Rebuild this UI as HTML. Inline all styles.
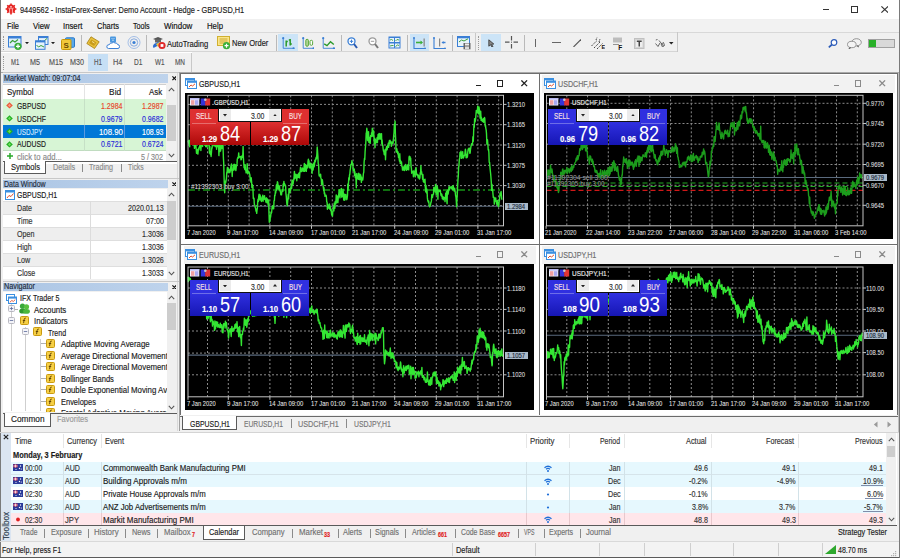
<!DOCTYPE html><html><head><meta charset="utf-8"><style>
html,body{margin:0;padding:0;}
body{width:900px;height:558px;position:relative;overflow:hidden;background:#f0f0f0;font-family:"Liberation Sans",sans-serif;}
div{position:absolute;box-sizing:border-box;}
.t{white-space:nowrap;line-height:1;transform-origin:0 0;-webkit-text-stroke:0.15px currentColor;}
svg{position:absolute;}
</style></head><body>
<div style="left:0px;top:0px;width:900px;height:19px;background:#ffffff;"></div>
<svg style="left:5px;top:3px" width="12" height="12" viewBox="0 0 12 12"><g fill="#e52421"><circle cx="6" cy="6" r="4.4"/><g stroke="#e52421" stroke-width="1.5"><line x1="6" y1="0.6" x2="6" y2="11.4"/><line x1="0.6" y1="6" x2="11.4" y2="6"/><line x1="2.2" y1="2.2" x2="9.8" y2="9.8"/><line x1="9.8" y1="2.2" x2="2.2" y2="9.8"/></g></g><circle cx="6" cy="3.8" r="0.9" fill="#ffd8d8"/><path d="M4.6 5.6V10M7.4 5.6V10" stroke="#ffb0b0" stroke-width="1"/><path d="M3.2 5Q6 6.5 8.8 5" stroke="#ffc0c0" stroke-width="0.7" fill="none"/></svg>
<div class="t" style="left:19.70px;top:5.51px;font-size:9.2px;color:#1a1a1a;font-weight:normal;transform:scaleX(0.8042);">9449562 - InstaForex-Server: Demo Account - Hedge - GBPUSD,H1</div>
<div style="left:822.5px;top:9px;width:6.5px;height:1.1px;background:#333;"></div>
<div style="left:851px;top:6px;width:7px;height:7px;border:1.2px solid #333"></div>
<svg style="left:880.5px;top:6px" width="7.5" height="7" viewBox="0 0 7.5 7"><path d="M0.4 0.4L7.1 6.6M7.1 0.4L0.4 6.6" stroke="#333" stroke-width="1.15"/></svg>
<div style="left:0px;top:19.5px;width:900px;height:12.5px;background:#f2f2f2;"></div>
<div class="t" style="left:7.30px;top:22.66px;font-size:8.2px;color:#111;font-weight:normal;transform:scaleX(0.9082);">File</div>
<div class="t" style="left:33.30px;top:22.66px;font-size:8.2px;color:#111;font-weight:normal;transform:scaleX(0.9475);">View</div>
<div class="t" style="left:63.30px;top:22.66px;font-size:8.2px;color:#111;font-weight:normal;transform:scaleX(0.9460);">Insert</div>
<div class="t" style="left:96.70px;top:22.66px;font-size:8.2px;color:#111;font-weight:normal;transform:scaleX(0.9110);">Charts</div>
<div class="t" style="left:133.30px;top:22.66px;font-size:8.2px;color:#111;font-weight:normal;transform:scaleX(0.8724);">Tools</div>
<div class="t" style="left:164.30px;top:22.66px;font-size:8.2px;color:#111;font-weight:normal;transform:scaleX(0.9738);">Window</div>
<div class="t" style="left:207.30px;top:22.66px;font-size:8.2px;color:#111;font-weight:normal;transform:scaleX(0.9488);">Help</div>
<div style="left:0px;top:32px;width:900px;height:1px;background:#d8d8d8;"></div>
<div style="left:0px;top:33px;width:900px;height:19px;background:#f0f0f0;"></div>
<div style="left:0px;top:32px;width:677px;height:1px;background:#dadada;"></div>
<div style="left:0px;top:51px;width:677px;height:1px;background:#d5d5d5;"></div>
<div style="left:677px;top:32px;width:1px;height:20px;background:#c8c8c8;"></div>
<div style="left:3px;top:36px;width:1px;height:14px;border-left:1px dotted #999"></div>
<div style="left:0px;top:53px;width:900px;height:19px;background:#f0f0f0;"></div>
<div style="left:0px;top:52px;width:192px;height:1px;background:#ffffff;"></div>
<div style="left:191px;top:53px;width:1px;height:19px;background:#c8c8c8;"></div>
<div style="left:3px;top:56px;width:1px;height:14px;border-left:1px dotted #999"></div>
<div style="left:88px;top:54px;width:20px;height:17px;background:#c6dff5;"></div>
<div class="t" style="left:11.00px;top:59.26px;font-size:8.2px;color:#555;font-weight:normal;transform:scaleX(0.7287);">M1</div>
<div class="t" style="left:30.00px;top:59.26px;font-size:8.2px;color:#555;font-weight:normal;transform:scaleX(0.8779);">M5</div>
<div class="t" style="left:49.30px;top:59.26px;font-size:8.2px;color:#555;font-weight:normal;transform:scaleX(0.8777);">M15</div>
<div class="t" style="left:70.00px;top:59.26px;font-size:8.2px;color:#555;font-weight:normal;transform:scaleX(0.8777);">M30</div>
<div class="t" style="left:94.30px;top:59.26px;font-size:8.2px;color:#555;font-weight:normal;transform:scaleX(0.7632);">H1</div>
<div class="t" style="left:113.30px;top:59.26px;font-size:8.2px;color:#555;font-weight:normal;transform:scaleX(0.8968);">H4</div>
<div class="t" style="left:134.30px;top:59.26px;font-size:8.2px;color:#555;font-weight:normal;transform:scaleX(0.8014);">D1</div>
<div class="t" style="left:154.50px;top:59.26px;font-size:8.2px;color:#555;font-weight:normal;transform:scaleX(0.7724);">W1</div>
<div class="t" style="left:175.00px;top:59.26px;font-size:8.2px;color:#555;font-weight:normal;transform:scaleX(0.7842);">MN</div>
<svg style="left:8px;top:35.5px" width="15" height="14" viewBox="0 0 15 14"><rect x="0.5" y="0.5" width="12.5" height="10.5" fill="#dfeefc" stroke="#3a7fd5"/><rect x="0.5" y="0.5" width="12.5" height="2" fill="#3a7fd5"/><path d="M2 7L4.5 4.5L7 6L10 3.5" stroke="#3aa03a" stroke-width="1.1" fill="none"/><circle cx="10" cy="10.3" r="3.6" fill="#3aae3a"/><path d="M8 10.3H12M10 8.3V12.3" stroke="#fff" stroke-width="1.2"/></svg>
<svg style="left:24.9px;top:42.2px" width="4" height="2.2" viewBox="0 0 4 2.2"><path d="M0 0H4L2 2.2Z" fill="#222"/></svg>
<svg style="left:34.5px;top:35.5px" width="14" height="14" viewBox="0 0 14 14"><rect x="3.5" y="0.5" width="9.5" height="8" fill="#e6f2fc" stroke="#3a7fd5"/><rect x="3.5" y="0.5" width="9.5" height="1.6" fill="#3a7fd5"/><path d="M5 4L7 6.5L9 5L12 2.5" stroke="#3aa03a" stroke-width="1" fill="none"/><rect x="0.5" y="4.8" width="9.5" height="8.5" fill="#e6f2fc" stroke="#3a7fd5"/><rect x="0.5" y="4.8" width="9.5" height="1.6" fill="#3a7fd5"/><path d="M1.5 9L3.5 11L6 9.5L9 11" stroke="#3aa03a" stroke-width="1" fill="none"/></svg>
<svg style="left:51.1px;top:42.2px" width="4" height="2.2" viewBox="0 0 4 2.2"><path d="M0 0H4L2 2.2Z" fill="#222"/></svg>
<svg style="left:61px;top:36.5px" width="14" height="13" viewBox="0 0 14 13"><rect x="4.5" y="0.8" width="9" height="9.5" rx="1" fill="#5aa8e8" stroke="#2a78c8"/><rect x="0.5" y="2.5" width="9.5" height="10" rx="1" fill="#f2c83a" stroke="#c8980a"/><text x="5.2" y="11" font-size="8" font-weight="bold" text-anchor="middle" fill="#6a4a00" font-family="Liberation Sans">S</text></svg>
<div style="left:80.5px;top:35px;width:1px;height:16px;background:#b9b9b9;"></div>
<svg style="left:85.5px;top:36px" width="14" height="13" viewBox="0 0 14 13"><path d="M5 0.8L13.2 5.8L8.5 12.5L0.8 7.5Z" fill="#e9c23c" stroke="#a47d10" stroke-width="0.8"/><path d="M5.5 3.5L10.5 6.5L8 10L3 7Z" fill="#c99c1c"/><path d="M6 5.5L8.5 7" stroke="#fff3b0" stroke-width="0.8"/></svg>
<svg style="left:106px;top:36px" width="14" height="13" viewBox="0 0 14 13"><rect x="4" y="0.5" width="6" height="6" rx="1" fill="#4a98e0"/><path d="M5.5 2.5H6.5M7.5 2.5H8.5M6 4.2H8" stroke="#fff" stroke-width="0.6"/><path d="M2.5 12.5H12Q13.5 12.5 13.5 10.5Q13.5 8.5 11.5 8.5Q11 6.5 9 7Q7.5 5.5 6 7Q4 6.5 3.5 8.5Q0.5 8.8 0.8 10.8Q1 12.5 2.5 12.5Z" fill="#fff" stroke="#3a7fd5" stroke-width="1"/></svg>
<svg style="left:127px;top:36.2px" width="14" height="13" viewBox="0 0 14 13"><circle cx="7" cy="6.5" r="1.6" fill="#3a7fd5"/><circle cx="7" cy="6.5" r="3.7" fill="none" stroke="#7aa2dc" stroke-width="0.9"/><circle cx="7" cy="6.5" r="6" fill="none" stroke="#9ab8e4" stroke-width="0.9"/></svg>
<div style="left:146.4px;top:35px;width:1px;height:16px;background:#b9b9b9;"></div>
<svg style="left:151.5px;top:36px" width="14" height="13.5" viewBox="0 0 14 13.5"><path d="M1 3L6 1L11 3L6 5Z" fill="#555"/><rect x="3" y="3.5" width="6" height="3" fill="#666"/><path d="M1.5 12Q0 10 2 8L6 6L9 8Z" fill="#2a6ad0"/><path d="M4 8L8 6L10 9L6 11Z" fill="#e8c040"/><circle cx="10" cy="9.5" r="3.6" fill="#e02828"/><rect x="8.6" y="8.1" width="2.8" height="2.8" fill="#fff"/></svg>
<div class="t" style="left:166.70px;top:39.62px;font-size:8.6px;color:#1a1a1a;font-weight:normal;transform:scaleX(0.8876);">AutoTrading</div>
<svg style="left:216.9px;top:36px" width="14" height="13.5" viewBox="0 0 14 13.5"><rect x="0.5" y="0.5" width="12" height="9" fill="#fbe68a" stroke="#d0b030"/><path d="M2.5 3H10.5M2.5 5H10.5M2.5 7H8" stroke="#c09a20" stroke-width="0.8"/><circle cx="9.5" cy="9.7" r="3.6" fill="#3aae3a"/><path d="M7.5 9.7H11.5M9.5 7.7V11.7" stroke="#fff" stroke-width="1.2"/></svg>
<div class="t" style="left:232.00px;top:39.42px;font-size:8.6px;color:#1a1a1a;font-weight:normal;transform:scaleX(0.8755);">New Order</div>
<div style="left:275.6px;top:35px;width:1px;height:16px;background:#b9b9b9;"></div>
<div style="left:278.1px;top:33.9px;width:19.8px;height:16.8px;background:#cce4f7;"></div>
<svg style="left:282px;top:36.5px" width="12.5" height="12.5" viewBox="0 0 12.5 12.5"><path d="M1.2 1V11.3H11.8" stroke="#3a7fd5" stroke-width="0.9" fill="none"/><circle cx="1.2" cy="1.2" r="1.1" fill="#3a7fd5"/><circle cx="11.6" cy="11.3" r="1.1" fill="#3a7fd5"/><path d="M4.2 9.5V3.5M4.2 4.5H5.8M8.2 8.5V2M8.2 3H6.8M8.2 7H9.8" stroke="#2a9a2a" stroke-width="1.5" fill="none"/></svg>
<svg style="left:301.8px;top:36.5px" width="12.5" height="12.5" viewBox="0 0 12.5 12.5"><path d="M1.2 1V11.3H11.8" stroke="#3a7fd5" stroke-width="0.9" fill="none"/><circle cx="1.2" cy="1.2" r="1.1" fill="#3a7fd5"/><circle cx="11.6" cy="11.3" r="1.1" fill="#3a7fd5"/><rect x="3.8" y="2.3" width="2.6" height="7" rx="1.2" fill="#b8d8a0" stroke="#4aa02a" stroke-width="0.9"/><rect x="8" y="3.3" width="2.6" height="5" rx="1.2" fill="#fff" stroke="#4aa02a" stroke-width="0.9"/></svg>
<svg style="left:322px;top:36.5px" width="13" height="12.5" viewBox="0 0 13 12.5"><path d="M1.2 1V11.3H12.3" stroke="#3a7fd5" stroke-width="0.9" fill="none"/><circle cx="1.2" cy="1.2" r="1.1" fill="#3a7fd5"/><circle cx="12" cy="11.3" r="1.1" fill="#3a7fd5"/><path d="M2.2 6.8L5 8.6L8.5 4.8L11.8 7.5" stroke="#2a9a2a" stroke-width="1.4" fill="none"/></svg>
<div style="left:341px;top:35px;width:1px;height:16px;background:#b9b9b9;"></div>
<svg style="left:347.3px;top:36.5px" width="11" height="12.5" viewBox="0 0 11 12.5"><circle cx="4.5" cy="4.3" r="3.5" fill="#fff" stroke="#3a7fd5" stroke-width="1.3"/><path d="M2.8 4.3H6.2M4.5 2.6V6" stroke="#3a7fd5" stroke-width="1"/><path d="M7 7L10 11" stroke="#2a5ab0" stroke-width="2"/></svg>
<svg style="left:368px;top:36.5px" width="11" height="12.5" viewBox="0 0 11 12.5"><circle cx="4.5" cy="4.3" r="3.5" fill="#fff" stroke="#9a9a9a" stroke-width="1.3"/><path d="M2.8 4.3H6.2" stroke="#9a9a9a" stroke-width="1"/><path d="M7 7L10 11" stroke="#777" stroke-width="2"/></svg>
<svg style="left:387.8px;top:36.2px" width="13" height="13" viewBox="0 0 13 13"><rect x="0.5" y="0.5" width="12" height="12" fill="#3a7fd5"/><rect x="1.5" y="2" width="4.5" height="4" fill="#e8f4fc"/><rect x="7" y="2" width="4.5" height="4" fill="#e8f4fc"/><rect x="1.5" y="7.5" width="4.5" height="4" fill="#e8f4fc"/><rect x="7" y="7.5" width="4.5" height="4" fill="#e8f4fc"/><path d="M2 4L3.5 3.5L5 4.5M7.5 5L9 3.5L11 4M2 10L4 9.5L5.5 9.5M7.5 10.5L9.5 9L11 9.5" stroke="#3a9a3a" stroke-width="0.9" fill="none"/></svg>
<div style="left:406.6px;top:35px;width:1px;height:16px;background:#b9b9b9;"></div>
<div style="left:410px;top:33.9px;width:18.7px;height:16.8px;background:#cce4f7;"></div>
<svg style="left:413px;top:36.5px" width="13.5" height="12.5" viewBox="0 0 13.5 12.5"><path d="M1 0.5V11.5H12.5" stroke="#3a7fd5" stroke-width="1.1" fill="none"/><circle cx="1" cy="1" r="0.9" fill="#3a7fd5"/><circle cx="12" cy="11.5" r="0.9" fill="#3a7fd5"/><rect x="10.5" y="1.5" width="1.3" height="8" fill="#888"/><path d="M3 5.5H9" stroke="#3ab03a" stroke-width="1.6"/><path d="M7.5 3.5L10 5.5L7.5 7.5Z" fill="#3ab03a"/></svg>
<svg style="left:433px;top:36.5px" width="13.5" height="12.5" viewBox="0 0 13.5 12.5"><path d="M1 0.5V11.5H12.5" stroke="#3a7fd5" stroke-width="1.1" fill="none"/><circle cx="1" cy="1" r="0.9" fill="#3a7fd5"/><circle cx="12" cy="11.5" r="0.9" fill="#3a7fd5"/><rect x="6" y="1.5" width="1.2" height="8" fill="#888"/><path d="M8.5 5.5L10.5 4V7Z" fill="#3a7fd5"/><rect x="10" y="4.8" width="2.5" height="1.4" fill="#3a7fd5"/></svg>
<div style="left:451.7px;top:35px;width:1px;height:16px;background:#b9b9b9;"></div>
<svg style="left:457px;top:36px" width="14" height="13.5" viewBox="0 0 14 13.5"><rect x="0.5" y="0.5" width="12" height="10" fill="#e8f4fc" stroke="#3a7fd5"/><rect x="0.5" y="0.5" width="12" height="1.8" fill="#3a7fd5"/><path d="M2 6L4.5 4L7 5L11 2.8" stroke="#3aa03a" stroke-width="1" fill="none"/><rect x="6.5" y="7" width="7" height="6.3" fill="#666"/><rect x="8" y="7.5" width="4" height="2" fill="#eee"/><rect x="8" y="10.5" width="4" height="2.5" fill="#ddd"/></svg>
<div style="left:474.7px;top:33px;width:1px;height:19px;background:#c8c8c8;"></div>
<div style="left:477.5px;top:36px;width:1px;height:14px;border-left:1px dotted #999"></div>
<div style="left:480.9px;top:33.9px;width:19.8px;height:16.8px;background:#cce4f7;"></div>
<svg style="left:487.5px;top:38.5px" width="6.5" height="8.5" viewBox="0 0 6.5 8.5"><path d="M0.8 0.8L5.8 5L3.6 5.3L5 7.8L4 8.2L2.6 5.8L0.8 7.2Z" fill="#888" stroke="#333" stroke-width="0.8"/></svg>
<svg style="left:504.5px;top:36.3px" width="13" height="12.5" viewBox="0 0 13 12.5"><path d="M6.5 0V4.5M6.5 8V12.5M0 6.2H4.5M8.5 6.2H13" stroke="#555" stroke-width="1.2"/><rect x="6" y="5.7" width="1" height="1" fill="#555"/></svg>
<div style="left:523.7px;top:35px;width:1px;height:16px;background:#b9b9b9;"></div>
<div style="left:535px;top:38.6px;width:1px;height:8.399999999999999px;background:#666;"></div>
<div style="left:551.7px;top:42.4px;width:8.899999999999977px;height:1px;background:#666;"></div>
<svg style="left:572.5px;top:38.5px" width="8.5" height="8.5" viewBox="0 0 8.5 8.5"><path d="M0.5 8L8 0.5" stroke="#555" stroke-width="1.1"/></svg>
<svg style="left:591px;top:36.5px" width="13.5" height="12.5" viewBox="0 0 13.5 12.5"><path d="M0.5 9L6 3.5M3 11L9.5 4.5M6 12L11.5 6.5M5 3L6 0.5M8 5L9 2" stroke="#444" stroke-width="1" fill="none" stroke-dasharray="1.5 0.8"/><text x="10.5" y="12.3" font-size="5.5" font-weight="bold" fill="#111" font-family="Liberation Sans">E</text></svg>
<svg style="left:613px;top:36.5px" width="11" height="13" viewBox="0 0 11 13"><rect x="0" y="0.5" width="9" height="5" fill="#bdbdbd"/><path d="M0 7.5H6" stroke="#888" stroke-width="0.9"/><text x="5.3" y="12.8" font-size="6.5" font-weight="bold" fill="#111" font-family="Liberation Sans">F</text></svg>
<svg style="left:634px;top:37.5px" width="10.5" height="11" viewBox="0 0 10.5 11"><rect x="0.5" y="0.5" width="9.5" height="10" fill="#d4d4d4" stroke="#c0c0c0"/><rect x="2" y="2" width="6.5" height="7" fill="#eee"/><path d="M2.8 3.3H7.7M5.25 3.3V8.5" stroke="#444" stroke-width="1.5"/></svg>
<svg style="left:654.5px;top:38.5px" width="10" height="8.5" viewBox="0 0 10 8.5"><path d="M0.8 1L2.5 0.5M0.5 4.5L3 7.5L5 4M4 1.5L8.5 7M6.2 5.2L8.5 3.5L9.5 6.5L7.5 8Z" stroke="#555" stroke-width="0.9" fill="none"/></svg>
<svg style="left:669px;top:42px" width="4.5" height="2.5" viewBox="0 0 4.5 2.5"><path d="M0 0H4.5L2.25 2.5Z" fill="#222"/></svg>
<svg style="left:828px;top:38.5px" width="10" height="9" viewBox="0 0 10 9"><circle cx="6" cy="3.5" r="2.8" fill="#fff" stroke="#2a5ab8" stroke-width="1.2"/><path d="M4 5.5L0.8 8.3" stroke="#2a5ab8" stroke-width="1.7"/></svg>
<svg style="left:847px;top:38px" width="15" height="11" viewBox="0 0 15 11"><ellipse cx="9.5" cy="4.3" rx="4.8" ry="3.6" fill="#f2f2f2" stroke="#8a8a8a" stroke-width="0.9"/><ellipse cx="4.8" cy="6.5" rx="4.3" ry="3.2" fill="#f4f4f4" stroke="#8a8a8a" stroke-width="0.9"/><path d="M2.5 9.5L2 10.8L4 9.6M11 7.6L11.5 9L10 7.8" stroke="#555" stroke-width="0.8" fill="none"/></svg>
<div style="left:868px;top:39.1px;width:27.1px;height:9.3px;background:#d9d9d9;border:1px solid #a0a0a0"></div>
<div style="left:869px;top:40.1px;width:6.6px;height:7.3px;background:#28b028;"></div>
<div style="left:0px;top:72px;width:900px;height:1px;background:#a9a9a9;"></div>
<div style="left:0px;top:0px;width:1px;height:558px;background:#7a7a7a;"></div>
<div style="left:1px;top:73px;width:179px;height:358px;background:#f0f0f0;"></div>
<div style="left:177px;top:73px;width:1px;height:358px;background:#d9d9d9;"></div>
<div style="left:179px;top:73px;width:1px;height:358px;background:#a0a0a0;"></div>
<div style="left:3px;top:74.4px;width:165px;height:8.199999999999989px;background:linear-gradient(to right,#abc5e4,#bed3ec)"></div>
<div class="t" style="left:4.10px;top:74.07px;font-size:8.3px;color:#1e2a3a;font-weight:normal;transform:scaleX(0.8713);">Market Watch: 09:07:04</div>
<svg style="left:171.5px;top:76.2px" width="4.6" height="4.6" viewBox="0 0 4.6 4.6"><path d="M0.4 0.4L4.2 4.2M4.2 0.4L0.4 4.2" stroke="#111" stroke-width="1.2"/></svg>
<div style="left:3px;top:72.4px;width:176px;height:1px;background:#c8c8c8;"></div>
<div style="left:3px;top:83.5px;width:174px;height:80px;background:#ffffff;"></div>
<div style="left:3px;top:83.5px;width:174px;height:0.8px;background:#cfcfcf;"></div>
<div class="t" style="left:7.00px;top:87.57px;font-size:8.3px;color:#222;font-weight:normal;transform:scaleX(0.9575);">Symbol</div>
<div class="t" style="left:109.10px;top:87.57px;font-size:8.3px;color:#222;font-weight:normal;">Bid</div>
<div class="t" style="left:149.00px;top:87.57px;font-size:8.3px;color:#222;font-weight:normal;transform:scaleX(0.9540);">Ask</div>
<div style="left:3px;top:99.4px;width:162.6px;height:12.8px;background:#d7f5d5;"></div>
<div style="left:3px;top:111.7px;width:162.6px;height:0.6px;background:#c0dcc0;"></div>
<div style="left:84.4px;top:99.4px;width:1px;height:12.799999999999997px;background:#c6e0c6;"></div>
<div style="left:124.4px;top:99.4px;width:1px;height:12.799999999999997px;background:#c6e0c6;"></div>
<svg style="left:6.3px;top:102.2px" width="7" height="7" viewBox="0 0 7 7"><path d="M3.5 0.2L6.8 3.4L3.5 6.6L0.2 3.4Z" fill="#ea5a3a"/><path d="M3.5 1.8L5 3.4L3.5 5L2 3.4Z" fill="#ff9a80"/></svg>
<div class="t" style="left:17.20px;top:102.02px;font-size:8.6px;color:#1a1a1a;font-weight:normal;transform:scaleX(0.7957);">GBPUSD</div>
<div class="t" style="left:101.30px;top:102.02px;font-size:8.6px;color:#e8452c;font-weight:normal;transform:scaleX(0.8175);">1.2984</div>
<div class="t" style="left:141.60px;top:102.02px;font-size:8.6px;color:#e8452c;font-weight:normal;transform:scaleX(0.8175);">1.2987</div>
<div style="left:3px;top:112.2px;width:162.6px;height:12.8px;background:#d7f5d5;"></div>
<div style="left:3px;top:124.5px;width:162.6px;height:0.6px;background:#c0dcc0;"></div>
<div style="left:84.4px;top:112.2px;width:1px;height:12.799999999999997px;background:#c6e0c6;"></div>
<div style="left:124.4px;top:112.2px;width:1px;height:12.799999999999997px;background:#c6e0c6;"></div>
<svg style="left:6.3px;top:115.0px" width="7" height="7" viewBox="0 0 7 7"><path d="M3.5 0.2L6.8 3.4L3.5 6.6L0.2 3.4Z" fill="#22b022"/><path d="M3.5 1.8L5 3.4L3.5 5L2 3.4Z" fill="#70e060"/></svg>
<div class="t" style="left:17.20px;top:114.82px;font-size:8.6px;color:#1a1a1a;font-weight:normal;transform:scaleX(0.8065);">USDCHF</div>
<div class="t" style="left:101.30px;top:114.82px;font-size:8.6px;color:#2c2cd8;font-weight:normal;transform:scaleX(0.8175);">0.9679</div>
<div class="t" style="left:141.60px;top:114.82px;font-size:8.6px;color:#2c2cd8;font-weight:normal;transform:scaleX(0.8175);">0.9682</div>
<div style="left:3px;top:125.0px;width:162.6px;height:12.8px;background:#0078d7;"></div>
<div style="left:3px;top:137.3px;width:162.6px;height:0.6px;background:#0078d7;"></div>
<div style="left:84.4px;top:125.0px;width:1px;height:12.800000000000011px;background:#5a9ae0;"></div>
<div style="left:124.4px;top:125.0px;width:1px;height:12.800000000000011px;background:#5a9ae0;"></div>
<svg style="left:6.3px;top:127.8px" width="7" height="7" viewBox="0 0 7 7"><path d="M3.5 0.2L6.8 3.4L3.5 6.6L0.2 3.4Z" fill="#22b022"/><path d="M3.5 1.8L5 3.4L3.5 5L2 3.4Z" fill="#70e060"/></svg>
<div class="t" style="left:17.20px;top:127.62px;font-size:8.6px;color:#cfe6ff;font-weight:normal;transform:scaleX(0.7545);">USDJPY</div>
<div class="t" style="left:98.80px;top:127.62px;font-size:8.6px;color:#ffffff;font-weight:normal;transform:scaleX(0.9125);">108.90</div>
<div class="t" style="left:141.60px;top:127.62px;font-size:8.6px;color:#ffffff;font-weight:normal;transform:scaleX(0.8175);">108.93</div>
<div style="left:3px;top:137.8px;width:162.6px;height:12.8px;background:#d7f5d5;"></div>
<div style="left:3px;top:150.10000000000002px;width:162.6px;height:0.6px;background:#c0dcc0;"></div>
<div style="left:84.4px;top:137.8px;width:1px;height:12.800000000000011px;background:#c6e0c6;"></div>
<div style="left:124.4px;top:137.8px;width:1px;height:12.800000000000011px;background:#c6e0c6;"></div>
<svg style="left:6.3px;top:140.60000000000002px" width="7" height="7" viewBox="0 0 7 7"><path d="M3.5 0.2L6.8 3.4L3.5 6.6L0.2 3.4Z" fill="#22b022"/><path d="M3.5 1.8L5 3.4L3.5 5L2 3.4Z" fill="#70e060"/></svg>
<div class="t" style="left:17.20px;top:140.42px;font-size:8.6px;color:#1a1a1a;font-weight:normal;transform:scaleX(0.7958);">AUDUSD</div>
<div class="t" style="left:101.30px;top:140.42px;font-size:8.6px;color:#2c2cd8;font-weight:normal;transform:scaleX(0.8175);">0.6721</div>
<div class="t" style="left:141.60px;top:140.42px;font-size:8.6px;color:#2c2cd8;font-weight:normal;transform:scaleX(0.8175);">0.6724</div>
<div style="left:84.4px;top:84px;width:1px;height:15.400000000000006px;background:#e4e4e4;"></div>
<div style="left:124.4px;top:84px;width:1px;height:15.400000000000006px;background:#e4e4e4;"></div>
<svg style="left:7px;top:153px" width="6" height="6" viewBox="0 0 6 6"><path d="M3 0V6M0 3H6" stroke="#2aa82a" stroke-width="1.5"/></svg>
<div class="t" style="left:17.20px;top:152.82px;font-size:8.6px;color:#8a8a8a;font-weight:normal;transform:scaleX(0.8967);">click to add...</div>
<div class="t" style="left:141.00px;top:152.82px;font-size:8.6px;color:#8a8a8a;font-weight:normal;transform:scaleX(0.8366);">5 / 302</div>
<div style="left:165.6px;top:83.5px;width:11.400000000000006px;height:77.5px;background:#f0f0f0;"></div>
<div style="left:167.2px;top:105px;width:8.8px;height:35.5px;background:#cdcdcd;"></div>
<svg style="left:168px;top:86.5px" width="7" height="5" viewBox="0 0 7 5"><path d="M0.8 4.2L3.5 1.2L6.2 4.2" stroke="#555" stroke-width="1.1" fill="none"/></svg>
<svg style="left:168px;top:153px" width="7" height="5" viewBox="0 0 7 5"><path d="M0.8 0.8L3.5 3.8L6.2 0.8" stroke="#555" stroke-width="1.1" fill="none"/></svg>
<div style="left:3px;top:161px;width:174px;height:1px;background:#5a5a5a;"></div>
<div style="left:4.4px;top:161px;width:41.7px;height:13.4px;background:#ffffff;border:1px solid #5a5a5a;border-top:none;border-bottom-width:1.5px"></div>
<div class="t" style="left:11.10px;top:163.42px;font-size:8.6px;color:#222;font-weight:normal;transform:scaleX(0.8794);">Symbols</div>
<div class="t" style="left:53.30px;top:163.42px;font-size:8.6px;color:#8a8a8a;font-weight:normal;transform:scaleX(0.8445);">Details</div>
<div style="left:82.3px;top:164px;width:1px;height:8px;background:#8a8a8a;"></div>
<div class="t" style="left:89.00px;top:163.42px;font-size:8.6px;color:#8a8a8a;font-weight:normal;transform:scaleX(0.8322);">Trading</div>
<div style="left:121px;top:164px;width:1px;height:8px;background:#8a8a8a;"></div>
<div class="t" style="left:128.00px;top:163.42px;font-size:8.6px;color:#8a8a8a;font-weight:normal;transform:scaleX(0.7901);">Ticks</div>
<div style="left:3px;top:179.5px;width:165px;height:8.699999999999989px;background:linear-gradient(to right,#abc5e4,#bed3ec)"></div>
<div class="t" style="left:4.10px;top:179.67px;font-size:8.3px;color:#1e2a3a;font-weight:normal;transform:scaleX(0.8449);">Data Window</div>
<svg style="left:171.5px;top:181.54999999999998px" width="4.6" height="4.6" viewBox="0 0 4.6 4.6"><path d="M0.4 0.4L4.2 4.2M4.2 0.4L0.4 4.2" stroke="#111" stroke-width="1.2"/></svg>
<div style="left:3px;top:177.5px;width:176px;height:1px;background:#c8c8c8;"></div>
<div style="left:3px;top:188.8px;width:174px;height:90.5px;background:#ffffff;"></div>
<svg style="left:5px;top:190px" width="10" height="10" viewBox="0 0 10 10"><rect x="0.5" y="0.5" width="9" height="9" fill="#fff" stroke="#3b8fe0"/><rect x="0.5" y="0.5" width="9" height="2" fill="#3b8fe0"/><path d="M2 8L4 5.5L6 6.5L8.5 3.5" stroke="#e05030" stroke-width="1" fill="none"/></svg>
<div class="t" style="left:16.50px;top:191.12px;font-size:8.6px;color:#1a1a1a;font-weight:normal;transform:scaleX(0.8088);">GBPUSD,H1</div>
<div style="left:3px;top:201.4px;width:164px;height:12.95px;background:#eeeeee;"></div>
<div style="left:3px;top:201.4px;width:164px;height:0.6px;background:#dedede;"></div>
<div style="left:90.1px;top:201.4px;width:1px;height:12.949999999999989px;background:#dcdcdc;"></div>
<div class="t" style="left:16.90px;top:204.22px;font-size:8.6px;color:#333;font-weight:normal;transform:scaleX(0.8300);">Date</div>
<div class="t" style="left:128.18px;top:204.22px;font-size:8.6px;color:#333;font-weight:normal;transform:scaleX(0.8300);">2020.01.13</div>
<div style="left:3px;top:214.35px;width:164px;height:12.95px;background:#ffffff;"></div>
<div style="left:3px;top:214.35px;width:164px;height:0.6px;background:#dedede;"></div>
<div style="left:90.1px;top:214.35px;width:1px;height:12.949999999999989px;background:#dcdcdc;"></div>
<div class="t" style="left:16.90px;top:217.17px;font-size:8.6px;color:#333;font-weight:normal;transform:scaleX(0.8300);">Time</div>
<div class="t" style="left:146.04px;top:217.17px;font-size:8.6px;color:#333;font-weight:normal;transform:scaleX(0.8300);">07:00</div>
<div style="left:3px;top:227.29999999999998px;width:164px;height:12.95px;background:#eeeeee;"></div>
<div style="left:3px;top:227.29999999999998px;width:164px;height:0.6px;background:#dedede;"></div>
<div style="left:90.1px;top:227.29999999999998px;width:1px;height:12.949999999999989px;background:#dcdcdc;"></div>
<div class="t" style="left:16.90px;top:230.12px;font-size:8.6px;color:#333;font-weight:normal;transform:scaleX(0.8300);">Open</div>
<div class="t" style="left:142.07px;top:230.12px;font-size:8.6px;color:#333;font-weight:normal;transform:scaleX(0.8300);">1.3036</div>
<div style="left:3px;top:240.24999999999997px;width:164px;height:12.95px;background:#ffffff;"></div>
<div style="left:3px;top:240.24999999999997px;width:164px;height:0.6px;background:#dedede;"></div>
<div style="left:90.1px;top:240.24999999999997px;width:1px;height:12.949999999999989px;background:#dcdcdc;"></div>
<div class="t" style="left:16.90px;top:243.07px;font-size:8.6px;color:#333;font-weight:normal;transform:scaleX(0.8300);">High</div>
<div class="t" style="left:142.07px;top:243.07px;font-size:8.6px;color:#333;font-weight:normal;transform:scaleX(0.8300);">1.3036</div>
<div style="left:3px;top:253.19999999999996px;width:164px;height:12.95px;background:#eeeeee;"></div>
<div style="left:3px;top:253.19999999999996px;width:164px;height:0.6px;background:#dedede;"></div>
<div style="left:90.1px;top:253.19999999999996px;width:1px;height:12.950000000000017px;background:#dcdcdc;"></div>
<div class="t" style="left:16.90px;top:256.02px;font-size:8.6px;color:#333;font-weight:normal;transform:scaleX(0.8300);">Low</div>
<div class="t" style="left:142.07px;top:256.02px;font-size:8.6px;color:#333;font-weight:normal;transform:scaleX(0.8300);">1.3026</div>
<div style="left:3px;top:266.15px;width:164px;height:12.95px;background:#ffffff;"></div>
<div style="left:3px;top:266.15px;width:164px;height:0.6px;background:#dedede;"></div>
<div style="left:90.1px;top:266.15px;width:1px;height:12.949999999999989px;background:#dcdcdc;"></div>
<div class="t" style="left:16.90px;top:268.97px;font-size:8.6px;color:#333;font-weight:normal;transform:scaleX(0.8300);">Close</div>
<div class="t" style="left:142.07px;top:268.97px;font-size:8.6px;color:#333;font-weight:normal;transform:scaleX(0.8300);">1.3033</div>
<div style="left:167px;top:188.8px;width:10px;height:90.5px;background:#f0f0f0;"></div>
<div style="left:167.2px;top:200.8px;width:8.8px;height:39.19999999999999px;background:#cdcdcd;"></div>
<svg style="left:168px;top:191.8px" width="7" height="5" viewBox="0 0 7 5"><path d="M0.8 4.2L3.5 1.2L6.2 4.2" stroke="#555" stroke-width="1.1" fill="none"/></svg>
<svg style="left:168px;top:271.3px" width="7" height="5" viewBox="0 0 7 5"><path d="M0.8 0.8L3.5 3.8L6.2 0.8" stroke="#555" stroke-width="1.1" fill="none"/></svg>
<div style="left:3px;top:283.2px;width:165px;height:7.800000000000011px;background:linear-gradient(to right,#abc5e4,#bed3ec)"></div>
<div class="t" style="left:4.10px;top:282.47px;font-size:8.3px;color:#1e2a3a;font-weight:normal;transform:scaleX(0.8727);">Navigator</div>
<svg style="left:171.5px;top:284.8px" width="4.6" height="4.6" viewBox="0 0 4.6 4.6"><path d="M0.4 0.4L4.2 4.2M4.2 0.4L0.4 4.2" stroke="#111" stroke-width="1.2"/></svg>
<div style="left:3px;top:281.2px;width:176px;height:1px;background:#c8c8c8;"></div>
<div style="left:3px;top:291.6px;width:174px;height:120px;background:#ffffff;"></div>
<div style="left:10.5px;top:303px;width:1px;height:108px;border-left:1px solid #cfcfcf"></div>
<div style="left:25px;top:327px;width:1px;height:84px;border-left:1px solid #cfcfcf"></div>
<div style="left:40px;top:339px;width:1px;height:72px;border-left:1px solid #cfcfcf"></div>
<svg style="left:5.5px;top:293.5px" width="11" height="10" viewBox="0 0 11 10"><rect x="0.5" y="0.5" width="8" height="6" fill="#fff" stroke="#3b8fe0"/><rect x="2.5" y="3" width="8" height="6.5" fill="#fff" stroke="#3b8fe0"/><rect x="2.5" y="3" width="8" height="1.6" fill="#3b8fe0"/><path d="M3.8 8.3L5.8 6.5L7.3 7.4L9.3 5.6" stroke="#e05030" stroke-width="0.9" fill="none"/></svg>
<div style="left:0;top:0;width:166.7px;height:411.7px;overflow:hidden">
<div class="t" style="left:20.20px;top:294.42px;font-size:8.6px;color:#1a1a1a;font-weight:normal;transform:scaleX(0.8265);">IFX Trader 5</div>
<div style="left:12px;top:308.5px;width:6px;height:1px;background:#b0b0b0;"></div>
<svg style="left:8px;top:305px" width="7" height="7" viewBox="0 0 7 7"><rect x="0.5" y="0.5" width="6" height="6" rx="1" fill="#f4f4f8" stroke="#b8b8c0"/><path d="M1.8 3.5H5.2M3.5 1.8V5.2" stroke="#5a6a9a" stroke-width="0.8"/></svg>
<svg style="left:18.5px;top:303px" width="11" height="11" viewBox="0 0 11 11"><circle cx="3.5" cy="3.2" r="2.6" fill="#3aa83a"/><circle cx="7.5" cy="3.8" r="2.6" fill="#59c13f"/><ellipse cx="3.6" cy="8" rx="3.4" ry="2.6" fill="#2f9a2f"/><ellipse cx="7.5" cy="8.4" rx="3.4" ry="2.4" fill="#4bb83b"/></svg>
<div class="t" style="left:33.60px;top:305.72px;font-size:8.6px;color:#1a1a1a;font-weight:normal;transform:scaleX(0.9131);">Accounts</div>
<svg style="left:8px;top:316.5px" width="7" height="7" viewBox="0 0 7 7"><rect x="0.5" y="0.5" width="6" height="6" rx="1" fill="#f4f4f8" stroke="#b8b8c0"/><path d="M1.8 3.5H5.2" stroke="#5a6a9a" stroke-width="0.8"/></svg>
<svg style="left:19.5px;top:315.5px" width="9" height="9" viewBox="0 0 9 9"><rect x="0.5" y="0.5" width="8" height="8" rx="1" fill="#f6cf45" stroke="#c99a10"/><path d="M5.8 2.2C4.6 1.8 4.2 2.6 4 4.2L3.6 7.2M2.8 4.5H5.2" stroke="#5a3c00" stroke-width="0.9" fill="none"/></svg>
<div class="t" style="left:33.60px;top:316.92px;font-size:8.6px;color:#1a1a1a;font-weight:normal;transform:scaleX(0.9012);">Indicators</div>
<svg style="left:22px;top:328px" width="7" height="7" viewBox="0 0 7 7"><rect x="0.5" y="0.5" width="6" height="6" rx="1" fill="#f4f4f8" stroke="#b8b8c0"/><path d="M1.8 3.5H5.2" stroke="#5a6a9a" stroke-width="0.8"/></svg>
<svg style="left:33px;top:327px" width="9" height="9" viewBox="0 0 9 9"><rect x="0.5" y="0.5" width="8" height="8" rx="1" fill="#f6cf45" stroke="#c99a10"/><path d="M5.8 2.2C4.6 1.8 4.2 2.6 4 4.2L3.6 7.2M2.8 4.5H5.2" stroke="#5a3c00" stroke-width="0.9" fill="none"/></svg>
<div class="t" style="left:47.80px;top:328.52px;font-size:8.6px;color:#1a1a1a;font-weight:normal;transform:scaleX(0.8173);">Trend</div>
<div style="left:41px;top:343.2px;width:5px;height:1px;background:#b0b0b0;"></div>
<svg style="left:46px;top:339.0px" width="9" height="9" viewBox="0 0 9 9"><rect x="0.5" y="0.5" width="8" height="8" rx="1" fill="#f6cf45" stroke="#c99a10"/><path d="M5.8 2.2C4.6 1.8 4.2 2.6 4 4.2L3.6 7.2M2.8 4.5H5.2" stroke="#5a3c00" stroke-width="0.9" fill="none"/></svg>
<div class="t" style="left:60.50px;top:340.12px;font-size:8.6px;color:#1a1a1a;font-weight:normal;transform:scaleX(0.9110);">Adaptive Moving Average</div>
<div style="left:41px;top:354.75px;width:5px;height:1px;background:#b0b0b0;"></div>
<svg style="left:46px;top:350.55px" width="9" height="9" viewBox="0 0 9 9"><rect x="0.5" y="0.5" width="8" height="8" rx="1" fill="#f6cf45" stroke="#c99a10"/><path d="M5.8 2.2C4.6 1.8 4.2 2.6 4 4.2L3.6 7.2M2.8 4.5H5.2" stroke="#5a3c00" stroke-width="0.9" fill="none"/></svg>
<div class="t" style="left:60.50px;top:351.67px;font-size:8.6px;color:#1a1a1a;font-weight:normal;transform:scaleX(0.9110);">Average Directional Movement Index</div>
<div style="left:41px;top:366.3px;width:5px;height:1px;background:#b0b0b0;"></div>
<svg style="left:46px;top:362.1px" width="9" height="9" viewBox="0 0 9 9"><rect x="0.5" y="0.5" width="8" height="8" rx="1" fill="#f6cf45" stroke="#c99a10"/><path d="M5.8 2.2C4.6 1.8 4.2 2.6 4 4.2L3.6 7.2M2.8 4.5H5.2" stroke="#5a3c00" stroke-width="0.9" fill="none"/></svg>
<div class="t" style="left:60.50px;top:363.22px;font-size:8.6px;color:#1a1a1a;font-weight:normal;transform:scaleX(0.9110);">Average Directional Movement Index Wilder</div>
<div style="left:41px;top:377.85px;width:5px;height:1px;background:#b0b0b0;"></div>
<svg style="left:46px;top:373.65000000000003px" width="9" height="9" viewBox="0 0 9 9"><rect x="0.5" y="0.5" width="8" height="8" rx="1" fill="#f6cf45" stroke="#c99a10"/><path d="M5.8 2.2C4.6 1.8 4.2 2.6 4 4.2L3.6 7.2M2.8 4.5H5.2" stroke="#5a3c00" stroke-width="0.9" fill="none"/></svg>
<div class="t" style="left:60.50px;top:374.77px;font-size:8.6px;color:#1a1a1a;font-weight:normal;transform:scaleX(0.8782);">Bollinger Bands</div>
<div style="left:41px;top:389.40000000000003px;width:5px;height:1px;background:#b0b0b0;"></div>
<svg style="left:46px;top:385.20000000000005px" width="9" height="9" viewBox="0 0 9 9"><rect x="0.5" y="0.5" width="8" height="8" rx="1" fill="#f6cf45" stroke="#c99a10"/><path d="M5.8 2.2C4.6 1.8 4.2 2.6 4 4.2L3.6 7.2M2.8 4.5H5.2" stroke="#5a3c00" stroke-width="0.9" fill="none"/></svg>
<div class="t" style="left:60.50px;top:386.32px;font-size:8.6px;color:#1a1a1a;font-weight:normal;transform:scaleX(0.9110);">Double Exponential Moving Average</div>
<div style="left:41px;top:400.95000000000005px;width:5px;height:1px;background:#b0b0b0;"></div>
<svg style="left:46px;top:396.75000000000006px" width="9" height="9" viewBox="0 0 9 9"><rect x="0.5" y="0.5" width="8" height="8" rx="1" fill="#f6cf45" stroke="#c99a10"/><path d="M5.8 2.2C4.6 1.8 4.2 2.6 4 4.2L3.6 7.2M2.8 4.5H5.2" stroke="#5a3c00" stroke-width="0.9" fill="none"/></svg>
<div class="t" style="left:60.50px;top:397.87px;font-size:8.6px;color:#1a1a1a;font-weight:normal;transform:scaleX(0.8690);">Envelopes</div>
<div style="left:41px;top:412.50000000000006px;width:5px;height:1px;background:#b0b0b0;"></div>
<svg style="left:46px;top:408.30000000000007px" width="9" height="9" viewBox="0 0 9 9"><rect x="0.5" y="0.5" width="8" height="8" rx="1" fill="#f6cf45" stroke="#c99a10"/><path d="M5.8 2.2C4.6 1.8 4.2 2.6 4 4.2L3.6 7.2M2.8 4.5H5.2" stroke="#5a3c00" stroke-width="0.9" fill="none"/></svg>
<div class="t" style="left:60.50px;top:409.42px;font-size:8.6px;color:#1a1a1a;font-weight:normal;transform:scaleX(0.9110);">Fractal Adaptive Moving Average</div>
</div>
<div style="left:166.7px;top:291.6px;width:10.300000000000011px;height:121.39999999999998px;background:#f0f0f0;"></div>
<div style="left:167.2px;top:302.8px;width:8.8px;height:26.899999999999977px;background:#cdcdcd;"></div>
<svg style="left:168px;top:294.6px" width="7" height="5" viewBox="0 0 7 5"><path d="M0.8 4.2L3.5 1.2L6.2 4.2" stroke="#555" stroke-width="1.1" fill="none"/></svg>
<svg style="left:168px;top:405px" width="7" height="5" viewBox="0 0 7 5"><path d="M0.8 0.8L3.5 3.8L6.2 0.8" stroke="#555" stroke-width="1.1" fill="none"/></svg>
<div style="left:3px;top:411.7px;width:174px;height:18px;background:#f0f0f0;"></div>
<div style="left:3px;top:412.8px;width:174px;height:1px;background:#5a5a5a;"></div>
<div style="left:4.4px;top:412.5px;width:46.2px;height:14px;background:#ffffff;border:1px solid #5a5a5a;border-top:none;border-bottom-width:1.5px"></div>
<div class="t" style="left:10.75px;top:415.42px;font-size:8.6px;color:#222;font-weight:normal;transform:scaleX(0.9632);">Common</div>
<div class="t" style="left:56.50px;top:415.42px;font-size:8.6px;color:#9a9a9a;font-weight:normal;transform:scaleX(0.8766);">Favorites</div>
<div style="left:180px;top:73px;width:360px;height:172px;background:#ffffff;border:1.2px solid #6e6e6e"></div>
<svg style="left:184.5px;top:78px" width="12" height="11" viewBox="0 0 12 11"><rect x="0.5" y="0.5" width="9" height="7" fill="#fff" stroke="#3b8fe0"/><rect x="0.5" y="0.5" width="9" height="1.8" fill="#3b8fe0"/><rect x="2.5" y="3" width="9" height="7.5" fill="#fff" stroke="#3b8fe0"/><rect x="2.5" y="3" width="9" height="1.8" fill="#3b8fe0"/><path d="M4 9L6 7L7.6 8L10 5.8" stroke="#e05030" stroke-width="1" fill="none"/></svg>
<div class="t" style="left:198.50px;top:79.92px;font-size:8.6px;color:#222;font-weight:normal;transform:scaleX(0.8300);">GBPUSD,H1</div>
<div style="left:475.5px;top:85.3px;width:5.0px;height:1.2px;background:#222;"></div>
<div style="left:496.7px;top:80.3px;width:6.6px;height:6.6px;border:1.1px solid #222"></div>
<svg style="left:521px;top:80.2px" width="6.5" height="6.5" viewBox="0 0 6.5 6.5"><path d="M0.4 0.4L6.1 6.1M6.1 0.4L0.4 6.1" stroke="#222" stroke-width="1.3"/></svg>
<div style="left:185px;top:93px;width:349px;height:146px;background:#000000;"></div>
<svg style="left:185px;top:93px" width="349" height="146" viewBox="185 93 349 146"><line x1="188" y1="104.4" x2="503.5" y2="104.4" stroke="#8a8a8a" stroke-width="1" stroke-dasharray="2 2"/><line x1="188" y1="124.7" x2="503.5" y2="124.7" stroke="#8a8a8a" stroke-width="1" stroke-dasharray="2 2"/><line x1="188" y1="145" x2="503.5" y2="145" stroke="#8a8a8a" stroke-width="1" stroke-dasharray="2 2"/><line x1="188" y1="165.3" x2="503.5" y2="165.3" stroke="#8a8a8a" stroke-width="1" stroke-dasharray="2 2"/><line x1="188" y1="185.6" x2="503.5" y2="185.6" stroke="#8a8a8a" stroke-width="1" stroke-dasharray="2 2"/><line x1="188" y1="205.6" x2="503.5" y2="205.6" stroke="#8a8a8a" stroke-width="1" stroke-dasharray="2 2"/><line x1="207.5" y1="95.3" x2="207.5" y2="225.8" stroke="#8a8a8a" stroke-width="1" stroke-dasharray="2 2"/><line x1="228.3" y1="95.3" x2="228.3" y2="225.8" stroke="#8a8a8a" stroke-width="1" stroke-dasharray="2 2"/><line x1="249.1" y1="95.3" x2="249.1" y2="225.8" stroke="#8a8a8a" stroke-width="1" stroke-dasharray="2 2"/><line x1="269.9" y1="95.3" x2="269.9" y2="225.8" stroke="#8a8a8a" stroke-width="1" stroke-dasharray="2 2"/><line x1="290.7" y1="95.3" x2="290.7" y2="225.8" stroke="#8a8a8a" stroke-width="1" stroke-dasharray="2 2"/><line x1="311.5" y1="95.3" x2="311.5" y2="225.8" stroke="#8a8a8a" stroke-width="1" stroke-dasharray="2 2"/><line x1="332.3" y1="95.3" x2="332.3" y2="225.8" stroke="#8a8a8a" stroke-width="1" stroke-dasharray="2 2"/><line x1="353.1" y1="95.3" x2="353.1" y2="225.8" stroke="#8a8a8a" stroke-width="1" stroke-dasharray="2 2"/><line x1="373.9" y1="95.3" x2="373.9" y2="225.8" stroke="#8a8a8a" stroke-width="1" stroke-dasharray="2 2"/><line x1="394.70000000000005" y1="95.3" x2="394.70000000000005" y2="225.8" stroke="#8a8a8a" stroke-width="1" stroke-dasharray="2 2"/><line x1="415.5" y1="95.3" x2="415.5" y2="225.8" stroke="#8a8a8a" stroke-width="1" stroke-dasharray="2 2"/><line x1="436.3" y1="95.3" x2="436.3" y2="225.8" stroke="#8a8a8a" stroke-width="1" stroke-dasharray="2 2"/><line x1="457.1" y1="95.3" x2="457.1" y2="225.8" stroke="#8a8a8a" stroke-width="1" stroke-dasharray="2 2"/><line x1="477.90000000000003" y1="95.3" x2="477.90000000000003" y2="225.8" stroke="#8a8a8a" stroke-width="1" stroke-dasharray="2 2"/><line x1="498.7" y1="95.3" x2="498.7" y2="225.8" stroke="#8a8a8a" stroke-width="1" stroke-dasharray="2 2"/><line x1="188" y1="206.3" x2="503.5" y2="206.3" stroke="#5a6a7e" stroke-width="1.1"/><line x1="188" y1="190" x2="503.5" y2="190" stroke="#20e020" stroke-width="1.2" stroke-dasharray="7 3 2 3"/><path d="M188.0 141.9 L188.3 140.9 L188.7 143.5 L189.0 140.5 L189.4 145.1 L189.7 146.7 L190.0 141.7 L190.4 139.6 L190.7 141.4 L191.1 142.4 L191.4 143.4 L191.7 140.9 L192.1 142.9 L192.4 136.5 L192.8 142.1 L193.1 143.9 L193.4 143.4 L193.8 144.9 L194.1 142.8 L194.5 148.4 L194.8 145.2 L195.1 147.1 L195.5 144.5 L195.8 144.8 L196.2 148.7 L196.5 153.3 L196.8 151.8 L197.2 149.7 L197.5 153.7 L197.9 154.1 L198.2 151.0 L198.5 148.3 L198.9 149.8 L199.2 146.9 L199.6 147.7 L199.9 145.0 L200.2 140.8 L200.6 145.9 L200.9 150.5 L201.3 144.0 L201.6 143.5 L201.9 143.3 L202.3 140.7 L202.6 146.5 L203.0 142.3 L203.3 143.3 L203.6 142.2 L204.0 140.8 L204.3 141.7 L204.7 144.8 L205.0 134.3 L205.3 142.4 L205.7 146.6 L206.0 144.4 L206.4 142.3 L206.7 141.8 L207.0 147.0 L207.4 142.9 L207.7 142.2 L208.1 137.9 L208.4 142.5 L208.7 144.3 L209.1 145.6 L209.4 153.1 L209.8 146.4 L210.1 151.9 L210.4 154.5 L210.8 152.0 L211.1 156.5 L211.5 152.0 L211.8 147.6 L212.1 148.1 L212.5 142.2 L212.8 143.8 L213.2 143.2 L213.5 143.6 L213.8 145.7 L214.2 137.3 L214.5 144.5 L214.9 140.8 L215.2 146.6 L215.5 140.1 L215.9 145.3 L216.2 142.9 L216.6 149.3 L216.9 141.9 L217.2 146.8 L217.6 143.5 L217.9 145.8 L218.3 144.3 L218.6 145.1 L218.9 155.6 L219.3 145.2 L219.6 143.9 L220.0 151.5 L220.3 147.3 L220.6 150.9 L221.0 146.9 L221.3 143.5 L221.7 143.3 L222.0 148.5 L222.3 147.8 L222.7 143.3 L223.0 144.7 L223.4 157.9 L223.7 162.5 L224.0 174.4 L224.4 189.0 L224.7 192.8 L225.1 184.7 L225.4 181.3 L225.7 182.7 L226.1 180.3 L226.4 178.7 L226.8 172.4 L227.1 171.6 L227.4 167.5 L227.8 172.6 L228.1 170.8 L228.5 171.6 L228.8 168.9 L229.1 169.3 L229.5 172.1 L229.8 172.7 L230.2 170.9 L230.5 170.8 L230.8 166.9 L231.2 165.0 L231.5 164.0 L231.9 169.7 L232.2 176.5 L232.5 170.5 L232.9 170.4 L233.2 170.0 L233.6 164.7 L233.9 170.1 L234.2 164.1 L234.6 169.0 L234.9 169.1 L235.3 164.8 L235.6 169.4 L235.9 170.5 L236.3 166.6 L236.6 166.0 L237.0 163.9 L237.3 159.0 L237.6 158.3 L238.0 157.1 L238.3 158.1 L238.7 152.9 L239.0 157.8 L239.3 157.2 L239.7 156.7 L240.0 156.6 L240.4 156.8 L240.7 156.6 L241.0 159.9 L241.4 159.4 L241.7 157.2 L242.1 155.9 L242.4 155.2 L242.7 157.4 L243.1 146.5 L243.4 157.7 L243.8 163.7 L244.1 167.8 L244.4 166.0 L244.8 169.5 L245.1 164.8 L245.5 170.2 L245.8 170.0 L246.1 172.9 L246.5 172.9 L246.8 171.9 L247.2 163.8 L247.5 170.2 L247.8 173.9 L248.2 171.0 L248.5 172.1 L248.9 172.1 L249.2 172.5 L249.5 173.6 L249.9 175.0 L250.2 179.5 L250.6 179.5 L250.9 182.1 L251.2 177.7 L251.6 181.5 L251.9 187.6 L252.3 184.5 L252.6 185.4 L252.9 187.0 L253.3 198.6 L253.6 198.7 L254.0 198.3 L254.3 204.2 L254.6 204.9 L255.0 205.7 L255.3 207.8 L255.7 208.6 L256.0 211.1 L256.3 209.5 L256.7 213.4 L257.0 210.5 L257.4 207.7 L257.7 201.8 L258.0 199.3 L258.4 201.5 L258.7 196.4 L259.1 194.1 L259.4 199.9 L259.7 199.1 L260.1 194.9 L260.4 197.0 L260.8 200.2 L261.1 198.4 L261.4 201.5 L261.8 200.7 L262.1 196.8 L262.5 196.8 L262.8 195.1 L263.1 201.2 L263.5 196.7 L263.8 198.8 L264.2 199.1 L264.5 195.6 L264.8 199.5 L265.2 199.2 L265.5 198.4 L265.9 202.1 L266.2 198.7 L266.5 197.8 L266.9 202.7 L267.2 198.8 L267.6 200.4 L267.9 202.4 L268.2 205.2 L268.6 199.9 L268.9 210.8 L269.3 222.3 L269.6 215.1 L269.9 221.4 L270.3 217.4 L270.6 217.2 L271.0 212.7 L271.3 213.3 L271.6 212.7 L272.0 208.2 L272.3 206.3 L272.7 206.0 L273.0 208.5 L273.3 206.1 L273.7 208.8 L274.0 200.9 L274.4 200.7 L274.7 195.2 L275.0 195.8 L275.4 191.3 L275.7 193.0 L276.1 188.8 L276.4 185.0 L276.7 190.2 L277.1 185.1 L277.4 181.7 L277.8 182.7 L278.1 189.0 L278.4 185.5 L278.8 185.4 L279.1 189.0 L279.5 186.3 L279.8 190.7 L280.1 190.2 L280.5 192.0 L280.8 194.8 L281.2 193.2 L281.5 194.9 L281.8 192.2 L282.2 190.8 L282.5 189.7 L282.9 191.2 L283.2 183.9 L283.5 186.4 L283.9 181.4 L284.2 185.2 L284.6 183.7 L284.9 184.6 L285.2 185.0 L285.6 185.8 L285.9 193.1 L286.3 196.6 L286.6 200.9 L286.9 204.3 L287.3 205.8 L287.6 202.8 L288.0 197.4 L288.3 194.1 L288.6 198.9 L289.0 188.6 L289.3 189.2 L289.7 192.0 L290.0 192.9 L290.3 188.5 L290.7 190.2 L291.0 187.1 L291.4 184.1 L291.7 188.2 L292.0 179.9 L292.4 180.7 L292.7 184.5 L293.1 183.9 L293.4 181.4 L293.7 180.2 L294.1 176.6 L294.4 171.4 L294.8 178.7 L295.1 177.9 L295.4 176.5 L295.8 174.2 L296.1 177.9 L296.5 175.6 L296.8 180.7 L297.1 174.8 L297.5 177.1 L297.8 177.6 L298.2 177.2 L298.5 173.6 L298.8 177.4 L299.2 172.8 L299.5 177.9 L299.9 172.8 L300.2 170.2 L300.5 167.3 L300.9 171.5 L301.2 171.4 L301.6 171.6 L301.9 170.1 L302.2 168.0 L302.6 168.5 L302.9 168.9 L303.3 171.3 L303.6 170.5 L303.9 168.9 L304.3 163.5 L304.6 171.4 L305.0 169.6 L305.3 164.4 L305.6 167.4 L306.0 168.7 L306.3 171.4 L306.7 165.3 L307.0 165.8 L307.3 168.1 L307.7 167.1 L308.0 161.1 L308.4 159.2 L308.7 164.7 L309.0 160.7 L309.4 167.8 L309.7 167.6 L310.1 164.0 L310.4 163.4 L310.7 163.2 L311.1 168.7 L311.4 167.6 L311.8 168.5 L312.1 173.2 L312.4 164.2 L312.8 166.9 L313.1 170.0 L313.5 166.5 L313.8 163.0 L314.1 166.9 L314.5 165.0 L314.8 160.1 L315.2 161.9 L315.5 161.1 L315.8 158.9 L316.2 157.1 L316.5 158.9 L316.9 153.7 L317.2 147.0 L317.5 150.5 L317.9 156.4 L318.2 163.5 L318.6 164.6 L318.9 173.3 L319.2 175.9 L319.6 174.8 L319.9 176.0 L320.3 176.9 L320.6 174.3 L320.9 177.9 L321.3 179.3 L321.6 184.4 L322.0 183.6 L322.3 179.7 L322.6 181.7 L323.0 185.2 L323.3 187.2 L323.7 190.7 L324.0 187.8 L324.3 193.7 L324.7 192.8 L325.0 196.4 L325.4 195.2 L325.7 196.0 L326.0 195.1 L326.4 197.0 L326.7 201.6 L327.1 202.6 L327.4 209.3 L327.7 204.2 L328.1 208.0 L328.4 206.8 L328.8 207.5 L329.1 208.2 L329.4 203.9 L329.8 209.1 L330.1 206.0 L330.5 209.5 L330.8 210.5 L331.1 209.4 L331.5 213.5 L331.8 215.1 L332.2 214.6 L332.5 216.2 L332.8 211.8 L333.2 209.8 L333.5 206.6 L333.9 210.9 L334.2 203.2 L334.5 203.5 L334.9 208.3 L335.2 201.6 L335.6 201.2 L335.9 203.7 L336.2 195.0 L336.6 200.1 L336.9 202.5 L337.3 195.9 L337.6 197.0 L337.9 202.6 L338.3 197.1 L338.6 196.1 L339.0 191.4 L339.3 189.6 L339.6 194.7 L340.0 197.8 L340.3 193.6 L340.7 192.7 L341.0 190.2 L341.3 188.4 L341.7 197.1 L342.0 193.2 L342.4 191.6 L342.7 196.6 L343.0 189.1 L343.4 194.3 L343.7 200.0 L344.1 196.3 L344.4 194.2 L344.7 200.2 L345.1 199.6 L345.4 194.8 L345.8 194.4 L346.1 196.8 L346.4 196.6 L346.8 199.7 L347.1 198.4 L347.5 195.3 L347.8 184.0 L348.1 190.4 L348.5 182.6 L348.8 177.7 L349.2 179.9 L349.5 175.0 L349.8 174.3 L350.2 169.9 L350.5 168.0 L350.9 164.4 L351.2 164.3 L351.5 164.6 L351.9 160.6 L352.2 163.2 L352.6 163.0 L352.9 164.7 L353.2 170.9 L353.6 170.0 L353.9 169.7 L354.3 169.0 L354.6 175.5 L354.9 171.8 L355.3 177.5 L355.6 174.3 L356.0 179.8 L356.3 187.7 L356.6 173.7 L357.0 173.8 L357.3 177.9 L357.7 178.8 L358.0 176.8 L358.3 179.4 L358.7 173.2 L359.0 174.7 L359.4 176.1 L359.7 179.8 L360.0 174.2 L360.4 178.4 L360.7 175.0 L361.1 179.7 L361.4 182.4 L361.7 177.3 L362.1 179.2 L362.4 178.2 L362.8 180.0 L363.1 177.4 L363.4 173.6 L363.8 172.1 L364.1 162.1 L364.5 158.2 L364.8 159.4 L365.1 151.5 L365.5 146.4 L365.8 143.0 L366.2 133.0 L366.5 132.5 L366.8 128.2 L367.2 132.2 L367.5 140.1 L367.9 140.7 L368.2 137.4 L368.5 131.6 L368.9 142.5 L369.2 137.3 L369.6 142.7 L369.9 138.4 L370.2 143.4 L370.6 135.6 L370.9 136.0 L371.3 136.4 L371.6 132.6 L371.9 136.4 L372.3 128.3 L372.6 130.7 L373.0 130.3 L373.3 136.3 L373.6 130.9 L374.0 137.7 L374.3 143.5 L374.7 138.3 L375.0 147.6 L375.3 139.3 L375.7 142.3 L376.0 142.9 L376.4 140.6 L376.7 142.0 L377.0 137.8 L377.4 142.6 L377.7 138.6 L378.1 134.4 L378.4 139.3 L378.7 138.6 L379.1 133.4 L379.4 137.0 L379.8 139.0 L380.1 133.7 L380.4 136.9 L380.8 139.0 L381.1 135.0 L381.5 133.6 L381.8 143.7 L382.1 140.0 L382.5 145.5 L382.8 145.2 L383.2 149.3 L383.5 151.2 L383.8 151.0 L384.2 154.4 L384.5 154.8 L384.9 150.7 L385.2 149.4 L385.5 159.8 L385.9 151.0 L386.2 148.6 L386.6 146.6 L386.9 150.1 L387.2 149.2 L387.6 145.2 L387.9 146.7 L388.3 143.3 L388.6 147.4 L388.9 144.8 L389.3 140.7 L389.6 143.3 L390.0 140.2 L390.3 141.5 L390.6 142.7 L391.0 141.7 L391.3 146.3 L391.7 144.0 L392.0 142.4 L392.3 143.5 L392.7 141.8 L393.0 143.4 L393.4 139.7 L393.7 135.6 L394.0 132.7 L394.4 124.4 L394.7 124.6 L395.1 121.3 L395.4 133.7 L395.7 140.1 L396.1 151.0 L396.4 152.1 L396.8 148.6 L397.1 150.4 L397.4 151.6 L397.8 153.9 L398.1 152.0 L398.5 157.4 L398.8 155.8 L399.1 158.5 L399.5 161.1 L399.8 153.8 L400.2 163.5 L400.5 160.3 L400.8 163.2 L401.2 162.6 L401.5 162.0 L401.9 166.4 L402.2 166.5 L402.5 170.1 L402.9 167.6 L403.2 168.6 L403.6 170.0 L403.9 166.8 L404.2 166.1 L404.6 170.5 L404.9 169.0 L405.3 166.0 L405.6 164.5 L405.9 164.9 L406.3 169.2 L406.6 170.3 L407.0 168.1 L407.3 169.4 L407.6 165.1 L408.0 164.8 L408.3 167.7 L408.7 169.9 L409.0 157.6 L409.3 156.2 L409.7 158.3 L410.0 156.6 L410.4 160.1 L410.7 158.3 L411.0 166.2 L411.4 168.3 L411.7 173.2 L412.1 171.6 L412.4 171.8 L412.7 172.4 L413.1 170.9 L413.4 176.8 L413.8 171.1 L414.1 172.6 L414.4 171.2 L414.8 173.5 L415.1 176.7 L415.5 169.1 L415.8 172.0 L416.1 167.7 L416.5 174.6 L416.8 173.6 L417.2 175.1 L417.5 175.8 L417.8 174.8 L418.2 177.9 L418.5 175.1 L418.9 177.9 L419.2 177.8 L419.5 179.1 L419.9 177.8 L420.2 172.7 L420.6 174.0 L420.9 165.8 L421.2 172.1 L421.6 171.7 L421.9 174.3 L422.3 174.7 L422.6 179.2 L422.9 174.5 L423.3 181.5 L423.6 179.5 L424.0 182.3 L424.3 182.3 L424.6 180.3 L425.0 179.2 L425.3 186.6 L425.7 191.9 L426.0 185.4 L426.3 191.6 L426.7 193.0 L427.0 189.2 L427.4 197.9 L427.7 200.5 L428.0 201.2 L428.4 202.4 L428.7 201.0 L429.1 204.7 L429.4 205.5 L429.7 206.8 L430.1 205.9 L430.4 205.3 L430.8 203.0 L431.1 202.3 L431.4 200.9 L431.8 194.6 L432.1 197.0 L432.5 197.5 L432.8 195.5 L433.1 194.1 L433.5 194.1 L433.8 187.4 L434.2 188.1 L434.5 190.0 L434.8 188.9 L435.2 192.0 L435.5 184.5 L435.9 186.5 L436.2 194.9 L436.5 192.1 L436.9 192.4 L437.2 186.1 L437.6 188.7 L437.9 199.3 L438.2 191.1 L438.6 191.1 L438.9 190.2 L439.3 190.8 L439.6 191.4 L439.9 191.0 L440.3 190.2 L440.6 192.9 L441.0 195.5 L441.3 196.0 L441.6 193.9 L442.0 195.0 L442.3 198.7 L442.7 196.7 L443.0 196.8 L443.3 199.7 L443.7 197.1 L444.0 198.1 L444.4 198.2 L444.7 197.8 L445.0 201.6 L445.4 197.8 L445.7 193.2 L446.1 195.2 L446.4 191.7 L446.7 199.0 L447.1 203.8 L447.4 190.1 L447.8 191.7 L448.1 194.1 L448.4 192.1 L448.8 188.5 L449.1 186.4 L449.5 189.6 L449.8 188.8 L450.1 187.6 L450.5 187.2 L450.8 187.1 L451.2 186.6 L451.5 188.4 L451.8 188.8 L452.2 186.9 L452.5 190.0 L452.9 189.2 L453.2 185.5 L453.5 188.8 L453.9 189.4 L454.2 191.0 L454.6 188.1 L454.9 190.0 L455.2 192.0 L455.6 195.8 L455.9 196.7 L456.3 201.1 L456.6 206.7 L456.9 200.2 L457.3 193.9 L457.6 186.6 L458.0 179.2 L458.3 176.3 L458.6 167.5 L459.0 165.3 L459.3 159.7 L459.7 157.9 L460.0 152.4 L460.3 153.2 L460.7 155.0 L461.0 151.1 L461.4 158.4 L461.7 153.0 L462.0 157.3 L462.4 154.2 L462.7 151.7 L463.1 158.2 L463.4 157.6 L463.7 157.3 L464.1 155.9 L464.4 155.1 L464.8 155.3 L465.1 151.8 L465.4 149.2 L465.8 151.9 L466.1 157.8 L466.5 154.3 L466.8 155.3 L467.1 157.6 L467.5 156.3 L467.8 151.9 L468.2 149.0 L468.5 149.5 L468.8 148.3 L469.2 148.1 L469.5 151.0 L469.9 153.4 L470.2 152.7 L470.5 149.3 L470.9 146.9 L471.2 145.4 L471.6 143.6 L471.9 144.4 L472.2 144.9 L472.6 143.1 L472.9 136.8 L473.3 141.4 L473.6 132.8 L473.9 125.4 L474.3 127.2 L474.6 118.6 L475.0 122.0 L475.3 121.1 L475.6 118.9 L476.0 113.7 L476.3 110.4 L476.7 112.7 L477.0 110.8 L477.3 112.3 L477.7 106.1 L478.0 111.8 L478.4 113.9 L478.7 110.7 L479.0 107.0 L479.4 109.9 L479.7 111.7 L480.1 118.1 L480.4 116.3 L480.7 111.2 L481.1 120.4 L481.4 117.3 L481.8 120.5 L482.1 120.2 L482.4 121.5 L482.8 120.5 L483.1 119.2 L483.5 118.5 L483.8 122.4 L484.1 121.4 L484.5 117.5 L484.8 118.7 L485.2 126.1 L485.5 125.2 L485.8 128.1 L486.2 130.1 L486.5 133.6 L486.9 144.1 L487.2 140.0 L487.5 139.8 L487.9 144.7 L488.2 149.9 L488.6 149.5 L488.9 152.7 L489.2 162.3 L489.6 162.4 L489.9 166.5 L490.3 170.7 L490.6 173.4 L490.9 176.8 L491.3 182.1 L491.6 190.4 L492.0 184.3 L492.3 190.8 L492.6 189.1 L493.0 194.2 L493.3 197.4 L493.7 197.2 L494.0 197.1 L494.3 204.1 L494.7 200.6 L495.0 198.2 L495.4 199.7 L495.7 197.9 L496.0 201.5 L496.4 201.0 L496.7 204.3 L497.1 202.0 L497.4 200.4 L497.7 204.9 L498.1 202.8 L498.4 206.7 L498.8 205.7 L499.1 201.8 L499.4 200.9 L499.8 196.6 L500.1 193.1 L500.5 195.2 L500.8 194.2 L501.1 191.5 L501.5 196.6 L501.8 199.8" stroke="#33e633" stroke-width="1.4" fill="none" stroke-linejoin="round"/><rect x="188" y="95.3" width="315.5" height="130.5" fill="none" stroke="#c4c4c4" stroke-width="1"/><line x1="503.5" y1="104.4" x2="506.5" y2="104.4" stroke="#c4c4c4" stroke-width="1"/><line x1="503.5" y1="124.7" x2="506.5" y2="124.7" stroke="#c4c4c4" stroke-width="1"/><line x1="503.5" y1="145" x2="506.5" y2="145" stroke="#c4c4c4" stroke-width="1"/><line x1="503.5" y1="165.3" x2="506.5" y2="165.3" stroke="#c4c4c4" stroke-width="1"/><line x1="503.5" y1="185.6" x2="506.5" y2="185.6" stroke="#c4c4c4" stroke-width="1"/><line x1="188" y1="225.8" x2="188" y2="228.8" stroke="#c4c4c4" stroke-width="1"/><line x1="228.3" y1="225.8" x2="228.3" y2="228.8" stroke="#c4c4c4" stroke-width="1"/><line x1="269.9" y1="225.8" x2="269.9" y2="228.8" stroke="#c4c4c4" stroke-width="1"/><line x1="311.5" y1="225.8" x2="311.5" y2="228.8" stroke="#c4c4c4" stroke-width="1"/><line x1="353.1" y1="225.8" x2="353.1" y2="228.8" stroke="#c4c4c4" stroke-width="1"/><line x1="394.7" y1="225.8" x2="394.7" y2="228.8" stroke="#c4c4c4" stroke-width="1"/><line x1="436.3" y1="225.8" x2="436.3" y2="228.8" stroke="#c4c4c4" stroke-width="1"/><line x1="477.9" y1="225.8" x2="477.9" y2="228.8" stroke="#c4c4c4" stroke-width="1"/></svg>
<div class="t" style="left:507.20px;top:101.07px;font-size:7.0px;color:#e0e0e0;font-weight:normal;transform:scaleX(0.8408);-webkit-text-stroke:0.05px currentColor">1.3210</div>
<div class="t" style="left:507.20px;top:121.37px;font-size:7.0px;color:#e0e0e0;font-weight:normal;transform:scaleX(0.8408);-webkit-text-stroke:0.05px currentColor">1.3165</div>
<div class="t" style="left:507.20px;top:141.67px;font-size:7.0px;color:#e0e0e0;font-weight:normal;transform:scaleX(0.8408);-webkit-text-stroke:0.05px currentColor">1.3120</div>
<div class="t" style="left:507.20px;top:161.97px;font-size:7.0px;color:#e0e0e0;font-weight:normal;transform:scaleX(0.8408);-webkit-text-stroke:0.05px currentColor">1.3075</div>
<div class="t" style="left:507.20px;top:182.27px;font-size:7.0px;color:#e0e0e0;font-weight:normal;transform:scaleX(0.8408);-webkit-text-stroke:0.05px currentColor">1.3030</div>
<div class="t" style="left:187.00px;top:229.27px;font-size:7.0px;color:#e8e8e8;font-weight:normal;transform:scaleX(0.8257);-webkit-text-stroke:0.05px currentColor">7 Jan 2020</div>
<div class="t" style="left:227.30px;top:229.27px;font-size:7.0px;color:#e8e8e8;font-weight:normal;transform:scaleX(0.8600);-webkit-text-stroke:0.05px currentColor">9 Jan 17:00</div>
<div class="t" style="left:268.90px;top:229.27px;font-size:7.0px;color:#e8e8e8;font-weight:normal;transform:scaleX(0.8479);-webkit-text-stroke:0.05px currentColor">14 Jan 09:00</div>
<div class="t" style="left:310.50px;top:229.27px;font-size:7.0px;color:#e8e8e8;font-weight:normal;transform:scaleX(0.8479);-webkit-text-stroke:0.05px currentColor">17 Jan 01:00</div>
<div class="t" style="left:352.10px;top:229.27px;font-size:7.0px;color:#e8e8e8;font-weight:normal;transform:scaleX(0.8479);-webkit-text-stroke:0.05px currentColor">21 Jan 17:00</div>
<div class="t" style="left:393.70px;top:229.27px;font-size:7.0px;color:#e8e8e8;font-weight:normal;transform:scaleX(0.8479);-webkit-text-stroke:0.05px currentColor">24 Jan 09:00</div>
<div class="t" style="left:435.30px;top:229.27px;font-size:7.0px;color:#e8e8e8;font-weight:normal;transform:scaleX(0.8479);-webkit-text-stroke:0.05px currentColor">29 Jan 01:00</div>
<div class="t" style="left:476.90px;top:229.27px;font-size:7.0px;color:#e8e8e8;font-weight:normal;transform:scaleX(0.8479);-webkit-text-stroke:0.05px currentColor">31 Jan 17:00</div>
<div style="left:505.0px;top:202.70000000000002px;width:22.5px;height:7px;background:#a9b9c9;"></div>
<div class="t" style="left:507.20px;top:202.97px;font-size:7.0px;color:#1a2a3a;font-weight:normal;transform:scaleX(0.8408);">1.2984</div>
<div class="t" style="left:191.00px;top:184.24px;font-size:6.8px;color:#e0e0e0;font-weight:normal;transform:scaleX(0.9365);text-shadow:0 0 1px #000;-webkit-text-stroke:0">#11392303 buy 3.00</div>
<svg style="left:190px;top:98.3px" width="21" height="8" viewBox="0 0 21 8"><rect x="0" y="0" width="9.3" height="7.5" fill="#f4f4ff"/><rect x="0" y="0" width="9.3" height="1.6" fill="#b8b8f0"/><rect x="1" y="2.2" width="3.4" height="4.6" fill="#f0a0a0"/><rect x="5" y="2.2" width="3.4" height="4.6" fill="#a8a8f0"/><rect x="10.7" y="0.5" width="5" height="7" fill="#3434d8"/><rect x="15.2" y="0.5" width="5" height="7" fill="#e03434"/><circle cx="15.3" cy="1.8" r="1.3" fill="#c8c8c8"/></svg>
<div class="t" style="left:213.90px;top:99.02px;font-size:7.3px;color:#e8e8e8;font-weight:normal;transform:scaleX(0.8213);">GBPUSD,H1</div>
<div style="left:190px;top:108.9px;width:28px;height:13.5px;background:linear-gradient(#de3030,#de3030);"></div>
<div style="left:281px;top:108.9px;width:28.2px;height:13.5px;background:linear-gradient(#de3030,#de3030);"></div>
<div class="t" style="left:195.65px;top:112.17px;font-size:8.3px;color:#f8e0e0;font-weight:normal;transform:scaleX(0.7634);">SELL</div>
<div class="t" style="left:289.00px;top:112.17px;font-size:8.3px;color:#f8e0e0;font-weight:normal;transform:scaleX(0.7617);">BUY</div>
<div style="left:190px;top:122.4px;width:59.5px;height:22.5px;background:linear-gradient(#de3030,#ad0808);"></div>
<div style="left:251.2px;top:122.4px;width:58px;height:22.5px;background:linear-gradient(#de3030,#ad0808);"></div>
<div style="left:192px;top:122.7px;width:24px;height:1px;background:rgba(255,255,255,0.3);"></div>
<div style="left:283px;top:122.7px;width:24px;height:1px;background:rgba(255,255,255,0.3);"></div>
<div style="left:218px;top:108.10000000000001px;width:63.6px;height:14.3px;background:#ffffff;border:1px solid #111;border-bottom-width:1.8px;border-left-width:1.5px;border-right-width:1.5px"></div>
<div style="left:219.5px;top:109.2px;width:11.3px;height:11.5px;background:#ebebeb;"></div>
<div style="left:269px;top:109.2px;width:11.3px;height:11.5px;background:#ebebeb;"></div>
<svg style="left:223px;top:114.10000000000001px" width="4" height="2.5" viewBox="0 0 4 2.5"><path d="M0 0H4L2 2.5Z" fill="#222"/></svg>
<svg style="left:272.7px;top:113.7px" width="4" height="2.5" viewBox="0 0 4 2.5"><path d="M0 2.5H4L2 0Z" fill="#222"/></svg>
<div class="t" style="left:251.00px;top:111.99px;font-size:8.4px;color:#333;font-weight:normal;transform:scaleX(0.8258);">3.00</div>
<div class="t" style="left:202.30px;top:134.61px;font-size:9.2px;color:#ffffff;font-weight:bold;transform:scaleX(0.8490);">1.29</div>
<div class="t" style="left:220.40px;top:124.20px;font-size:21.5px;color:#ffffff;font-weight:normal;transform:scaleX(0.8448);-webkit-text-stroke:0">84</div>
<div class="t" style="left:263.00px;top:134.61px;font-size:9.2px;color:#ffffff;font-weight:bold;transform:scaleX(0.8490);">1.29</div>
<div class="t" style="left:281.00px;top:124.20px;font-size:21.5px;color:#ffffff;font-weight:normal;transform:scaleX(0.8448);-webkit-text-stroke:0">87</div>
<div style="left:539px;top:73px;width:359px;height:172px;background:#ffffff;border:1.2px solid #6e6e6e"></div>
<div style="left:542.0px;top:75px;width:352.5px;height:18px;background:#f2f2f2;"></div>
<svg style="left:543.5px;top:78px" width="12" height="11" viewBox="0 0 12 11"><rect x="0.5" y="0.5" width="9" height="7" fill="#fff" stroke="#3b8fe0"/><rect x="0.5" y="0.5" width="9" height="1.8" fill="#3b8fe0"/><rect x="2.5" y="3" width="9" height="7.5" fill="#fff" stroke="#3b8fe0"/><rect x="2.5" y="3" width="9" height="1.8" fill="#3b8fe0"/><path d="M4 9L6 7L7.6 8L10 5.8" stroke="#e05030" stroke-width="1" fill="none"/></svg>
<div class="t" style="left:557.50px;top:79.92px;font-size:8.6px;color:#6e6e6e;font-weight:normal;transform:scaleX(0.8300);">USDCHF,H1</div>
<div style="left:833.5px;top:85.3px;width:5.0px;height:1.2px;background:#8a8a8a;"></div>
<div style="left:854.7px;top:80.3px;width:6.6px;height:6.6px;border:1.1px solid #8a8a8a"></div>
<svg style="left:879px;top:80.2px" width="6.5" height="6.5" viewBox="0 0 6.5 6.5"><path d="M0.4 0.4L6.1 6.1M6.1 0.4L0.4 6.1" stroke="#8a8a8a" stroke-width="1.3"/></svg>
<div style="left:543.5px;top:93px;width:349.5px;height:146px;background:#000000;"></div>
<svg style="left:543.5px;top:93px" width="349.5" height="146" viewBox="543.5 93 349.5 146"><line x1="546" y1="103.3" x2="862.5" y2="103.3" stroke="#8a8a8a" stroke-width="1" stroke-dasharray="2 2"/><line x1="546" y1="123.5" x2="862.5" y2="123.5" stroke="#8a8a8a" stroke-width="1" stroke-dasharray="2 2"/><line x1="546" y1="144.2" x2="862.5" y2="144.2" stroke="#8a8a8a" stroke-width="1" stroke-dasharray="2 2"/><line x1="546" y1="164.5" x2="862.5" y2="164.5" stroke="#8a8a8a" stroke-width="1" stroke-dasharray="2 2"/><line x1="546" y1="185.3" x2="862.5" y2="185.3" stroke="#8a8a8a" stroke-width="1" stroke-dasharray="2 2"/><line x1="546" y1="205.3" x2="862.5" y2="205.3" stroke="#8a8a8a" stroke-width="1" stroke-dasharray="2 2"/><line x1="566.3" y1="95.3" x2="566.3" y2="225.8" stroke="#8a8a8a" stroke-width="1" stroke-dasharray="2 2"/><line x1="587.05" y1="95.3" x2="587.05" y2="225.8" stroke="#8a8a8a" stroke-width="1" stroke-dasharray="2 2"/><line x1="607.8" y1="95.3" x2="607.8" y2="225.8" stroke="#8a8a8a" stroke-width="1" stroke-dasharray="2 2"/><line x1="628.55" y1="95.3" x2="628.55" y2="225.8" stroke="#8a8a8a" stroke-width="1" stroke-dasharray="2 2"/><line x1="649.3" y1="95.3" x2="649.3" y2="225.8" stroke="#8a8a8a" stroke-width="1" stroke-dasharray="2 2"/><line x1="670.05" y1="95.3" x2="670.05" y2="225.8" stroke="#8a8a8a" stroke-width="1" stroke-dasharray="2 2"/><line x1="690.8" y1="95.3" x2="690.8" y2="225.8" stroke="#8a8a8a" stroke-width="1" stroke-dasharray="2 2"/><line x1="711.55" y1="95.3" x2="711.55" y2="225.8" stroke="#8a8a8a" stroke-width="1" stroke-dasharray="2 2"/><line x1="732.3" y1="95.3" x2="732.3" y2="225.8" stroke="#8a8a8a" stroke-width="1" stroke-dasharray="2 2"/><line x1="753.05" y1="95.3" x2="753.05" y2="225.8" stroke="#8a8a8a" stroke-width="1" stroke-dasharray="2 2"/><line x1="773.8" y1="95.3" x2="773.8" y2="225.8" stroke="#8a8a8a" stroke-width="1" stroke-dasharray="2 2"/><line x1="794.55" y1="95.3" x2="794.55" y2="225.8" stroke="#8a8a8a" stroke-width="1" stroke-dasharray="2 2"/><line x1="815.3" y1="95.3" x2="815.3" y2="225.8" stroke="#8a8a8a" stroke-width="1" stroke-dasharray="2 2"/><line x1="836.05" y1="95.3" x2="836.05" y2="225.8" stroke="#8a8a8a" stroke-width="1" stroke-dasharray="2 2"/><line x1="856.8" y1="95.3" x2="856.8" y2="225.8" stroke="#8a8a8a" stroke-width="1" stroke-dasharray="2 2"/><line x1="546" y1="177.5" x2="862.5" y2="177.5" stroke="#5a6a7e" stroke-width="1.1"/><line x1="546" y1="183" x2="862.5" y2="183" stroke="#22aa22" stroke-width="1.2" stroke-dasharray="5 3"/><line x1="546" y1="186.5" x2="862.5" y2="186.5" stroke="#22aa22" stroke-width="1.2" stroke-dasharray="5 3"/><line x1="546" y1="190.4" x2="862.5" y2="190.4" stroke="#d01818" stroke-width="1.2" stroke-dasharray="5 3"/><path d="M546.0 179.7 L546.3 179.0 L546.7 175.7 L547.0 178.4 L547.4 169.9 L547.7 177.0 L548.0 176.2 L548.4 170.1 L548.7 172.7 L549.1 171.4 L549.4 175.2 L549.7 170.1 L550.1 165.1 L550.4 172.1 L550.8 171.6 L551.1 172.6 L551.4 168.9 L551.8 171.4 L552.1 175.2 L552.5 175.0 L552.8 176.2 L553.1 181.8 L553.5 178.3 L553.8 175.6 L554.2 181.3 L554.5 179.7 L554.8 181.1 L555.2 179.9 L555.5 181.2 L555.9 181.5 L556.2 186.4 L556.5 187.8 L556.9 183.5 L557.2 189.3 L557.6 188.4 L557.9 192.5 L558.2 192.0 L558.6 186.6 L558.9 184.8 L559.3 182.6 L559.6 178.0 L559.9 176.9 L560.3 172.2 L560.6 173.4 L561.0 172.4 L561.3 174.1 L561.6 178.8 L562.0 169.6 L562.3 169.0 L562.7 171.4 L563.0 174.3 L563.3 174.8 L563.7 171.2 L564.0 170.4 L564.4 173.1 L564.7 170.5 L565.0 171.8 L565.4 170.3 L565.7 171.3 L566.1 170.2 L566.4 167.4 L566.7 173.7 L567.1 171.0 L567.4 170.9 L567.8 170.6 L568.1 168.6 L568.4 169.5 L568.8 172.8 L569.1 172.8 L569.5 169.0 L569.8 169.6 L570.1 170.1 L570.5 167.1 L570.8 171.5 L571.2 165.5 L571.5 168.2 L571.8 170.0 L572.2 169.4 L572.5 168.2 L572.9 165.8 L573.2 167.3 L573.5 165.4 L573.9 164.4 L574.2 163.5 L574.6 162.4 L574.9 162.4 L575.2 161.5 L575.6 158.8 L575.9 157.9 L576.3 160.6 L576.6 157.0 L576.9 155.8 L577.3 159.4 L577.6 159.2 L578.0 155.8 L578.3 155.9 L578.6 155.7 L579.0 151.2 L579.3 148.7 L579.7 150.3 L580.0 148.2 L580.3 149.8 L580.7 144.6 L581.0 148.0 L581.4 143.6 L581.7 145.7 L582.0 149.5 L582.4 142.8 L582.7 146.6 L583.1 147.7 L583.4 144.3 L583.7 145.8 L584.1 144.6 L584.4 147.5 L584.8 146.9 L585.1 150.9 L585.4 145.7 L585.8 146.6 L586.1 145.0 L586.5 151.7 L586.8 152.0 L587.1 157.8 L587.5 156.8 L587.8 159.5 L588.2 159.8 L588.5 159.7 L588.8 164.1 L589.2 158.1 L589.5 155.7 L589.9 157.2 L590.2 156.7 L590.5 160.0 L590.9 160.2 L591.2 161.8 L591.6 159.1 L591.9 159.4 L592.2 164.0 L592.6 161.3 L592.9 164.9 L593.3 166.5 L593.6 165.9 L593.9 166.3 L594.3 169.9 L594.6 172.0 L595.0 171.9 L595.3 170.2 L595.6 172.5 L596.0 171.5 L596.3 170.7 L596.7 172.4 L597.0 174.7 L597.3 173.7 L597.7 176.7 L598.0 176.6 L598.4 174.7 L598.7 173.2 L599.0 173.9 L599.4 177.6 L599.7 178.2 L600.1 169.6 L600.4 174.2 L600.7 177.4 L601.1 177.7 L601.4 174.1 L601.8 176.3 L602.1 170.7 L602.4 171.6 L602.8 173.3 L603.1 174.1 L603.5 177.7 L603.8 174.0 L604.1 170.1 L604.5 176.9 L604.8 176.6 L605.2 174.1 L605.5 172.4 L605.8 171.5 L606.2 170.6 L606.5 175.4 L606.9 176.3 L607.2 174.7 L607.5 167.7 L607.9 172.4 L608.2 172.8 L608.6 170.6 L608.9 175.5 L609.2 166.8 L609.6 173.8 L609.9 169.0 L610.3 171.2 L610.6 167.0 L610.9 171.3 L611.3 170.4 L611.6 170.9 L612.0 162.4 L612.3 167.9 L612.6 163.2 L613.0 164.9 L613.3 160.8 L613.7 162.2 L614.0 170.5 L614.3 165.7 L614.7 163.8 L615.0 165.8 L615.4 169.7 L615.7 170.5 L616.0 168.3 L616.4 171.3 L616.7 168.0 L617.1 166.4 L617.4 169.1 L617.7 172.7 L618.1 176.1 L618.4 176.1 L618.8 179.7 L619.1 180.6 L619.4 177.6 L619.8 180.2 L620.1 185.3 L620.5 182.9 L620.8 184.0 L621.1 179.4 L621.5 174.9 L621.8 175.3 L622.2 165.8 L622.5 166.4 L622.8 161.4 L623.2 157.0 L623.5 162.5 L623.9 160.0 L624.2 159.5 L624.5 159.7 L624.9 159.2 L625.2 162.7 L625.6 160.0 L625.9 158.6 L626.2 163.5 L626.6 161.9 L626.9 168.4 L627.3 164.1 L627.6 164.3 L627.9 160.3 L628.3 164.9 L628.6 166.8 L629.0 162.4 L629.3 160.2 L629.6 161.2 L630.0 165.1 L630.3 165.0 L630.7 165.1 L631.0 162.1 L631.3 164.2 L631.7 162.8 L632.0 162.2 L632.4 166.7 L632.7 167.1 L633.0 169.3 L633.4 164.1 L633.7 167.0 L634.1 165.6 L634.4 161.1 L634.7 162.6 L635.1 159.8 L635.4 163.5 L635.8 166.3 L636.1 162.6 L636.4 161.0 L636.8 157.9 L637.1 161.5 L637.5 155.9 L637.8 160.3 L638.1 158.5 L638.5 166.4 L638.8 156.1 L639.2 157.0 L639.5 162.7 L639.8 162.5 L640.2 157.3 L640.5 157.3 L640.9 160.6 L641.2 158.0 L641.5 160.8 L641.9 157.0 L642.2 156.2 L642.6 154.6 L642.9 155.9 L643.2 155.9 L643.6 156.8 L643.9 156.4 L644.3 156.6 L644.6 154.2 L644.9 152.7 L645.3 156.4 L645.6 153.2 L646.0 157.2 L646.3 150.7 L646.6 153.1 L647.0 148.7 L647.3 147.3 L647.7 152.1 L648.0 148.9 L648.3 141.8 L648.7 149.8 L649.0 144.7 L649.4 146.6 L649.7 144.5 L650.0 150.8 L650.4 145.6 L650.7 150.6 L651.1 151.7 L651.4 146.0 L651.7 149.6 L652.1 145.0 L652.4 150.6 L652.8 149.9 L653.1 153.6 L653.4 154.0 L653.8 158.0 L654.1 155.3 L654.5 154.7 L654.8 155.9 L655.1 159.8 L655.5 160.9 L655.8 159.7 L656.2 160.3 L656.5 163.5 L656.8 164.1 L657.2 164.8 L657.5 162.6 L657.9 159.8 L658.2 158.0 L658.5 161.7 L658.9 161.0 L659.2 155.9 L659.6 159.8 L659.9 156.7 L660.2 154.4 L660.6 151.1 L660.9 153.7 L661.3 155.6 L661.6 151.2 L661.9 151.9 L662.3 154.4 L662.6 151.3 L663.0 148.0 L663.3 145.1 L663.6 148.9 L664.0 148.6 L664.3 151.2 L664.7 155.3 L665.0 153.0 L665.3 151.1 L665.7 152.1 L666.0 149.7 L666.4 153.2 L666.7 151.5 L667.0 151.0 L667.4 157.4 L667.7 154.6 L668.1 150.6 L668.4 151.4 L668.7 152.0 L669.1 150.8 L669.4 150.6 L669.8 151.0 L670.1 150.3 L670.4 151.8 L670.8 152.4 L671.1 150.3 L671.5 147.3 L671.8 149.9 L672.1 146.8 L672.5 152.0 L672.8 148.5 L673.2 150.9 L673.5 147.9 L673.8 148.4 L674.2 151.1 L674.5 148.2 L674.9 143.8 L675.2 148.5 L675.5 146.1 L675.9 146.0 L676.2 153.4 L676.6 147.6 L676.9 147.9 L677.2 156.7 L677.6 157.2 L677.9 159.8 L678.3 160.8 L678.6 163.0 L678.9 167.4 L679.3 165.8 L679.6 167.4 L680.0 165.8 L680.3 166.4 L680.6 165.9 L681.0 165.6 L681.3 166.7 L681.7 164.4 L682.0 163.2 L682.3 164.8 L682.7 162.1 L683.0 163.3 L683.4 163.9 L683.7 165.0 L684.0 163.3 L684.4 162.0 L684.7 164.2 L685.1 166.9 L685.4 163.2 L685.7 161.8 L686.1 162.3 L686.4 162.0 L686.8 159.4 L687.1 157.2 L687.4 158.8 L687.8 157.6 L688.1 156.3 L688.5 159.4 L688.8 157.8 L689.1 160.3 L689.5 159.0 L689.8 157.0 L690.2 155.4 L690.5 154.8 L690.8 161.7 L691.2 160.3 L691.5 159.6 L691.9 156.0 L692.2 161.2 L692.5 155.6 L692.9 153.4 L693.2 160.1 L693.6 156.6 L693.9 160.3 L694.2 157.5 L694.6 157.8 L694.9 156.6 L695.3 157.5 L695.6 155.4 L695.9 155.9 L696.3 156.7 L696.6 159.4 L697.0 159.7 L697.3 157.0 L697.6 162.5 L698.0 160.3 L698.3 159.5 L698.7 158.9 L699.0 160.0 L699.3 160.2 L699.7 156.4 L700.0 157.2 L700.4 156.2 L700.7 157.2 L701.0 155.1 L701.4 156.9 L701.7 152.3 L702.1 153.9 L702.4 154.7 L702.7 153.8 L703.1 148.9 L703.4 153.8 L703.8 150.8 L704.1 151.4 L704.4 153.1 L704.8 157.7 L705.1 162.7 L705.5 164.3 L705.8 164.0 L706.1 162.4 L706.5 165.2 L706.8 167.7 L707.2 171.7 L707.5 174.1 L707.8 177.0 L708.2 176.3 L708.5 173.5 L708.9 167.0 L709.2 168.6 L709.5 161.1 L709.9 165.1 L710.2 162.2 L710.6 160.8 L710.9 151.4 L711.2 150.7 L711.6 150.7 L711.9 147.2 L712.3 148.4 L712.6 145.9 L712.9 144.4 L713.3 146.3 L713.6 136.7 L714.0 141.3 L714.3 136.8 L714.6 141.5 L715.0 137.3 L715.3 131.9 L715.7 129.2 L716.0 122.4 L716.3 126.5 L716.7 129.3 L717.0 127.9 L717.4 126.1 L717.7 127.9 L718.0 129.7 L718.4 123.0 L718.7 123.3 L719.1 130.4 L719.4 130.3 L719.7 134.1 L720.1 135.1 L720.4 138.4 L720.8 134.1 L721.1 138.5 L721.4 132.2 L721.8 133.8 L722.1 136.7 L722.5 136.9 L722.8 135.9 L723.1 139.0 L723.5 133.5 L723.8 134.3 L724.2 131.0 L724.5 133.5 L724.8 130.3 L725.2 133.2 L725.5 132.3 L725.9 132.2 L726.2 134.0 L726.5 132.8 L726.9 130.3 L727.2 130.2 L727.6 136.8 L727.9 133.5 L728.2 133.5 L728.6 134.1 L728.9 136.2 L729.3 131.1 L729.6 130.5 L729.9 127.4 L730.3 124.6 L730.6 122.9 L731.0 123.7 L731.3 126.4 L731.6 125.0 L732.0 122.6 L732.3 127.4 L732.7 126.5 L733.0 126.5 L733.3 125.9 L733.7 121.9 L734.0 135.0 L734.4 129.6 L734.7 127.6 L735.0 128.9 L735.4 128.1 L735.7 130.9 L736.1 130.0 L736.4 126.1 L736.7 122.8 L737.1 126.8 L737.4 129.2 L737.8 125.3 L738.1 121.2 L738.4 123.7 L738.8 122.3 L739.1 125.9 L739.5 121.3 L739.8 118.8 L740.1 115.1 L740.5 117.3 L740.8 118.8 L741.2 117.8 L741.5 111.8 L741.8 111.3 L742.2 112.8 L742.5 107.6 L742.9 109.7 L743.2 107.5 L743.5 107.1 L743.9 107.7 L744.2 107.1 L744.6 111.1 L744.9 109.1 L745.2 106.4 L745.6 113.0 L745.9 112.1 L746.3 117.1 L746.6 121.0 L746.9 118.1 L747.3 123.4 L747.6 120.2 L748.0 123.3 L748.3 121.6 L748.6 121.7 L749.0 118.8 L749.3 120.9 L749.7 120.4 L750.0 122.8 L750.3 118.6 L750.7 119.5 L751.0 120.9 L751.4 119.9 L751.7 123.2 L752.0 124.2 L752.4 127.1 L752.7 125.9 L753.1 128.0 L753.4 130.5 L753.7 126.8 L754.1 129.7 L754.4 128.4 L754.8 132.6 L755.1 130.7 L755.4 133.3 L755.8 132.4 L756.1 130.7 L756.5 132.2 L756.8 132.2 L757.1 134.8 L757.5 133.5 L757.8 136.1 L758.2 135.7 L758.5 135.7 L758.8 133.4 L759.2 139.0 L759.5 136.6 L759.9 134.8 L760.2 126.3 L760.5 140.0 L760.9 140.6 L761.2 141.0 L761.6 142.8 L761.9 141.6 L762.2 140.5 L762.6 142.3 L762.9 141.9 L763.3 140.5 L763.6 147.5 L763.9 142.0 L764.3 148.1 L764.6 146.6 L765.0 141.5 L765.3 146.0 L765.6 143.7 L766.0 148.1 L766.3 144.8 L766.7 143.8 L767.0 142.8 L767.3 147.6 L767.7 146.8 L768.0 152.3 L768.4 150.9 L768.7 145.1 L769.0 152.7 L769.4 154.9 L769.7 149.4 L770.1 155.4 L770.4 154.5 L770.7 151.8 L771.1 155.4 L771.4 159.3 L771.8 155.1 L772.1 155.1 L772.4 153.7 L772.8 152.0 L773.1 160.2 L773.5 153.7 L773.8 157.4 L774.1 159.5 L774.5 157.1 L774.8 159.7 L775.2 160.9 L775.5 160.3 L775.8 161.8 L776.2 166.0 L776.5 164.8 L776.9 167.2 L777.2 174.3 L777.5 170.4 L777.9 169.5 L778.2 170.9 L778.6 170.2 L778.9 170.7 L779.2 171.5 L779.6 169.4 L779.9 168.0 L780.3 167.0 L780.6 165.7 L780.9 170.1 L781.3 160.8 L781.6 164.8 L782.0 167.5 L782.3 171.8 L782.6 165.8 L783.0 167.4 L783.3 160.8 L783.7 161.1 L784.0 159.7 L784.3 164.4 L784.7 163.2 L785.0 164.8 L785.4 160.1 L785.7 165.4 L786.0 161.3 L786.4 159.1 L786.7 164.0 L787.1 158.6 L787.4 160.5 L787.7 158.7 L788.1 160.3 L788.4 159.4 L788.8 159.6 L789.1 162.0 L789.4 159.7 L789.8 161.7 L790.1 159.4 L790.5 150.0 L790.8 157.9 L791.1 155.0 L791.5 154.6 L791.8 158.5 L792.2 157.4 L792.5 154.1 L792.8 152.8 L793.2 163.9 L793.5 152.6 L793.9 153.2 L794.2 155.4 L794.5 144.5 L794.9 153.7 L795.2 153.9 L795.6 147.5 L795.9 150.4 L796.2 143.9 L796.6 150.2 L796.9 150.7 L797.3 154.9 L797.6 153.3 L797.9 148.6 L798.3 153.8 L798.6 154.7 L799.0 154.6 L799.3 158.7 L799.6 158.8 L800.0 164.6 L800.3 161.5 L800.7 160.3 L801.0 161.2 L801.3 164.6 L801.7 173.2 L802.0 171.0 L802.4 166.2 L802.7 167.8 L803.0 173.0 L803.4 170.7 L803.7 174.8 L804.1 173.0 L804.4 176.8 L804.7 183.8 L805.1 181.1 L805.4 180.4 L805.8 183.5 L806.1 186.8 L806.4 186.9 L806.8 186.7 L807.1 190.2 L807.5 188.4 L807.8 190.8 L808.1 195.8 L808.5 196.7 L808.8 203.5 L809.2 197.2 L809.5 206.8 L809.8 207.5 L810.2 208.8 L810.5 211.0 L810.9 213.1 L811.2 212.2 L811.5 211.2 L811.9 215.2 L812.2 212.9 L812.6 211.9 L812.9 212.1 L813.2 214.4 L813.6 216.0 L813.9 218.2 L814.3 216.1 L814.6 214.6 L814.9 215.2 L815.3 214.1 L815.6 213.4 L816.0 214.0 L816.3 212.6 L816.6 212.2 L817.0 209.4 L817.3 208.8 L817.7 207.0 L818.0 210.2 L818.3 204.6 L818.7 204.9 L819.0 207.7 L819.4 211.5 L819.7 208.1 L820.0 214.0 L820.4 209.0 L820.7 209.2 L821.1 214.4 L821.4 213.2 L821.7 210.6 L822.1 210.7 L822.4 210.8 L822.8 212.1 L823.1 212.1 L823.4 210.3 L823.8 214.3 L824.1 216.0 L824.5 211.3 L824.8 214.5 L825.1 214.4 L825.5 207.0 L825.8 213.0 L826.2 210.9 L826.5 207.8 L826.8 206.3 L827.2 204.0 L827.5 209.2 L827.9 206.4 L828.2 202.0 L828.5 200.5 L828.9 197.2 L829.2 199.0 L829.6 200.3 L829.9 196.6 L830.2 197.1 L830.6 191.4 L830.9 197.3 L831.3 206.7 L831.6 199.9 L831.9 205.5 L832.3 205.1 L832.6 204.3 L833.0 201.3 L833.3 205.5 L833.6 206.8 L834.0 204.1 L834.3 208.7 L834.7 208.4 L835.0 213.8 L835.3 206.2 L835.7 203.2 L836.0 203.6 L836.4 203.6 L836.7 202.9 L837.0 191.7 L837.4 195.8 L837.7 186.3 L838.1 188.6 L838.4 188.5 L838.7 188.2 L839.1 185.4 L839.4 189.1 L839.8 188.5 L840.1 189.7 L840.4 192.4 L840.8 187.0 L841.1 187.9 L841.5 187.9 L841.8 188.2 L842.1 195.0 L842.5 189.1 L842.8 191.3 L843.2 193.7 L843.5 186.1 L843.8 191.0 L844.2 194.4 L844.5 191.8 L844.9 187.7 L845.2 195.1 L845.5 194.0 L845.9 195.6 L846.2 194.9 L846.6 191.4 L846.9 192.0 L847.2 187.7 L847.6 194.3 L847.9 194.8 L848.3 192.1 L848.6 190.6 L848.9 194.5 L849.3 192.9 L849.6 193.2 L850.0 187.9 L850.3 191.5 L850.6 191.9 L851.0 193.4 L851.3 190.5 L851.7 185.2 L852.0 183.2 L852.3 181.3 L852.7 187.1 L853.0 183.2 L853.4 182.7 L853.7 184.7 L854.0 186.0 L854.4 185.5 L854.7 184.9 L855.1 187.0 L855.4 188.3 L855.7 185.3 L856.1 181.1 L856.4 179.9 L856.8 184.9 L857.1 177.2 L857.4 180.4 L857.8 177.6 L858.1 183.3 L858.5 180.9 L858.8 178.3 L859.1 173.0 L859.5 175.9 L859.8 176.6 L860.2 174.7 L860.5 177.6 L860.8 174.8 L861.2 178.6" stroke="#1c9c1c" stroke-width="1.4" fill="none" stroke-linejoin="round"/><rect x="546" y="95.3" width="316.5" height="130.5" fill="none" stroke="#c4c4c4" stroke-width="1"/><line x1="862.5" y1="103.3" x2="865.5" y2="103.3" stroke="#c4c4c4" stroke-width="1"/><line x1="862.5" y1="123.5" x2="865.5" y2="123.5" stroke="#c4c4c4" stroke-width="1"/><line x1="862.5" y1="144.2" x2="865.5" y2="144.2" stroke="#c4c4c4" stroke-width="1"/><line x1="862.5" y1="164.5" x2="865.5" y2="164.5" stroke="#c4c4c4" stroke-width="1"/><line x1="862.5" y1="185.3" x2="865.5" y2="185.3" stroke="#c4c4c4" stroke-width="1"/><line x1="862.5" y1="205.3" x2="865.5" y2="205.3" stroke="#c4c4c4" stroke-width="1"/><line x1="545.6" y1="225.8" x2="545.6" y2="228.8" stroke="#c4c4c4" stroke-width="1"/><line x1="587" y1="225.8" x2="587" y2="228.8" stroke="#c4c4c4" stroke-width="1"/><line x1="628.5" y1="225.8" x2="628.5" y2="228.8" stroke="#c4c4c4" stroke-width="1"/><line x1="670" y1="225.8" x2="670" y2="228.8" stroke="#c4c4c4" stroke-width="1"/><line x1="711.5" y1="225.8" x2="711.5" y2="228.8" stroke="#c4c4c4" stroke-width="1"/><line x1="753" y1="225.8" x2="753" y2="228.8" stroke="#c4c4c4" stroke-width="1"/><line x1="794.5" y1="225.8" x2="794.5" y2="228.8" stroke="#c4c4c4" stroke-width="1"/><line x1="835.5" y1="225.8" x2="835.5" y2="228.8" stroke="#c4c4c4" stroke-width="1"/></svg>
<div class="t" style="left:866.20px;top:99.97px;font-size:7.0px;color:#e0e0e0;font-weight:normal;transform:scaleX(0.8408);-webkit-text-stroke:0.05px currentColor">0.9770</div>
<div class="t" style="left:866.20px;top:120.17px;font-size:7.0px;color:#e0e0e0;font-weight:normal;transform:scaleX(0.8408);-webkit-text-stroke:0.05px currentColor">0.9745</div>
<div class="t" style="left:866.20px;top:140.87px;font-size:7.0px;color:#e0e0e0;font-weight:normal;transform:scaleX(0.8408);-webkit-text-stroke:0.05px currentColor">0.9720</div>
<div class="t" style="left:866.20px;top:161.17px;font-size:7.0px;color:#e0e0e0;font-weight:normal;transform:scaleX(0.8408);-webkit-text-stroke:0.05px currentColor">0.9695</div>
<div class="t" style="left:866.20px;top:181.97px;font-size:7.0px;color:#e0e0e0;font-weight:normal;transform:scaleX(0.8408);-webkit-text-stroke:0.05px currentColor">0.9670</div>
<div class="t" style="left:866.20px;top:201.97px;font-size:7.0px;color:#e0e0e0;font-weight:normal;transform:scaleX(0.8408);-webkit-text-stroke:0.05px currentColor">0.9645</div>
<div class="t" style="left:544.60px;top:229.27px;font-size:7.0px;color:#e8e8e8;font-weight:normal;transform:scaleX(0.8165);-webkit-text-stroke:0.05px currentColor">21 Jan 2020</div>
<div class="t" style="left:586.00px;top:229.27px;font-size:7.0px;color:#e8e8e8;font-weight:normal;transform:scaleX(0.8479);-webkit-text-stroke:0.05px currentColor">22 Jan 14:00</div>
<div class="t" style="left:627.50px;top:229.27px;font-size:7.0px;color:#e8e8e8;font-weight:normal;transform:scaleX(0.8479);-webkit-text-stroke:0.05px currentColor">23 Jan 22:00</div>
<div class="t" style="left:669.00px;top:229.27px;font-size:7.0px;color:#e8e8e8;font-weight:normal;transform:scaleX(0.8479);-webkit-text-stroke:0.05px currentColor">27 Jan 06:00</div>
<div class="t" style="left:710.50px;top:229.27px;font-size:7.0px;color:#e8e8e8;font-weight:normal;transform:scaleX(0.8479);-webkit-text-stroke:0.05px currentColor">28 Jan 14:00</div>
<div class="t" style="left:752.00px;top:229.27px;font-size:7.0px;color:#e8e8e8;font-weight:normal;transform:scaleX(0.8479);-webkit-text-stroke:0.05px currentColor">29 Jan 22:00</div>
<div class="t" style="left:793.50px;top:229.27px;font-size:7.0px;color:#e8e8e8;font-weight:normal;transform:scaleX(0.8479);-webkit-text-stroke:0.05px currentColor">31 Jan 06:00</div>
<div class="t" style="left:834.50px;top:229.27px;font-size:7.0px;color:#e8e8e8;font-weight:normal;transform:scaleX(0.8421);-webkit-text-stroke:0.05px currentColor">3 Feb 14:00</div>
<div style="left:864.0px;top:173.9px;width:22.5px;height:7px;background:#a9b9c9;"></div>
<div class="t" style="left:866.20px;top:174.17px;font-size:7.0px;color:#1a2a3a;font-weight:normal;transform:scaleX(0.8408);">0.9679</div>
<div class="t" style="left:547.00px;top:175.44px;font-size:6.8px;color:#a0a0a0;font-weight:normal;text-shadow:0 0 1px #000;-webkit-text-stroke:0">#11392304 sell 3.00</div>
<div class="t" style="left:547.00px;top:181.44px;font-size:6.8px;color:#a0a0a0;font-weight:normal;transform:scaleX(0.9365);text-shadow:0 0 1px #000;-webkit-text-stroke:0">#11392305 buy 3.00</div>
<svg style="left:548.5px;top:98.3px" width="21" height="8" viewBox="0 0 21 8"><rect x="0" y="0" width="9.3" height="7.5" fill="#f4f4ff"/><rect x="0" y="0" width="9.3" height="1.6" fill="#b8b8f0"/><rect x="1" y="2.2" width="3.4" height="4.6" fill="#f0a0a0"/><rect x="5" y="2.2" width="3.4" height="4.6" fill="#a8a8f0"/><rect x="10.7" y="0.5" width="5" height="7" fill="#3434d8"/><rect x="15.2" y="0.5" width="5" height="7" fill="#e03434"/><circle cx="15.3" cy="1.8" r="1.3" fill="#c8c8c8"/></svg>
<div class="t" style="left:572.40px;top:99.02px;font-size:7.3px;color:#e8e8e8;font-weight:normal;transform:scaleX(0.8458);">USDCHF,H1</div>
<div style="left:548.0px;top:108.9px;width:28px;height:13.5px;background:linear-gradient(#3030e0,#3030e0);"></div>
<div style="left:639.0px;top:108.9px;width:28.2px;height:13.5px;background:linear-gradient(#3030e0,#3030e0);"></div>
<div class="t" style="left:553.65px;top:112.17px;font-size:8.3px;color:#f8e0e0;font-weight:normal;transform:scaleX(0.7634);">SELL</div>
<div class="t" style="left:647.00px;top:112.17px;font-size:8.3px;color:#f8e0e0;font-weight:normal;transform:scaleX(0.7617);">BUY</div>
<div style="left:548.0px;top:122.4px;width:59.5px;height:22.5px;background:linear-gradient(#3030e0,#1616b4);"></div>
<div style="left:609.2px;top:122.4px;width:58px;height:22.5px;background:linear-gradient(#3030e0,#1616b4);"></div>
<div style="left:550.0px;top:122.7px;width:24.0px;height:1px;background:rgba(255,255,255,0.3);"></div>
<div style="left:641.0px;top:122.7px;width:24.0px;height:1px;background:rgba(255,255,255,0.3);"></div>
<div style="left:576.0px;top:108.10000000000001px;width:63.6px;height:14.3px;background:#ffffff;border:1px solid #111;border-bottom-width:1.8px;border-left-width:1.5px;border-right-width:1.5px"></div>
<div style="left:577.5px;top:109.2px;width:11.3px;height:11.5px;background:#ebebeb;"></div>
<div style="left:627.0px;top:109.2px;width:11.3px;height:11.5px;background:#ebebeb;"></div>
<svg style="left:581.0px;top:114.10000000000001px" width="4" height="2.5" viewBox="0 0 4 2.5"><path d="M0 0H4L2 2.5Z" fill="#222"/></svg>
<svg style="left:630.7px;top:113.7px" width="4" height="2.5" viewBox="0 0 4 2.5"><path d="M0 2.5H4L2 0Z" fill="#222"/></svg>
<div class="t" style="left:609.00px;top:111.99px;font-size:8.4px;color:#333;font-weight:normal;transform:scaleX(0.8258);">3.00</div>
<div class="t" style="left:560.30px;top:134.61px;font-size:9.2px;color:#ffffff;font-weight:bold;transform:scaleX(0.8490);">0.96</div>
<div class="t" style="left:578.40px;top:124.20px;font-size:21.5px;color:#ffffff;font-weight:normal;transform:scaleX(0.8448);-webkit-text-stroke:0">79</div>
<div class="t" style="left:621.00px;top:134.61px;font-size:9.2px;color:#ffffff;font-weight:bold;transform:scaleX(0.8490);">0.96</div>
<div class="t" style="left:639.00px;top:124.20px;font-size:21.5px;color:#ffffff;font-weight:normal;transform:scaleX(0.8448);-webkit-text-stroke:0">82</div>
<div style="left:180px;top:244px;width:360px;height:172px;background:#ffffff;border:1.2px solid #6e6e6e"></div>
<div style="left:183.5px;top:246px;width:352px;height:18px;background:#f2f2f2;"></div>
<svg style="left:184.5px;top:249px" width="12" height="11" viewBox="0 0 12 11"><rect x="0.5" y="0.5" width="9" height="7" fill="#fff" stroke="#3b8fe0"/><rect x="0.5" y="0.5" width="9" height="1.8" fill="#3b8fe0"/><rect x="2.5" y="3" width="9" height="7.5" fill="#fff" stroke="#3b8fe0"/><rect x="2.5" y="3" width="9" height="1.8" fill="#3b8fe0"/><path d="M4 9L6 7L7.6 8L10 5.8" stroke="#e05030" stroke-width="1" fill="none"/></svg>
<div class="t" style="left:198.50px;top:250.92px;font-size:8.6px;color:#6e6e6e;font-weight:normal;transform:scaleX(0.8300);">EURUSD,H1</div>
<div style="left:475.5px;top:256.3px;width:5.0px;height:1.2px;background:#8a8a8a;"></div>
<div style="left:496.7px;top:251.3px;width:6.6px;height:6.6px;border:1.1px solid #8a8a8a"></div>
<svg style="left:521px;top:251.2px" width="6.5" height="6.5" viewBox="0 0 6.5 6.5"><path d="M0.4 0.4L6.1 6.1M6.1 0.4L0.4 6.1" stroke="#8a8a8a" stroke-width="1.3"/></svg>
<div style="left:185px;top:264px;width:349px;height:146px;background:#000000;"></div>
<svg style="left:185px;top:264px" width="349" height="146" viewBox="185 264 349 146"><line x1="188" y1="288" x2="503.5" y2="288" stroke="#8a8a8a" stroke-width="1" stroke-dasharray="2 2"/><line x1="188" y1="309.4" x2="503.5" y2="309.4" stroke="#8a8a8a" stroke-width="1" stroke-dasharray="2 2"/><line x1="188" y1="331" x2="503.5" y2="331" stroke="#8a8a8a" stroke-width="1" stroke-dasharray="2 2"/><line x1="188" y1="353.1" x2="503.5" y2="353.1" stroke="#8a8a8a" stroke-width="1" stroke-dasharray="2 2"/><line x1="188" y1="374.8" x2="503.5" y2="374.8" stroke="#8a8a8a" stroke-width="1" stroke-dasharray="2 2"/><line x1="207.5" y1="267" x2="207.5" y2="396.8" stroke="#8a8a8a" stroke-width="1" stroke-dasharray="2 2"/><line x1="228.3" y1="267" x2="228.3" y2="396.8" stroke="#8a8a8a" stroke-width="1" stroke-dasharray="2 2"/><line x1="249.1" y1="267" x2="249.1" y2="396.8" stroke="#8a8a8a" stroke-width="1" stroke-dasharray="2 2"/><line x1="269.9" y1="267" x2="269.9" y2="396.8" stroke="#8a8a8a" stroke-width="1" stroke-dasharray="2 2"/><line x1="290.7" y1="267" x2="290.7" y2="396.8" stroke="#8a8a8a" stroke-width="1" stroke-dasharray="2 2"/><line x1="311.5" y1="267" x2="311.5" y2="396.8" stroke="#8a8a8a" stroke-width="1" stroke-dasharray="2 2"/><line x1="332.3" y1="267" x2="332.3" y2="396.8" stroke="#8a8a8a" stroke-width="1" stroke-dasharray="2 2"/><line x1="353.1" y1="267" x2="353.1" y2="396.8" stroke="#8a8a8a" stroke-width="1" stroke-dasharray="2 2"/><line x1="373.9" y1="267" x2="373.9" y2="396.8" stroke="#8a8a8a" stroke-width="1" stroke-dasharray="2 2"/><line x1="394.70000000000005" y1="267" x2="394.70000000000005" y2="396.8" stroke="#8a8a8a" stroke-width="1" stroke-dasharray="2 2"/><line x1="415.5" y1="267" x2="415.5" y2="396.8" stroke="#8a8a8a" stroke-width="1" stroke-dasharray="2 2"/><line x1="436.3" y1="267" x2="436.3" y2="396.8" stroke="#8a8a8a" stroke-width="1" stroke-dasharray="2 2"/><line x1="457.1" y1="267" x2="457.1" y2="396.8" stroke="#8a8a8a" stroke-width="1" stroke-dasharray="2 2"/><line x1="477.90000000000003" y1="267" x2="477.90000000000003" y2="396.8" stroke="#8a8a8a" stroke-width="1" stroke-dasharray="2 2"/><line x1="498.7" y1="267" x2="498.7" y2="396.8" stroke="#8a8a8a" stroke-width="1" stroke-dasharray="2 2"/><line x1="188" y1="355.1" x2="503.5" y2="355.1" stroke="#5a6a7e" stroke-width="1.1"/><path d="M188.0 276.6 L188.3 281.6 L188.7 278.8 L189.0 277.7 L189.4 278.8 L189.7 278.2 L190.0 280.2 L190.4 278.7 L190.7 281.5 L191.1 284.1 L191.4 285.7 L191.7 283.7 L192.1 291.9 L192.4 287.4 L192.8 287.6 L193.1 285.7 L193.4 287.0 L193.8 290.6 L194.1 288.9 L194.5 286.0 L194.8 288.2 L195.1 287.1 L195.5 295.3 L195.8 286.4 L196.2 289.1 L196.5 292.6 L196.8 292.9 L197.2 294.4 L197.5 292.1 L197.9 293.6 L198.2 302.0 L198.5 301.8 L198.9 301.3 L199.2 299.3 L199.6 295.8 L199.9 297.7 L200.2 298.9 L200.6 296.3 L200.9 305.2 L201.3 302.1 L201.6 304.1 L201.9 306.5 L202.3 304.4 L202.6 304.5 L203.0 307.3 L203.3 305.9 L203.6 299.7 L204.0 305.3 L204.3 304.4 L204.7 307.7 L205.0 305.1 L205.3 309.3 L205.7 311.3 L206.0 309.5 L206.4 311.7 L206.7 318.9 L207.0 307.2 L207.4 308.9 L207.7 312.2 L208.1 318.6 L208.4 316.6 L208.7 313.9 L209.1 315.1 L209.4 315.6 L209.8 316.3 L210.1 317.7 L210.4 321.7 L210.8 317.6 L211.1 314.4 L211.5 319.4 L211.8 320.7 L212.1 319.5 L212.5 326.1 L212.8 322.7 L213.2 321.1 L213.5 324.2 L213.8 323.5 L214.2 323.9 L214.5 330.4 L214.9 320.9 L215.2 324.4 L215.5 328.9 L215.9 321.9 L216.2 322.5 L216.6 321.8 L216.9 326.1 L217.2 324.7 L217.6 322.2 L217.9 327.2 L218.3 325.6 L218.6 324.6 L218.9 326.8 L219.3 325.4 L219.6 327.6 L220.0 326.6 L220.3 323.1 L220.6 326.7 L221.0 327.7 L221.3 325.3 L221.7 324.8 L222.0 328.4 L222.3 332.5 L222.7 328.9 L223.0 332.7 L223.4 325.0 L223.7 323.7 L224.0 323.4 L224.4 324.5 L224.7 324.6 L225.1 328.0 L225.4 321.2 L225.7 325.6 L226.1 324.4 L226.4 322.8 L226.8 327.5 L227.1 329.3 L227.4 330.2 L227.8 331.3 L228.1 329.9 L228.5 338.1 L228.8 335.4 L229.1 331.2 L229.5 331.7 L229.8 329.8 L230.2 328.7 L230.5 330.5 L230.8 332.3 L231.2 336.5 L231.5 330.5 L231.9 326.4 L232.2 330.9 L232.5 331.3 L232.9 330.1 L233.2 329.3 L233.6 328.2 L233.9 330.7 L234.2 328.6 L234.6 328.1 L234.9 324.6 L235.3 328.2 L235.6 324.0 L235.9 326.9 L236.3 326.6 L236.6 327.8 L237.0 321.8 L237.3 326.8 L237.6 331.7 L238.0 327.2 L238.3 329.5 L238.7 336.6 L239.0 327.8 L239.3 333.2 L239.7 326.4 L240.0 334.9 L240.4 337.7 L240.7 334.5 L241.0 337.3 L241.4 345.5 L241.7 334.7 L242.1 334.2 L242.4 334.5 L242.7 331.2 L243.1 331.0 L243.4 328.0 L243.8 329.7 L244.1 323.4 L244.4 318.1 L244.8 319.9 L245.1 320.1 L245.5 325.2 L245.8 322.4 L246.1 319.6 L246.5 323.2 L246.8 327.2 L247.2 324.1 L247.5 321.1 L247.8 318.7 L248.2 321.7 L248.5 317.3 L248.9 312.6 L249.2 312.3 L249.5 311.4 L249.9 311.6 L250.2 313.8 L250.6 311.1 L250.9 310.8 L251.2 311.1 L251.6 309.7 L251.9 315.1 L252.3 311.8 L252.6 316.2 L252.9 315.8 L253.3 306.1 L253.6 312.6 L254.0 316.2 L254.3 314.3 L254.6 314.4 L255.0 315.8 L255.3 315.3 L255.7 314.3 L256.0 311.8 L256.3 315.5 L256.7 310.7 L257.0 309.2 L257.4 314.5 L257.7 304.7 L258.0 314.9 L258.4 305.6 L258.7 303.8 L259.1 308.3 L259.4 310.3 L259.7 313.6 L260.1 314.6 L260.4 307.9 L260.8 310.8 L261.1 307.2 L261.4 311.8 L261.8 309.9 L262.1 308.2 L262.5 310.1 L262.8 310.0 L263.1 310.5 L263.5 312.6 L263.8 311.1 L264.2 310.0 L264.5 305.1 L264.8 310.9 L265.2 312.0 L265.5 310.0 L265.9 309.8 L266.2 310.1 L266.5 311.9 L266.9 311.0 L267.2 308.8 L267.6 311.4 L267.9 306.6 L268.2 307.9 L268.6 314.0 L268.9 307.3 L269.3 307.8 L269.6 306.0 L269.9 307.7 L270.3 307.3 L270.6 304.8 L271.0 307.8 L271.3 309.1 L271.6 310.6 L272.0 313.9 L272.3 309.9 L272.7 308.3 L273.0 310.1 L273.3 309.7 L273.7 312.6 L274.0 310.5 L274.4 317.4 L274.7 318.0 L275.0 323.4 L275.4 315.8 L275.7 314.5 L276.1 314.6 L276.4 311.9 L276.7 315.4 L277.1 313.1 L277.4 311.1 L277.8 314.4 L278.1 313.2 L278.4 310.4 L278.8 316.2 L279.1 314.8 L279.5 314.1 L279.8 312.4 L280.1 310.5 L280.5 311.6 L280.8 313.2 L281.2 309.1 L281.5 310.3 L281.8 314.3 L282.2 312.0 L282.5 309.5 L282.9 311.6 L283.2 312.4 L283.5 309.1 L283.9 317.2 L284.2 311.9 L284.6 313.8 L284.9 312.9 L285.2 308.3 L285.6 311.5 L285.9 309.8 L286.3 309.4 L286.6 317.6 L286.9 311.1 L287.3 313.8 L287.6 310.6 L288.0 312.2 L288.3 314.3 L288.6 312.2 L289.0 310.4 L289.3 308.1 L289.7 314.0 L290.0 306.9 L290.3 301.5 L290.7 308.4 L291.0 309.3 L291.4 308.5 L291.7 307.8 L292.0 307.8 L292.4 309.1 L292.7 313.3 L293.1 303.9 L293.4 309.8 L293.7 304.9 L294.1 308.9 L294.4 310.0 L294.8 315.6 L295.1 308.3 L295.4 306.8 L295.8 310.9 L296.1 313.2 L296.5 309.8 L296.8 311.2 L297.1 307.5 L297.5 310.9 L297.8 314.3 L298.2 307.9 L298.5 308.0 L298.8 313.3 L299.2 309.8 L299.5 309.1 L299.9 312.2 L300.2 311.3 L300.5 305.5 L300.9 308.8 L301.2 311.3 L301.6 313.7 L301.9 311.1 L302.2 308.4 L302.6 306.8 L302.9 309.3 L303.3 307.5 L303.6 305.3 L303.9 309.7 L304.3 310.8 L304.6 307.3 L305.0 311.2 L305.3 309.5 L305.6 305.5 L306.0 309.2 L306.3 311.1 L306.7 307.5 L307.0 306.5 L307.3 311.8 L307.7 312.0 L308.0 308.2 L308.4 307.8 L308.7 311.6 L309.0 310.8 L309.4 309.6 L309.7 312.4 L310.1 308.3 L310.4 313.2 L310.7 311.9 L311.1 308.3 L311.4 308.7 L311.8 305.9 L312.1 310.2 L312.4 311.6 L312.8 312.3 L313.1 310.5 L313.5 310.6 L313.8 312.6 L314.1 314.2 L314.5 312.3 L314.8 311.5 L315.2 310.1 L315.5 312.1 L315.8 312.1 L316.2 312.8 L316.5 309.3 L316.9 312.4 L317.2 309.5 L317.5 313.7 L317.9 316.1 L318.2 320.9 L318.6 319.4 L318.9 320.3 L319.2 323.5 L319.6 322.6 L319.9 322.4 L320.3 324.9 L320.6 326.3 L320.9 327.8 L321.3 327.6 L321.6 328.0 L322.0 331.8 L322.3 331.9 L322.6 331.1 L323.0 339.4 L323.3 332.6 L323.7 330.1 L324.0 330.9 L324.3 338.5 L324.7 325.0 L325.0 333.0 L325.4 330.8 L325.7 330.9 L326.0 332.7 L326.4 334.5 L326.7 337.6 L327.1 331.0 L327.4 335.6 L327.7 337.9 L328.1 333.1 L328.4 336.5 L328.8 333.7 L329.1 338.0 L329.4 333.5 L329.8 335.2 L330.1 330.7 L330.5 330.3 L330.8 337.0 L331.1 334.3 L331.5 335.7 L331.8 333.9 L332.2 335.0 L332.5 335.2 L332.8 332.5 L333.2 336.6 L333.5 336.6 L333.9 337.1 L334.2 332.9 L334.5 334.4 L334.9 337.1 L335.2 334.9 L335.6 335.3 L335.9 334.9 L336.2 334.9 L336.6 338.4 L336.9 338.5 L337.3 339.1 L337.6 336.0 L337.9 332.4 L338.3 335.5 L338.6 333.1 L339.0 331.1 L339.3 336.4 L339.6 337.0 L340.0 336.8 L340.3 329.9 L340.7 329.9 L341.0 331.5 L341.3 336.8 L341.7 331.8 L342.0 335.2 L342.4 337.2 L342.7 332.8 L343.0 333.7 L343.4 325.4 L343.7 326.2 L344.1 332.9 L344.4 331.2 L344.7 334.3 L345.1 338.1 L345.4 325.3 L345.8 331.6 L346.1 325.0 L346.4 331.4 L346.8 327.0 L347.1 325.2 L347.5 324.7 L347.8 326.6 L348.1 327.0 L348.5 326.7 L348.8 323.0 L349.2 325.1 L349.5 323.9 L349.8 324.9 L350.2 330.2 L350.5 333.5 L350.9 330.6 L351.2 331.4 L351.5 329.1 L351.9 331.6 L352.2 327.0 L352.6 325.3 L352.9 333.1 L353.2 329.4 L353.6 333.9 L353.9 338.0 L354.3 337.1 L354.6 337.5 L354.9 338.5 L355.3 341.2 L355.6 339.9 L356.0 337.6 L356.3 336.8 L356.6 340.1 L357.0 343.7 L357.3 344.4 L357.7 333.2 L358.0 342.4 L358.3 337.2 L358.7 342.4 L359.0 339.9 L359.4 339.7 L359.7 336.2 L360.0 344.3 L360.4 335.4 L360.7 343.7 L361.1 338.7 L361.4 338.9 L361.7 338.2 L362.1 337.5 L362.4 341.4 L362.8 341.5 L363.1 340.3 L363.4 338.1 L363.8 340.8 L364.1 341.6 L364.5 334.8 L364.8 338.9 L365.1 341.6 L365.5 340.4 L365.8 342.4 L366.2 340.1 L366.5 341.1 L366.8 344.2 L367.2 339.2 L367.5 337.1 L367.9 337.7 L368.2 335.0 L368.5 339.7 L368.9 345.8 L369.2 340.7 L369.6 330.5 L369.9 338.0 L370.2 340.7 L370.6 339.8 L370.9 333.4 L371.3 334.0 L371.6 338.0 L371.9 337.6 L372.3 340.5 L372.6 334.2 L373.0 334.2 L373.3 336.1 L373.6 336.3 L374.0 336.3 L374.3 339.8 L374.7 336.4 L375.0 333.2 L375.3 339.0 L375.7 343.9 L376.0 333.8 L376.4 336.2 L376.7 336.8 L377.0 338.6 L377.4 338.1 L377.7 338.7 L378.1 340.6 L378.4 340.3 L378.7 334.1 L379.1 334.2 L379.4 338.1 L379.8 334.2 L380.1 337.1 L380.4 337.7 L380.8 334.3 L381.1 332.3 L381.5 333.2 L381.8 331.4 L382.1 329.7 L382.5 327.7 L382.8 329.8 L383.2 327.6 L383.5 332.9 L383.8 351.2 L384.2 358.6 L384.5 363.8 L384.9 360.9 L385.2 358.2 L385.5 350.0 L385.9 353.4 L386.2 353.5 L386.6 351.2 L386.9 351.3 L387.2 354.6 L387.6 353.9 L387.9 354.4 L388.3 353.0 L388.6 355.7 L388.9 354.5 L389.3 352.2 L389.6 356.0 L390.0 351.9 L390.3 348.0 L390.6 353.0 L391.0 358.5 L391.3 354.5 L391.7 357.3 L392.0 352.7 L392.3 353.4 L392.7 357.5 L393.0 353.3 L393.4 358.4 L393.7 357.8 L394.0 356.8 L394.4 361.7 L394.7 360.8 L395.1 361.1 L395.4 361.7 L395.7 361.3 L396.1 367.6 L396.4 362.9 L396.8 362.5 L397.1 366.8 L397.4 369.2 L397.8 369.3 L398.1 370.6 L398.5 367.0 L398.8 367.5 L399.1 369.2 L399.5 367.7 L399.8 368.0 L400.2 365.7 L400.5 362.0 L400.8 363.5 L401.2 369.7 L401.5 367.9 L401.9 371.2 L402.2 370.1 L402.5 369.9 L402.9 376.8 L403.2 371.2 L403.6 365.7 L403.9 367.7 L404.2 373.1 L404.6 370.0 L404.9 370.7 L405.3 367.6 L405.6 369.8 L405.9 366.2 L406.3 370.5 L406.6 366.7 L407.0 369.2 L407.3 365.7 L407.6 367.8 L408.0 367.3 L408.3 368.2 L408.7 365.1 L409.0 366.7 L409.3 374.1 L409.7 373.7 L410.0 372.6 L410.4 373.2 L410.7 366.3 L411.0 378.8 L411.4 370.8 L411.7 369.2 L412.1 368.5 L412.4 367.4 L412.7 374.2 L413.1 374.2 L413.4 367.4 L413.8 370.5 L414.1 374.0 L414.4 373.0 L414.8 371.2 L415.1 378.2 L415.5 376.0 L415.8 376.4 L416.1 377.8 L416.5 375.7 L416.8 371.8 L417.2 373.4 L417.5 372.7 L417.8 372.7 L418.2 373.4 L418.5 371.3 L418.9 376.8 L419.2 374.1 L419.5 372.7 L419.9 372.3 L420.2 373.3 L420.6 371.0 L420.9 371.0 L421.2 374.7 L421.6 372.3 L421.9 367.4 L422.3 377.3 L422.6 375.7 L422.9 376.8 L423.3 375.4 L423.6 376.9 L424.0 379.8 L424.3 379.7 L424.6 377.2 L425.0 378.2 L425.3 381.9 L425.7 382.3 L426.0 381.0 L426.3 382.4 L426.7 379.0 L427.0 381.4 L427.4 372.0 L427.7 378.4 L428.0 380.4 L428.4 382.7 L428.7 384.9 L429.1 382.3 L429.4 380.8 L429.7 380.0 L430.1 385.4 L430.4 385.1 L430.8 377.8 L431.1 381.4 L431.4 378.3 L431.8 384.2 L432.1 377.8 L432.5 376.2 L432.8 377.0 L433.1 373.0 L433.5 373.0 L433.8 375.4 L434.2 371.9 L434.5 375.7 L434.8 375.2 L435.2 375.7 L435.5 371.9 L435.9 372.6 L436.2 378.1 L436.5 383.4 L436.9 377.1 L437.2 378.7 L437.6 383.4 L437.9 381.0 L438.2 380.8 L438.6 381.9 L438.9 386.0 L439.3 382.1 L439.6 385.8 L439.9 382.6 L440.3 384.3 L440.6 389.8 L441.0 387.1 L441.3 385.2 L441.6 386.3 L442.0 384.8 L442.3 384.8 L442.7 383.7 L443.0 379.6 L443.3 380.0 L443.7 386.6 L444.0 381.3 L444.4 384.0 L444.7 382.6 L445.0 381.3 L445.4 380.1 L445.7 383.2 L446.1 380.2 L446.4 383.3 L446.7 378.5 L447.1 378.5 L447.4 381.2 L447.8 380.7 L448.1 379.7 L448.4 382.0 L448.8 377.7 L449.1 379.5 L449.5 382.5 L449.8 378.6 L450.1 378.3 L450.5 378.6 L450.8 376.6 L451.2 376.5 L451.5 377.5 L451.8 377.6 L452.2 375.2 L452.5 377.2 L452.9 378.7 L453.2 380.3 L453.5 377.8 L453.9 378.8 L454.2 371.9 L454.6 382.5 L454.9 377.1 L455.2 373.2 L455.6 376.0 L455.9 378.3 L456.3 380.4 L456.6 371.6 L456.9 376.8 L457.3 376.0 L457.6 367.1 L458.0 372.8 L458.3 371.7 L458.6 369.1 L459.0 368.2 L459.3 373.1 L459.7 366.8 L460.0 366.1 L460.3 369.9 L460.7 373.5 L461.0 367.7 L461.4 364.4 L461.7 369.9 L462.0 363.8 L462.4 357.5 L462.7 364.6 L463.1 366.4 L463.4 366.0 L463.7 362.3 L464.1 361.8 L464.4 361.6 L464.8 368.6 L465.1 366.8 L465.4 367.4 L465.8 368.1 L466.1 365.9 L466.5 368.5 L466.8 369.2 L467.1 373.4 L467.5 370.7 L467.8 367.6 L468.2 367.8 L468.5 367.7 L468.8 369.9 L469.2 369.0 L469.5 369.0 L469.9 368.4 L470.2 371.2 L470.5 368.6 L470.9 369.7 L471.2 366.3 L471.6 363.2 L471.9 360.3 L472.2 364.0 L472.6 360.8 L472.9 360.3 L473.3 358.9 L473.6 359.6 L473.9 354.4 L474.3 354.2 L474.6 351.8 L475.0 351.2 L475.3 350.9 L475.6 352.0 L476.0 344.8 L476.3 349.0 L476.7 346.0 L477.0 342.8 L477.3 336.0 L477.7 337.1 L478.0 338.0 L478.4 342.2 L478.7 339.0 L479.0 330.0 L479.4 336.4 L479.7 338.0 L480.1 328.2 L480.4 331.9 L480.7 336.9 L481.1 332.3 L481.4 334.3 L481.8 334.0 L482.1 337.6 L482.4 331.8 L482.8 332.3 L483.1 337.7 L483.5 332.1 L483.8 333.4 L484.1 338.5 L484.5 335.8 L484.8 339.8 L485.2 337.9 L485.5 337.3 L485.8 338.7 L486.2 347.1 L486.5 345.7 L486.9 350.3 L487.2 343.9 L487.5 345.9 L487.9 343.7 L488.2 346.0 L488.6 347.7 L488.9 344.5 L489.2 346.8 L489.6 351.1 L489.9 352.0 L490.3 357.5 L490.6 356.7 L490.9 357.5 L491.3 356.8 L491.6 361.4 L492.0 365.8 L492.3 364.5 L492.6 352.4 L493.0 351.9 L493.3 346.5 L493.7 344.1 L494.0 346.6 L494.3 349.9 L494.7 353.5 L495.0 349.6 L495.4 353.2 L495.7 349.7 L496.0 348.8 L496.4 357.0 L496.7 353.6 L497.1 357.7 L497.4 351.5 L497.7 356.5 L498.1 354.6 L498.4 350.4 L498.8 353.2 L499.1 354.4 L499.4 352.4 L499.8 351.6 L500.1 356.4 L500.5 351.0 L500.8 355.4 L501.1 353.4 L501.5 352.2 L501.8 348.9 L502.2 355.4 L502.5 356.2 L502.8 354.5" stroke="#33e633" stroke-width="1.4" fill="none" stroke-linejoin="round"/><rect x="188" y="267" width="315.5" height="129.8" fill="none" stroke="#c4c4c4" stroke-width="1"/><line x1="503.5" y1="288" x2="506.5" y2="288" stroke="#c4c4c4" stroke-width="1"/><line x1="503.5" y1="309.4" x2="506.5" y2="309.4" stroke="#c4c4c4" stroke-width="1"/><line x1="503.5" y1="331" x2="506.5" y2="331" stroke="#c4c4c4" stroke-width="1"/><line x1="503.5" y1="374.8" x2="506.5" y2="374.8" stroke="#c4c4c4" stroke-width="1"/><line x1="188" y1="396.8" x2="188" y2="399.8" stroke="#c4c4c4" stroke-width="1"/><line x1="228.3" y1="396.8" x2="228.3" y2="399.8" stroke="#c4c4c4" stroke-width="1"/><line x1="269.9" y1="396.8" x2="269.9" y2="399.8" stroke="#c4c4c4" stroke-width="1"/><line x1="311.5" y1="396.8" x2="311.5" y2="399.8" stroke="#c4c4c4" stroke-width="1"/><line x1="353.1" y1="396.8" x2="353.1" y2="399.8" stroke="#c4c4c4" stroke-width="1"/><line x1="394.7" y1="396.8" x2="394.7" y2="399.8" stroke="#c4c4c4" stroke-width="1"/><line x1="436.3" y1="396.8" x2="436.3" y2="399.8" stroke="#c4c4c4" stroke-width="1"/><line x1="477.9" y1="396.8" x2="477.9" y2="399.8" stroke="#c4c4c4" stroke-width="1"/></svg>
<div class="t" style="left:507.20px;top:284.67px;font-size:7.0px;color:#e0e0e0;font-weight:normal;transform:scaleX(0.8617);-webkit-text-stroke:0.05px currentColor">1.1180</div>
<div class="t" style="left:507.20px;top:306.07px;font-size:7.0px;color:#e0e0e0;font-weight:normal;transform:scaleX(0.8617);-webkit-text-stroke:0.05px currentColor">1.1140</div>
<div class="t" style="left:507.20px;top:327.67px;font-size:7.0px;color:#e0e0e0;font-weight:normal;transform:scaleX(0.8617);-webkit-text-stroke:0.05px currentColor">1.1100</div>
<div class="t" style="left:507.20px;top:371.47px;font-size:7.0px;color:#e0e0e0;font-weight:normal;transform:scaleX(0.8408);-webkit-text-stroke:0.05px currentColor">1.1020</div>
<div class="t" style="left:187.00px;top:400.27px;font-size:7.0px;color:#e8e8e8;font-weight:normal;transform:scaleX(0.8257);-webkit-text-stroke:0.05px currentColor">7 Jan 2020</div>
<div class="t" style="left:227.30px;top:400.27px;font-size:7.0px;color:#e8e8e8;font-weight:normal;transform:scaleX(0.8600);-webkit-text-stroke:0.05px currentColor">9 Jan 17:00</div>
<div class="t" style="left:268.90px;top:400.27px;font-size:7.0px;color:#e8e8e8;font-weight:normal;transform:scaleX(0.8479);-webkit-text-stroke:0.05px currentColor">14 Jan 09:00</div>
<div class="t" style="left:310.50px;top:400.27px;font-size:7.0px;color:#e8e8e8;font-weight:normal;transform:scaleX(0.8479);-webkit-text-stroke:0.05px currentColor">17 Jan 01:00</div>
<div class="t" style="left:352.10px;top:400.27px;font-size:7.0px;color:#e8e8e8;font-weight:normal;transform:scaleX(0.8479);-webkit-text-stroke:0.05px currentColor">21 Jan 17:00</div>
<div class="t" style="left:393.70px;top:400.27px;font-size:7.0px;color:#e8e8e8;font-weight:normal;transform:scaleX(0.8479);-webkit-text-stroke:0.05px currentColor">24 Jan 09:00</div>
<div class="t" style="left:435.30px;top:400.27px;font-size:7.0px;color:#e8e8e8;font-weight:normal;transform:scaleX(0.8479);-webkit-text-stroke:0.05px currentColor">29 Jan 01:00</div>
<div class="t" style="left:476.90px;top:400.27px;font-size:7.0px;color:#e8e8e8;font-weight:normal;transform:scaleX(0.8479);-webkit-text-stroke:0.05px currentColor">31 Jan 17:00</div>
<div style="left:505.0px;top:351.5px;width:22.5px;height:7px;background:#a9b9c9;"></div>
<div class="t" style="left:507.20px;top:351.77px;font-size:7.0px;color:#1a2a3a;font-weight:normal;transform:scaleX(0.8408);">1.1057</div>
<svg style="left:190px;top:269.3px" width="21" height="8" viewBox="0 0 21 8"><rect x="0" y="0" width="9.3" height="7.5" fill="#f4f4ff"/><rect x="0" y="0" width="9.3" height="1.6" fill="#b8b8f0"/><rect x="1" y="2.2" width="3.4" height="4.6" fill="#f0a0a0"/><rect x="5" y="2.2" width="3.4" height="4.6" fill="#a8a8f0"/><rect x="10.7" y="0.5" width="5" height="7" fill="#3434d8"/><rect x="15.2" y="0.5" width="5" height="7" fill="#e03434"/><circle cx="15.3" cy="1.8" r="1.3" fill="#c8c8c8"/></svg>
<div class="t" style="left:213.90px;top:270.02px;font-size:7.3px;color:#e8e8e8;font-weight:normal;transform:scaleX(0.8214);">EURUSD,H1</div>
<div style="left:190px;top:279.5px;width:28px;height:13.5px;background:linear-gradient(#3030e0,#3030e0);"></div>
<div style="left:281px;top:279.5px;width:28.2px;height:13.5px;background:linear-gradient(#3030e0,#3030e0);"></div>
<div class="t" style="left:195.65px;top:282.77px;font-size:8.3px;color:#f8e0e0;font-weight:normal;transform:scaleX(0.7634);">SELL</div>
<div class="t" style="left:289.00px;top:282.77px;font-size:8.3px;color:#f8e0e0;font-weight:normal;transform:scaleX(0.7617);">BUY</div>
<div style="left:190px;top:293.0px;width:59.5px;height:22.5px;background:linear-gradient(#3030e0,#1616b4);"></div>
<div style="left:251.2px;top:293.0px;width:58px;height:22.5px;background:linear-gradient(#3030e0,#1616b4);"></div>
<div style="left:192px;top:293.3px;width:24px;height:1px;background:rgba(255,255,255,0.3);"></div>
<div style="left:283px;top:293.3px;width:24px;height:1px;background:rgba(255,255,255,0.3);"></div>
<div style="left:218px;top:278.7px;width:63.6px;height:14.3px;background:#ffffff;border:1px solid #111;border-bottom-width:1.8px;border-left-width:1.5px;border-right-width:1.5px"></div>
<div style="left:219.5px;top:279.8px;width:11.3px;height:11.5px;background:#ebebeb;"></div>
<div style="left:269px;top:279.8px;width:11.3px;height:11.5px;background:#ebebeb;"></div>
<svg style="left:223px;top:284.7px" width="4" height="2.5" viewBox="0 0 4 2.5"><path d="M0 0H4L2 2.5Z" fill="#222"/></svg>
<svg style="left:272.7px;top:284.3px" width="4" height="2.5" viewBox="0 0 4 2.5"><path d="M0 2.5H4L2 0Z" fill="#222"/></svg>
<div class="t" style="left:251.00px;top:282.59px;font-size:8.4px;color:#333;font-weight:normal;transform:scaleX(0.8258);">3.00</div>
<div class="t" style="left:202.30px;top:305.21px;font-size:9.2px;color:#ffffff;font-weight:bold;transform:scaleX(0.8490);">1.10</div>
<div class="t" style="left:220.40px;top:294.80px;font-size:21.5px;color:#ffffff;font-weight:normal;transform:scaleX(0.8448);-webkit-text-stroke:0">57</div>
<div class="t" style="left:263.00px;top:305.21px;font-size:9.2px;color:#ffffff;font-weight:bold;transform:scaleX(0.8490);">1.10</div>
<div class="t" style="left:281.00px;top:294.80px;font-size:21.5px;color:#ffffff;font-weight:normal;transform:scaleX(0.8448);-webkit-text-stroke:0">60</div>
<div style="left:539px;top:244px;width:359px;height:172px;background:#ffffff;border:1.2px solid #6e6e6e"></div>
<div style="left:542.0px;top:246px;width:352.5px;height:18px;background:#f2f2f2;"></div>
<svg style="left:543.5px;top:249px" width="12" height="11" viewBox="0 0 12 11"><rect x="0.5" y="0.5" width="9" height="7" fill="#fff" stroke="#3b8fe0"/><rect x="0.5" y="0.5" width="9" height="1.8" fill="#3b8fe0"/><rect x="2.5" y="3" width="9" height="7.5" fill="#fff" stroke="#3b8fe0"/><rect x="2.5" y="3" width="9" height="1.8" fill="#3b8fe0"/><path d="M4 9L6 7L7.6 8L10 5.8" stroke="#e05030" stroke-width="1" fill="none"/></svg>
<div class="t" style="left:557.50px;top:250.92px;font-size:8.6px;color:#6e6e6e;font-weight:normal;transform:scaleX(0.8300);">USDJPY,H1</div>
<div style="left:833.5px;top:256.3px;width:5.0px;height:1.2px;background:#8a8a8a;"></div>
<div style="left:854.7px;top:251.3px;width:6.6px;height:6.6px;border:1.1px solid #8a8a8a"></div>
<svg style="left:879px;top:251.2px" width="6.5" height="6.5" viewBox="0 0 6.5 6.5"><path d="M0.4 0.4L6.1 6.1M6.1 0.4L0.4 6.1" stroke="#8a8a8a" stroke-width="1.3"/></svg>
<div style="left:543.5px;top:264px;width:349.5px;height:146px;background:#000000;"></div>
<svg style="left:543.5px;top:264px" width="349.5" height="146" viewBox="543.5 264 349.5 146"><line x1="546" y1="288" x2="862.5" y2="288" stroke="#8a8a8a" stroke-width="1" stroke-dasharray="2 2"/><line x1="546" y1="309.4" x2="862.5" y2="309.4" stroke="#8a8a8a" stroke-width="1" stroke-dasharray="2 2"/><line x1="546" y1="331" x2="862.5" y2="331" stroke="#8a8a8a" stroke-width="1" stroke-dasharray="2 2"/><line x1="546" y1="352.6" x2="862.5" y2="352.6" stroke="#8a8a8a" stroke-width="1" stroke-dasharray="2 2"/><line x1="546" y1="374.8" x2="862.5" y2="374.8" stroke="#8a8a8a" stroke-width="1" stroke-dasharray="2 2"/><line x1="566.3" y1="267" x2="566.3" y2="396.8" stroke="#8a8a8a" stroke-width="1" stroke-dasharray="2 2"/><line x1="587.05" y1="267" x2="587.05" y2="396.8" stroke="#8a8a8a" stroke-width="1" stroke-dasharray="2 2"/><line x1="607.8" y1="267" x2="607.8" y2="396.8" stroke="#8a8a8a" stroke-width="1" stroke-dasharray="2 2"/><line x1="628.55" y1="267" x2="628.55" y2="396.8" stroke="#8a8a8a" stroke-width="1" stroke-dasharray="2 2"/><line x1="649.3" y1="267" x2="649.3" y2="396.8" stroke="#8a8a8a" stroke-width="1" stroke-dasharray="2 2"/><line x1="670.05" y1="267" x2="670.05" y2="396.8" stroke="#8a8a8a" stroke-width="1" stroke-dasharray="2 2"/><line x1="690.8" y1="267" x2="690.8" y2="396.8" stroke="#8a8a8a" stroke-width="1" stroke-dasharray="2 2"/><line x1="711.55" y1="267" x2="711.55" y2="396.8" stroke="#8a8a8a" stroke-width="1" stroke-dasharray="2 2"/><line x1="732.3" y1="267" x2="732.3" y2="396.8" stroke="#8a8a8a" stroke-width="1" stroke-dasharray="2 2"/><line x1="753.05" y1="267" x2="753.05" y2="396.8" stroke="#8a8a8a" stroke-width="1" stroke-dasharray="2 2"/><line x1="773.8" y1="267" x2="773.8" y2="396.8" stroke="#8a8a8a" stroke-width="1" stroke-dasharray="2 2"/><line x1="794.55" y1="267" x2="794.55" y2="396.8" stroke="#8a8a8a" stroke-width="1" stroke-dasharray="2 2"/><line x1="815.3" y1="267" x2="815.3" y2="396.8" stroke="#8a8a8a" stroke-width="1" stroke-dasharray="2 2"/><line x1="836.05" y1="267" x2="836.05" y2="396.8" stroke="#8a8a8a" stroke-width="1" stroke-dasharray="2 2"/><line x1="856.8" y1="267" x2="856.8" y2="396.8" stroke="#8a8a8a" stroke-width="1" stroke-dasharray="2 2"/><line x1="546" y1="335.2" x2="862.5" y2="335.2" stroke="#5a6a7e" stroke-width="1.1"/><path d="M546.3 356.0 L546.6 351.4 L547.0 358.0 L547.3 358.1 L547.7 351.9 L548.0 356.1 L548.3 353.2 L548.7 357.5 L549.0 354.6 L549.4 352.4 L549.7 353.7 L550.0 349.1 L550.4 351.5 L550.7 353.8 L551.1 353.1 L551.4 354.3 L551.7 348.6 L552.1 353.2 L552.4 355.7 L552.8 357.8 L553.1 348.4 L553.4 353.2 L553.8 360.5 L554.1 356.2 L554.5 358.0 L554.8 357.3 L555.1 356.0 L555.5 352.8 L555.8 353.5 L556.2 353.3 L556.5 352.4 L556.8 350.0 L557.2 345.0 L557.5 348.6 L557.9 349.1 L558.2 347.8 L558.5 353.5 L558.9 352.1 L559.2 351.0 L559.6 355.3 L559.9 357.8 L560.2 354.8 L560.6 363.8 L560.9 369.3 L561.3 373.4 L561.6 377.6 L561.9 383.2 L562.3 388.7 L562.6 384.2 L563.0 375.6 L563.3 376.1 L563.6 361.8 L564.0 364.8 L564.3 357.8 L564.7 360.6 L565.0 356.6 L565.3 359.2 L565.7 354.3 L566.0 359.1 L566.4 355.4 L566.7 352.9 L567.0 353.6 L567.4 356.0 L567.7 345.0 L568.1 355.1 L568.4 345.7 L568.7 345.1 L569.1 347.3 L569.4 337.8 L569.8 335.4 L570.1 338.0 L570.4 338.7 L570.8 336.8 L571.1 335.5 L571.5 332.7 L571.8 338.9 L572.1 330.5 L572.5 334.2 L572.8 325.5 L573.2 324.7 L573.5 325.9 L573.8 328.4 L574.2 319.7 L574.5 323.3 L574.9 323.0 L575.2 324.8 L575.5 322.3 L575.9 321.6 L576.2 323.6 L576.6 323.8 L576.9 321.6 L577.2 322.8 L577.6 319.3 L577.9 321.9 L578.3 317.8 L578.6 323.7 L578.9 316.0 L579.3 313.7 L579.6 323.8 L580.0 315.4 L580.3 318.1 L580.6 315.9 L581.0 323.7 L581.3 322.6 L581.7 312.7 L582.0 316.6 L582.3 317.2 L582.7 315.7 L583.0 312.9 L583.4 314.7 L583.7 314.4 L584.0 315.4 L584.4 317.0 L584.7 315.7 L585.1 312.6 L585.4 316.1 L585.7 318.0 L586.1 308.9 L586.4 311.0 L586.8 311.2 L587.1 320.1 L587.4 307.1 L587.8 311.8 L588.1 312.0 L588.5 308.6 L588.8 310.9 L589.1 310.3 L589.5 319.7 L589.8 311.0 L590.2 313.1 L590.5 313.5 L590.8 312.5 L591.2 309.6 L591.5 306.4 L591.9 310.5 L592.2 312.3 L592.5 306.8 L592.9 311.4 L593.2 312.0 L593.6 309.0 L593.9 309.6 L594.2 311.7 L594.6 309.9 L594.9 309.4 L595.3 307.4 L595.6 308.7 L595.9 304.3 L596.3 309.7 L596.6 304.9 L597.0 303.6 L597.3 309.3 L597.6 307.5 L598.0 305.6 L598.3 308.0 L598.7 304.0 L599.0 306.0 L599.3 300.8 L599.7 303.1 L600.0 304.6 L600.4 311.7 L600.7 303.8 L601.0 301.1 L601.4 302.4 L601.7 305.4 L602.1 302.2 L602.4 300.5 L602.7 302.1 L603.1 303.7 L603.4 303.5 L603.8 303.1 L604.1 298.3 L604.4 306.2 L604.8 303.8 L605.1 305.3 L605.5 296.8 L605.8 298.1 L606.1 299.3 L606.5 295.9 L606.8 294.9 L607.2 299.1 L607.5 301.1 L607.8 300.2 L608.2 299.2 L608.5 302.9 L608.9 298.9 L609.2 301.4 L609.5 301.0 L609.9 300.1 L610.2 299.0 L610.6 304.8 L610.9 300.0 L611.2 294.2 L611.6 301.6 L611.9 299.1 L612.3 303.5 L612.6 300.4 L612.9 303.1 L613.3 301.0 L613.6 299.7 L614.0 300.7 L614.3 302.2 L614.6 294.7 L615.0 298.7 L615.3 295.5 L615.7 296.1 L616.0 295.8 L616.3 299.2 L616.7 297.9 L617.0 297.4 L617.4 299.6 L617.7 297.8 L618.0 295.7 L618.4 299.7 L618.7 295.1 L619.1 296.9 L619.4 296.1 L619.7 293.8 L620.1 298.3 L620.4 291.5 L620.8 293.1 L621.1 299.6 L621.4 298.2 L621.8 299.7 L622.1 297.3 L622.5 294.7 L622.8 297.3 L623.1 298.2 L623.5 298.4 L623.8 292.0 L624.2 298.4 L624.5 298.1 L624.8 292.9 L625.2 294.9 L625.5 297.8 L625.9 292.6 L626.2 293.9 L626.5 293.3 L626.9 291.7 L627.2 295.7 L627.6 297.5 L627.9 293.7 L628.2 295.6 L628.6 290.6 L628.9 292.7 L629.3 288.8 L629.6 294.0 L629.9 291.3 L630.3 294.3 L630.6 296.4 L631.0 293.1 L631.3 291.4 L631.6 295.8 L632.0 288.2 L632.3 291.4 L632.7 290.8 L633.0 295.3 L633.3 290.8 L633.7 292.6 L634.0 290.4 L634.4 288.7 L634.7 292.3 L635.0 289.3 L635.4 289.6 L635.7 291.5 L636.1 297.1 L636.4 291.5 L636.7 286.7 L637.1 292.8 L637.4 290.4 L637.8 290.7 L638.1 289.0 L638.4 295.2 L638.8 286.7 L639.1 287.3 L639.5 287.0 L639.8 288.5 L640.1 283.0 L640.5 286.0 L640.8 288.7 L641.2 285.8 L641.5 285.8 L641.8 285.5 L642.2 286.8 L642.5 286.8 L642.9 292.5 L643.2 285.7 L643.5 289.7 L643.9 285.8 L644.2 287.0 L644.6 285.9 L644.9 286.4 L645.2 290.5 L645.6 286.0 L645.9 291.4 L646.3 290.3 L646.6 291.3 L646.9 287.0 L647.3 290.8 L647.6 286.9 L648.0 287.3 L648.3 288.0 L648.6 286.4 L649.0 290.6 L649.3 288.3 L649.7 287.8 L650.0 289.8 L650.3 287.7 L650.7 288.6 L651.0 288.5 L651.4 286.4 L651.7 289.2 L652.0 291.4 L652.4 289.9 L652.7 286.1 L653.1 293.5 L653.4 290.0 L653.7 287.4 L654.1 285.7 L654.4 287.5 L654.8 287.3 L655.1 283.0 L655.4 284.9 L655.8 285.7 L656.1 281.4 L656.5 285.3 L656.8 286.0 L657.1 281.2 L657.5 286.4 L657.8 279.1 L658.2 281.9 L658.5 283.0 L658.8 280.5 L659.2 285.7 L659.5 282.5 L659.9 283.2 L660.2 281.6 L660.5 281.3 L660.9 281.7 L661.2 283.4 L661.6 285.6 L661.9 281.8 L662.2 285.5 L662.6 282.2 L662.9 282.3 L663.3 283.3 L663.6 282.8 L663.9 282.1 L664.3 284.3 L664.6 281.4 L665.0 284.1 L665.3 282.8 L665.6 281.0 L666.0 278.2 L666.3 280.6 L666.7 277.6 L667.0 282.1 L667.3 282.8 L667.7 279.4 L668.0 275.8 L668.4 280.2 L668.7 277.6 L669.0 274.1 L669.4 281.0 L669.7 277.0 L670.1 275.6 L670.4 272.5 L670.7 277.4 L671.1 282.4 L671.4 277.8 L671.8 280.1 L672.1 275.7 L672.4 277.0 L672.8 272.4 L673.1 272.9 L673.5 277.2 L673.8 272.2 L674.1 277.4 L674.5 272.3 L674.8 275.3 L675.2 278.7 L675.5 273.8 L675.8 273.3 L676.2 272.5 L676.5 278.5 L676.9 277.1 L677.2 279.4 L677.5 279.4 L677.9 280.0 L678.2 281.6 L678.6 277.0 L678.9 277.4 L679.2 278.5 L679.6 279.1 L679.9 274.2 L680.3 273.2 L680.6 277.4 L680.9 277.5 L681.3 276.5 L681.6 277.5 L682.0 277.2 L682.3 281.9 L682.6 274.5 L683.0 278.8 L683.3 279.7 L683.7 282.2 L684.0 283.9 L684.3 284.9 L684.7 277.8 L685.0 284.4 L685.4 283.1 L685.7 278.4 L686.0 278.2 L686.4 282.7 L686.7 287.6 L687.1 276.9 L687.4 279.5 L687.7 279.0 L688.1 271.8 L688.4 280.5 L688.8 277.7 L689.1 280.5 L689.4 279.9 L689.8 286.0 L690.1 282.8 L690.5 284.4 L690.8 279.3 L691.1 282.0 L691.5 280.3 L691.8 282.4 L692.2 283.0 L692.5 279.2 L692.8 281.8 L693.2 282.2 L693.5 282.9 L693.9 280.0 L694.2 279.8 L694.5 281.6 L694.9 281.6 L695.2 276.4 L695.6 281.8 L695.9 281.8 L696.2 282.0 L696.6 286.0 L696.9 280.1 L697.3 280.4 L697.6 273.6 L697.9 278.7 L698.3 280.9 L698.6 274.2 L699.0 278.9 L699.3 276.5 L699.6 281.2 L700.0 284.3 L700.3 281.0 L700.7 279.3 L701.0 277.9 L701.3 279.1 L701.7 278.6 L702.0 279.2 L702.4 280.7 L702.7 283.5 L703.0 285.7 L703.4 287.9 L703.7 284.6 L704.1 288.2 L704.4 288.7 L704.7 291.0 L705.1 287.7 L705.4 283.1 L705.8 287.5 L706.1 286.2 L706.4 289.2 L706.8 283.2 L707.1 291.8 L707.5 283.1 L707.8 284.7 L708.1 283.5 L708.5 283.4 L708.8 280.5 L709.2 282.0 L709.5 281.6 L709.8 283.4 L710.2 285.2 L710.5 284.7 L710.9 283.1 L711.2 283.0 L711.5 291.4 L711.9 293.2 L712.2 294.4 L712.6 287.3 L712.9 296.3 L713.2 292.9 L713.6 296.4 L713.9 290.9 L714.3 289.0 L714.6 291.9 L714.9 291.6 L715.3 297.8 L715.6 289.8 L716.0 288.5 L716.3 285.3 L716.6 288.6 L717.0 286.1 L717.3 282.5 L717.7 283.6 L718.0 281.3 L718.3 282.3 L718.7 279.4 L719.0 280.6 L719.4 286.7 L719.7 285.2 L720.0 285.2 L720.4 286.1 L720.7 286.9 L721.1 289.4 L721.4 284.5 L721.7 287.5 L722.1 289.0 L722.4 287.8 L722.8 293.9 L723.1 291.5 L723.4 288.4 L723.8 287.4 L724.1 288.3 L724.5 289.8 L724.8 292.3 L725.1 290.2 L725.5 290.7 L725.8 291.7 L726.2 291.0 L726.5 289.9 L726.8 290.3 L727.2 290.3 L727.5 286.8 L727.9 287.7 L728.2 287.7 L728.5 289.0 L728.9 294.9 L729.2 292.4 L729.6 293.5 L729.9 289.2 L730.2 294.8 L730.6 294.3 L730.9 299.7 L731.3 298.6 L731.6 300.5 L731.9 297.9 L732.3 298.4 L732.6 303.7 L733.0 298.7 L733.3 300.6 L733.6 300.5 L734.0 301.7 L734.3 304.2 L734.7 301.9 L735.0 306.5 L735.3 309.0 L735.7 306.1 L736.0 305.5 L736.4 312.3 L736.7 307.8 L737.0 318.0 L737.4 304.8 L737.7 316.5 L738.1 306.1 L738.4 308.2 L738.7 307.9 L739.1 313.1 L739.4 309.4 L739.8 310.9 L740.1 314.2 L740.4 317.3 L740.8 312.1 L741.1 313.5 L741.5 313.9 L741.8 310.7 L742.1 314.2 L742.5 317.9 L742.8 316.8 L743.2 322.5 L743.5 314.1 L743.8 317.1 L744.2 314.4 L744.5 311.3 L744.9 316.1 L745.2 313.4 L745.5 310.4 L745.9 308.2 L746.2 306.2 L746.6 307.0 L746.9 309.7 L747.2 306.5 L747.6 307.2 L747.9 304.3 L748.3 306.3 L748.6 307.2 L748.9 307.3 L749.3 299.1 L749.6 304.5 L750.0 308.9 L750.3 306.2 L750.6 303.9 L751.0 300.0 L751.3 305.1 L751.7 306.2 L752.0 303.9 L752.3 297.1 L752.7 303.5 L753.0 307.5 L753.4 308.1 L753.7 302.3 L754.0 308.3 L754.4 308.5 L754.7 307.8 L755.1 308.7 L755.4 309.9 L755.7 311.2 L756.1 318.1 L756.4 313.9 L756.8 310.9 L757.1 317.8 L757.4 322.2 L757.8 316.8 L758.1 317.1 L758.5 315.8 L758.8 322.1 L759.1 315.0 L759.5 323.5 L759.8 319.9 L760.2 324.3 L760.5 319.1 L760.8 327.1 L761.2 329.1 L761.5 325.9 L761.9 334.2 L762.2 333.9 L762.5 341.5 L762.9 342.3 L763.2 343.7 L763.6 339.4 L763.9 340.6 L764.2 340.4 L764.6 328.8 L764.9 331.3 L765.3 328.4 L765.6 326.0 L765.9 327.5 L766.3 326.9 L766.6 322.1 L767.0 323.7 L767.3 324.0 L767.6 327.0 L768.0 320.9 L768.3 327.9 L768.7 325.3 L769.0 333.2 L769.3 329.4 L769.7 326.9 L770.0 329.9 L770.4 328.5 L770.7 326.1 L771.0 328.7 L771.4 333.0 L771.7 329.1 L772.1 328.5 L772.4 329.3 L772.7 331.2 L773.1 331.4 L773.4 331.0 L773.8 333.9 L774.1 328.2 L774.4 335.0 L774.8 332.7 L775.1 333.3 L775.5 336.1 L775.8 336.9 L776.1 334.6 L776.5 336.0 L776.8 334.1 L777.2 337.1 L777.5 336.7 L777.8 336.6 L778.2 332.2 L778.5 334.3 L778.9 334.4 L779.2 335.8 L779.5 342.8 L779.9 340.5 L780.2 337.8 L780.6 335.8 L780.9 338.9 L781.2 334.6 L781.6 339.6 L781.9 337.6 L782.3 340.3 L782.6 338.9 L782.9 336.5 L783.3 332.8 L783.6 336.5 L784.0 338.5 L784.3 336.4 L784.6 333.9 L785.0 333.5 L785.3 337.2 L785.7 331.8 L786.0 327.5 L786.3 329.4 L786.7 332.2 L787.0 327.6 L787.4 333.6 L787.7 327.7 L788.0 326.6 L788.4 330.1 L788.7 327.7 L789.1 326.8 L789.4 324.4 L789.7 323.0 L790.1 327.5 L790.4 329.4 L790.8 323.8 L791.1 318.8 L791.4 326.3 L791.8 320.8 L792.1 321.9 L792.5 324.7 L792.8 325.8 L793.1 323.0 L793.5 323.9 L793.8 322.1 L794.2 321.2 L794.5 324.6 L794.8 322.8 L795.2 324.6 L795.5 320.4 L795.9 324.1 L796.2 321.7 L796.5 323.6 L796.9 327.2 L797.2 325.4 L797.6 324.4 L797.9 325.9 L798.2 327.5 L798.6 327.0 L798.9 325.2 L799.3 325.0 L799.6 327.3 L799.9 327.8 L800.3 326.9 L800.6 330.2 L801.0 329.9 L801.3 328.9 L801.6 328.7 L802.0 328.6 L802.3 323.1 L802.7 325.4 L803.0 326.3 L803.3 321.2 L803.7 322.5 L804.0 323.2 L804.4 319.3 L804.7 321.2 L805.0 322.3 L805.4 325.6 L805.7 330.4 L806.1 322.8 L806.4 317.0 L806.7 329.2 L807.1 327.8 L807.4 327.5 L807.8 329.6 L808.1 329.4 L808.4 325.5 L808.8 324.8 L809.1 331.9 L809.5 330.2 L809.8 331.0 L810.1 331.3 L810.5 332.5 L810.8 332.1 L811.2 331.6 L811.5 334.3 L811.8 331.5 L812.2 330.6 L812.5 325.6 L812.9 334.1 L813.2 330.9 L813.5 326.8 L813.9 329.8 L814.2 330.8 L814.6 331.6 L814.9 328.1 L815.2 327.8 L815.6 330.9 L815.9 333.3 L816.3 333.3 L816.6 332.0 L816.9 334.1 L817.3 334.2 L817.6 332.4 L818.0 334.7 L818.3 336.1 L818.6 340.1 L819.0 335.9 L819.3 337.2 L819.7 339.0 L820.0 341.5 L820.3 343.0 L820.7 342.7 L821.0 340.3 L821.4 343.4 L821.7 340.5 L822.0 344.2 L822.4 341.3 L822.7 340.9 L823.1 331.9 L823.4 335.4 L823.7 333.6 L824.1 337.8 L824.4 334.2 L824.8 333.0 L825.1 331.1 L825.4 330.2 L825.8 329.3 L826.1 320.3 L826.5 324.2 L826.8 326.0 L827.1 331.9 L827.5 331.4 L827.8 329.6 L828.2 333.4 L828.5 332.5 L828.8 324.3 L829.2 330.9 L829.5 328.7 L829.9 329.8 L830.2 329.4 L830.5 329.3 L830.9 327.0 L831.2 334.2 L831.6 330.5 L831.9 330.8 L832.2 330.4 L832.6 330.5 L832.9 333.2 L833.3 331.0 L833.6 328.5 L833.9 332.8 L834.3 334.4 L834.6 332.9 L835.0 341.4 L835.3 337.9 L835.6 336.6 L836.0 342.5 L836.3 346.4 L836.7 350.1 L837.0 354.0 L837.3 355.6 L837.7 359.2 L838.0 356.6 L838.4 351.8 L838.7 353.6 L839.0 353.5 L839.4 359.8 L839.7 355.6 L840.1 351.3 L840.4 352.9 L840.7 350.5 L841.1 351.3 L841.4 353.2 L841.8 351.2 L842.1 353.2 L842.4 353.7 L842.8 350.1 L843.1 350.8 L843.5 352.6 L843.8 352.9 L844.1 351.5 L844.5 351.5 L844.8 352.3 L845.2 348.7 L845.5 347.5 L845.8 350.2 L846.2 350.9 L846.5 353.6 L846.9 353.4 L847.2 349.9 L847.5 346.4 L847.9 351.7 L848.2 352.4 L848.6 350.7 L848.9 351.5 L849.2 345.2 L849.6 349.6 L849.9 346.6 L850.3 349.4 L850.6 348.7 L850.9 347.8 L851.3 350.3 L851.6 347.1 L852.0 347.4 L852.3 346.7 L852.6 345.2 L853.0 349.0 L853.3 345.8 L853.7 345.1 L854.0 346.7 L854.3 341.7 L854.7 345.6 L855.0 344.7 L855.4 343.0 L855.7 339.5 L856.0 342.7 L856.4 344.4 L856.7 342.4 L857.1 347.0 L857.4 343.1 L857.7 344.6 L858.1 342.8 L858.4 336.9 L858.8 338.7 L859.1 335.8 L859.4 337.7 L859.8 339.2 L860.1 340.4 L860.5 335.3 L860.8 340.8 L861.1 337.1 L861.5 334.6 L861.8 332.6" stroke="#33e633" stroke-width="1.4" fill="none" stroke-linejoin="round"/><rect x="546" y="267" width="316.5" height="129.8" fill="none" stroke="#c4c4c4" stroke-width="1"/><line x1="862.5" y1="288" x2="865.5" y2="288" stroke="#c4c4c4" stroke-width="1"/><line x1="862.5" y1="309.4" x2="865.5" y2="309.4" stroke="#c4c4c4" stroke-width="1"/><line x1="862.5" y1="331" x2="865.5" y2="331" stroke="#c4c4c4" stroke-width="1"/><line x1="862.5" y1="352.6" x2="865.5" y2="352.6" stroke="#c4c4c4" stroke-width="1"/><line x1="862.5" y1="374.8" x2="865.5" y2="374.8" stroke="#c4c4c4" stroke-width="1"/><line x1="546" y1="396.8" x2="546" y2="399.8" stroke="#c4c4c4" stroke-width="1"/><line x1="587" y1="396.8" x2="587" y2="399.8" stroke="#c4c4c4" stroke-width="1"/><line x1="628.5" y1="396.8" x2="628.5" y2="399.8" stroke="#c4c4c4" stroke-width="1"/><line x1="670" y1="396.8" x2="670" y2="399.8" stroke="#c4c4c4" stroke-width="1"/><line x1="711.5" y1="396.8" x2="711.5" y2="399.8" stroke="#c4c4c4" stroke-width="1"/><line x1="753" y1="396.8" x2="753" y2="399.8" stroke="#c4c4c4" stroke-width="1"/><line x1="794.5" y1="396.8" x2="794.5" y2="399.8" stroke="#c4c4c4" stroke-width="1"/><line x1="835.5" y1="396.8" x2="835.5" y2="399.8" stroke="#c4c4c4" stroke-width="1"/></svg>
<div class="t" style="left:866.20px;top:284.67px;font-size:7.0px;color:#e0e0e0;font-weight:normal;transform:scaleX(0.8617);-webkit-text-stroke:0.05px currentColor">110.00</div>
<div class="t" style="left:866.20px;top:306.07px;font-size:7.0px;color:#e0e0e0;font-weight:normal;transform:scaleX(0.8408);-webkit-text-stroke:0.05px currentColor">109.50</div>
<div class="t" style="left:866.20px;top:327.67px;font-size:7.0px;color:#e0e0e0;font-weight:normal;transform:scaleX(0.8408);-webkit-text-stroke:0.05px currentColor">109.00</div>
<div class="t" style="left:866.20px;top:349.27px;font-size:7.0px;color:#e0e0e0;font-weight:normal;transform:scaleX(0.8408);-webkit-text-stroke:0.05px currentColor">108.50</div>
<div class="t" style="left:866.20px;top:371.47px;font-size:7.0px;color:#e0e0e0;font-weight:normal;transform:scaleX(0.8408);-webkit-text-stroke:0.05px currentColor">108.00</div>
<div class="t" style="left:545.00px;top:400.27px;font-size:7.0px;color:#e8e8e8;font-weight:normal;transform:scaleX(0.8257);-webkit-text-stroke:0.05px currentColor">7 Jan 2020</div>
<div class="t" style="left:586.00px;top:400.27px;font-size:7.0px;color:#e8e8e8;font-weight:normal;transform:scaleX(0.8600);-webkit-text-stroke:0.05px currentColor">9 Jan 17:00</div>
<div class="t" style="left:627.50px;top:400.27px;font-size:7.0px;color:#e8e8e8;font-weight:normal;transform:scaleX(0.8479);-webkit-text-stroke:0.05px currentColor">14 Jan 09:00</div>
<div class="t" style="left:669.00px;top:400.27px;font-size:7.0px;color:#e8e8e8;font-weight:normal;transform:scaleX(0.8479);-webkit-text-stroke:0.05px currentColor">17 Jan 01:00</div>
<div class="t" style="left:710.50px;top:400.27px;font-size:7.0px;color:#e8e8e8;font-weight:normal;transform:scaleX(0.8479);-webkit-text-stroke:0.05px currentColor">21 Jan 17:00</div>
<div class="t" style="left:752.00px;top:400.27px;font-size:7.0px;color:#e8e8e8;font-weight:normal;transform:scaleX(0.8479);-webkit-text-stroke:0.05px currentColor">24 Jan 09:00</div>
<div class="t" style="left:793.50px;top:400.27px;font-size:7.0px;color:#e8e8e8;font-weight:normal;transform:scaleX(0.8479);-webkit-text-stroke:0.05px currentColor">29 Jan 01:00</div>
<div class="t" style="left:834.50px;top:400.27px;font-size:7.0px;color:#e8e8e8;font-weight:normal;transform:scaleX(0.8479);-webkit-text-stroke:0.05px currentColor">31 Jan 17:00</div>
<div style="left:864.0px;top:331.59999999999997px;width:22.5px;height:7px;background:#a9b9c9;"></div>
<div class="t" style="left:866.20px;top:331.87px;font-size:7.0px;color:#1a2a3a;font-weight:normal;transform:scaleX(0.8408);">108.90</div>
<svg style="left:548.5px;top:269.3px" width="21" height="8" viewBox="0 0 21 8"><rect x="0" y="0" width="9.3" height="7.5" fill="#f4f4ff"/><rect x="0" y="0" width="9.3" height="1.6" fill="#b8b8f0"/><rect x="1" y="2.2" width="3.4" height="4.6" fill="#f0a0a0"/><rect x="5" y="2.2" width="3.4" height="4.6" fill="#a8a8f0"/><rect x="10.7" y="0.5" width="5" height="7" fill="#3434d8"/><rect x="15.2" y="0.5" width="5" height="7" fill="#e03434"/><circle cx="15.3" cy="1.8" r="1.3" fill="#c8c8c8"/></svg>
<div class="t" style="left:572.40px;top:270.02px;font-size:7.3px;color:#e8e8e8;font-weight:normal;transform:scaleX(0.8835);">USDJPY,H1</div>
<div style="left:548.0px;top:279.5px;width:28px;height:13.5px;background:linear-gradient(#3030e0,#3030e0);"></div>
<div style="left:639.0px;top:279.5px;width:28.2px;height:13.5px;background:linear-gradient(#3030e0,#3030e0);"></div>
<div class="t" style="left:553.65px;top:282.77px;font-size:8.3px;color:#f8e0e0;font-weight:normal;transform:scaleX(0.7634);">SELL</div>
<div class="t" style="left:647.00px;top:282.77px;font-size:8.3px;color:#f8e0e0;font-weight:normal;transform:scaleX(0.7617);">BUY</div>
<div style="left:548.0px;top:293.0px;width:59.5px;height:22.5px;background:linear-gradient(#3030e0,#1616b4);"></div>
<div style="left:609.2px;top:293.0px;width:58px;height:22.5px;background:linear-gradient(#3030e0,#1616b4);"></div>
<div style="left:550.0px;top:293.3px;width:24.0px;height:1px;background:rgba(255,255,255,0.3);"></div>
<div style="left:641.0px;top:293.3px;width:24.0px;height:1px;background:rgba(255,255,255,0.3);"></div>
<div style="left:576.0px;top:278.7px;width:63.6px;height:14.3px;background:#ffffff;border:1px solid #111;border-bottom-width:1.8px;border-left-width:1.5px;border-right-width:1.5px"></div>
<div style="left:577.5px;top:279.8px;width:11.3px;height:11.5px;background:#ebebeb;"></div>
<div style="left:627.0px;top:279.8px;width:11.3px;height:11.5px;background:#ebebeb;"></div>
<svg style="left:581.0px;top:284.7px" width="4" height="2.5" viewBox="0 0 4 2.5"><path d="M0 0H4L2 2.5Z" fill="#222"/></svg>
<svg style="left:630.7px;top:284.3px" width="4" height="2.5" viewBox="0 0 4 2.5"><path d="M0 2.5H4L2 0Z" fill="#222"/></svg>
<div class="t" style="left:609.00px;top:282.59px;font-size:8.4px;color:#333;font-weight:normal;transform:scaleX(0.8258);">3.00</div>
<div class="t" style="left:562.90px;top:305.21px;font-size:9.2px;color:#ffffff;font-weight:bold;transform:scaleX(0.8991);">108</div>
<div class="t" style="left:578.70px;top:294.80px;font-size:21.5px;color:#ffffff;font-weight:normal;transform:scaleX(0.8740);-webkit-text-stroke:0">90</div>
<div class="t" style="left:623.00px;top:305.21px;font-size:9.2px;color:#ffffff;font-weight:bold;transform:scaleX(0.8991);">108</div>
<div class="t" style="left:638.90px;top:294.80px;font-size:21.5px;color:#ffffff;font-weight:normal;transform:scaleX(0.8740);-webkit-text-stroke:0">93</div>
<div style="left:180px;top:415px;width:720px;height:18px;background:#f0f0f0;"></div>
<div style="left:180px;top:415.5px;width:718px;height:1px;background:#6a6a6a;"></div>
<div style="left:182px;top:415.5px;width:54.6px;height:14px;background:#ffffff;border:1px solid #5a5a5a;border-top:none;border-bottom-width:1.5px"></div>
<div class="t" style="left:189.50px;top:419.92px;font-size:8.6px;color:#222;font-weight:normal;transform:scaleX(0.8048);">GBPUSD,H1</div>
<div class="t" style="left:244.00px;top:419.92px;font-size:8.6px;color:#777;font-weight:normal;transform:scaleX(0.7847);">EURUSD,H1</div>
<div style="left:291.4px;top:419px;width:1px;height:9px;background:#8a8a8a;"></div>
<div class="t" style="left:298.00px;top:419.92px;font-size:8.6px;color:#777;font-weight:normal;transform:scaleX(0.8433);">USDCHF,H1</div>
<div style="left:346px;top:419px;width:1px;height:9px;background:#8a8a8a;"></div>
<div class="t" style="left:353.80px;top:419.92px;font-size:8.6px;color:#777;font-weight:normal;transform:scaleX(0.7986);">USDJPY,H1</div>
<svg style="left:873px;top:421px" width="5" height="7" viewBox="0 0 5 7"><path d="M4.5 0.5L0.8 3.5L4.5 6.5Z" fill="#9a9a9a"/></svg>
<svg style="left:887px;top:421px" width="5" height="7" viewBox="0 0 5 7"><path d="M0.5 0.5L4.2 3.5L0.5 6.5Z" fill="#9a9a9a"/></svg>
<div style="left:0px;top:431.5px;width:900px;height:1.5px;background:#d4d4d4;"></div>
<div style="left:897.5px;top:73px;width:1px;height:359px;background:#c0c0c0;"></div>
<div style="left:1px;top:433px;width:10px;height:108px;background:#dbe5f1;"></div>
<svg style="left:2.5px;top:433.5px" width="6" height="6" viewBox="0 0 6 6"><path d="M0.8 0.8L5.2 5.2M5.2 0.8L0.8 5.2" stroke="#222" stroke-width="1.2"/></svg>
<div class="t" style="left:1.5px;top:540px;font-size:8.6px;color:#2a3a4a;transform-origin:0 0;transform:rotate(-90deg) scaleX(0.95);">Toolbox</div>
<div style="left:11px;top:433.3px;width:886px;height:92px;background:#ffffff;"></div>
<div class="t" style="left:15.00px;top:437.42px;font-size:8.6px;color:#333;font-weight:normal;transform:scaleX(0.8887);">Time</div>
<div style="left:62.7px;top:434px;width:1px;height:14px;background:#e6e6e6;"></div>
<div class="t" style="left:66.70px;top:437.42px;font-size:8.6px;color:#333;font-weight:normal;transform:scaleX(0.8600);">Currency</div>
<div style="left:100.7px;top:434px;width:1px;height:14px;background:#e6e6e6;"></div>
<div class="t" style="left:105.00px;top:437.42px;font-size:8.6px;color:#333;font-weight:normal;transform:scaleX(0.8640);">Event</div>
<div style="left:526px;top:434px;width:1px;height:14px;background:#e6e6e6;"></div>
<div style="left:569.2px;top:434px;width:1px;height:14px;background:#e6e6e6;"></div>
<div style="left:624.4px;top:434px;width:1px;height:14px;background:#e6e6e6;"></div>
<div style="left:711px;top:434px;width:1px;height:14px;background:#e6e6e6;"></div>
<div style="left:797.8px;top:434px;width:1px;height:14px;background:#e6e6e6;"></div>
<div class="t" style="left:530.20px;top:437.42px;font-size:8.6px;color:#333;font-weight:normal;transform:scaleX(0.9157);">Priority</div>
<div class="t" style="left:600.00px;top:437.42px;font-size:8.6px;color:#333;font-weight:normal;transform:scaleX(0.8046);">Period</div>
<div class="t" style="left:686.20px;top:437.42px;font-size:8.6px;color:#333;font-weight:normal;transform:scaleX(0.8577);">Actual</div>
<div class="t" style="left:766.20px;top:437.42px;font-size:8.6px;color:#333;font-weight:normal;transform:scaleX(0.8370);">Forecast</div>
<div class="t" style="left:854.70px;top:437.42px;font-size:8.6px;color:#333;font-weight:normal;transform:scaleX(0.8219);">Previous</div>
<div class="t" style="left:13.30px;top:450.72px;font-size:8.6px;color:#1a1a1a;font-weight:bold;transform:scaleX(0.8611);">Monday, 3 February</div>
<div style="left:11px;top:461.7px;width:874.5px;height:12.85px;background:#e6f8fe;"></div>
<div style="left:11px;top:474.0px;width:874.5px;height:0.6px;background:#d6e4ea;"></div>
<div style="left:62.7px;top:461.7px;width:1px;height:12.850000000000023px;background:#d2e2e8;"></div>
<div style="left:100.7px;top:461.7px;width:1px;height:12.850000000000023px;background:#d2e2e8;"></div>
<div style="left:526px;top:461.7px;width:1px;height:12.850000000000023px;background:#d2e2e8;"></div>
<div style="left:569.2px;top:461.7px;width:1px;height:12.850000000000023px;background:#d2e2e8;"></div>
<div style="left:624.4px;top:461.7px;width:1px;height:12.850000000000023px;background:#d2e2e8;"></div>
<div style="left:711px;top:461.7px;width:1px;height:12.850000000000023px;background:#d2e2e8;"></div>
<div style="left:797.8px;top:461.7px;width:1px;height:12.850000000000023px;background:#d2e2e8;"></div>
<svg style="left:12.7px;top:464.3px" width="10" height="7" viewBox="0 0 10 7"><rect width="10" height="7" fill="#2a3a9a"/><rect x="0.5" y="0.5" width="4" height="3" fill="#cc3355"/><path d="M0.5 2H4.5M2.5 0.5V3.5" stroke="#fff" stroke-width="0.7"/><circle cx="7.5" cy="2" r="0.7" fill="#fff"/><circle cx="6.5" cy="4.5" r="0.7" fill="#fff"/><circle cx="8.3" cy="5" r="0.6" fill="#fff"/><circle cx="3" cy="5.5" r="0.6" fill="#fff"/></svg>
<div class="t" style="left:25.00px;top:464.12px;font-size:8.6px;color:#333;font-weight:normal;transform:scaleX(0.8039);">00:00</div>
<div class="t" style="left:65.00px;top:464.12px;font-size:8.6px;color:#333;font-weight:normal;transform:scaleX(0.8261);">AUD</div>
<div class="t" style="left:103.30px;top:464.12px;font-size:8.6px;color:#1a1a1a;font-weight:normal;transform:scaleX(0.9130);">Commonwealth Bank Manufacturing PMI</div>
<div class="t" style="left:609.39px;top:464.12px;font-size:8.6px;color:#333;font-weight:normal;transform:scaleX(0.8300);">Jan</div>
<div class="t" style="left:694.11px;top:464.12px;font-size:8.6px;color:#333;font-weight:normal;transform:scaleX(0.8300);">49.6</div>
<div class="t" style="left:781.71px;top:464.12px;font-size:8.6px;color:#333;font-weight:normal;transform:scaleX(0.8300);">49.1</div>
<div class="t" style="left:869.11px;top:464.12px;font-size:8.6px;color:#333;font-weight:normal;transform:scaleX(0.8300);">49.1</div>
<svg style="left:543.8px;top:464.7px" width="8" height="7" viewBox="0 0 8 7"><path d="M0.5 2.8Q4 -0.3 7.5 2.8M2 4.3Q4 2.6 6 4.3" stroke="#1f6fd8" stroke-width="1.2" fill="none"/><circle cx="4" cy="6" r="1" fill="#1f6fd8"/></svg>
<div style="left:11px;top:474.55px;width:874.5px;height:12.85px;background:#e6f8fe;"></div>
<div style="left:11px;top:486.85px;width:874.5px;height:0.6px;background:#d6e4ea;"></div>
<div style="left:62.7px;top:474.55px;width:1px;height:12.850000000000023px;background:#d2e2e8;"></div>
<div style="left:100.7px;top:474.55px;width:1px;height:12.850000000000023px;background:#d2e2e8;"></div>
<div style="left:526px;top:474.55px;width:1px;height:12.850000000000023px;background:#d2e2e8;"></div>
<div style="left:569.2px;top:474.55px;width:1px;height:12.850000000000023px;background:#d2e2e8;"></div>
<div style="left:624.4px;top:474.55px;width:1px;height:12.850000000000023px;background:#d2e2e8;"></div>
<div style="left:711px;top:474.55px;width:1px;height:12.850000000000023px;background:#d2e2e8;"></div>
<div style="left:797.8px;top:474.55px;width:1px;height:12.850000000000023px;background:#d2e2e8;"></div>
<svg style="left:12.7px;top:477.15000000000003px" width="10" height="7" viewBox="0 0 10 7"><rect width="10" height="7" fill="#2a3a9a"/><rect x="0.5" y="0.5" width="4" height="3" fill="#cc3355"/><path d="M0.5 2H4.5M2.5 0.5V3.5" stroke="#fff" stroke-width="0.7"/><circle cx="7.5" cy="2" r="0.7" fill="#fff"/><circle cx="6.5" cy="4.5" r="0.7" fill="#fff"/><circle cx="8.3" cy="5" r="0.6" fill="#fff"/><circle cx="3" cy="5.5" r="0.6" fill="#fff"/></svg>
<div class="t" style="left:25.00px;top:476.97px;font-size:8.6px;color:#333;font-weight:normal;transform:scaleX(0.8039);">02:30</div>
<div class="t" style="left:65.00px;top:476.97px;font-size:8.6px;color:#333;font-weight:normal;transform:scaleX(0.8261);">AUD</div>
<div class="t" style="left:103.30px;top:476.97px;font-size:8.6px;color:#1a1a1a;font-weight:normal;transform:scaleX(0.9348);">Building Approvals m/m</div>
<div class="t" style="left:608.21px;top:476.97px;font-size:8.6px;color:#333;font-weight:normal;transform:scaleX(0.8300);">Dec</div>
<div class="t" style="left:689.35px;top:476.97px;font-size:8.6px;color:#333;font-weight:normal;transform:scaleX(0.8300);">-0.2%</div>
<div class="t" style="left:776.95px;top:476.97px;font-size:8.6px;color:#333;font-weight:normal;transform:scaleX(0.8300);">-4.9%</div>
<div class="t" style="left:862.76px;top:476.97px;font-size:8.6px;color:#333;font-weight:normal;transform:scaleX(0.8300);">10.9%</div>
<div style="left:861.261539375px;top:485.35px;width:22.238460625px;height:0.8px;background:#7f8daa"></div>
<svg style="left:543.8px;top:477.55px" width="8" height="7" viewBox="0 0 8 7"><path d="M0.5 2.8Q4 -0.3 7.5 2.8M2 4.3Q4 2.6 6 4.3" stroke="#1f6fd8" stroke-width="1.2" fill="none"/><circle cx="4" cy="6" r="1" fill="#1f6fd8"/></svg>
<div style="left:11px;top:487.40000000000003px;width:874.5px;height:12.85px;background:#ffffff;"></div>
<div style="left:11px;top:499.70000000000005px;width:874.5px;height:0.6px;background:#d6e4ea;"></div>
<div style="left:62.7px;top:487.40000000000003px;width:1px;height:12.850000000000023px;background:#d2e2e8;"></div>
<div style="left:100.7px;top:487.40000000000003px;width:1px;height:12.850000000000023px;background:#d2e2e8;"></div>
<div style="left:526px;top:487.40000000000003px;width:1px;height:12.850000000000023px;background:#d2e2e8;"></div>
<div style="left:569.2px;top:487.40000000000003px;width:1px;height:12.850000000000023px;background:#d2e2e8;"></div>
<div style="left:624.4px;top:487.40000000000003px;width:1px;height:12.850000000000023px;background:#d2e2e8;"></div>
<div style="left:711px;top:487.40000000000003px;width:1px;height:12.850000000000023px;background:#d2e2e8;"></div>
<div style="left:797.8px;top:487.40000000000003px;width:1px;height:12.850000000000023px;background:#d2e2e8;"></div>
<svg style="left:12.7px;top:490.00000000000006px" width="10" height="7" viewBox="0 0 10 7"><rect width="10" height="7" fill="#2a3a9a"/><rect x="0.5" y="0.5" width="4" height="3" fill="#cc3355"/><path d="M0.5 2H4.5M2.5 0.5V3.5" stroke="#fff" stroke-width="0.7"/><circle cx="7.5" cy="2" r="0.7" fill="#fff"/><circle cx="6.5" cy="4.5" r="0.7" fill="#fff"/><circle cx="8.3" cy="5" r="0.6" fill="#fff"/><circle cx="3" cy="5.5" r="0.6" fill="#fff"/></svg>
<div class="t" style="left:25.00px;top:489.82px;font-size:8.6px;color:#333;font-weight:normal;transform:scaleX(0.8039);">02:30</div>
<div class="t" style="left:65.00px;top:489.82px;font-size:8.6px;color:#333;font-weight:normal;transform:scaleX(0.8261);">AUD</div>
<div class="t" style="left:103.30px;top:489.82px;font-size:8.6px;color:#1a1a1a;font-weight:normal;transform:scaleX(0.9067);">Private House Approvals m/m</div>
<div class="t" style="left:608.21px;top:489.82px;font-size:8.6px;color:#333;font-weight:normal;transform:scaleX(0.8300);">Dec</div>
<div class="t" style="left:689.35px;top:489.82px;font-size:8.6px;color:#333;font-weight:normal;transform:scaleX(0.8300);">-0.1%</div>
<div class="t" style="left:866.73px;top:489.82px;font-size:8.6px;color:#333;font-weight:normal;transform:scaleX(0.8300);">6.0%</div>
<div style="left:865.2309365625px;top:498.20000000000005px;width:18.269063437499998px;height:0.8px;background:#7f8daa"></div>
<svg style="left:545.8px;top:492.70000000000005px" width="4" height="3" viewBox="0 0 4 3"><circle cx="2" cy="1.5" r="1.1" fill="#1f6fd8"/></svg>
<div style="left:11px;top:500.25000000000006px;width:874.5px;height:12.85px;background:#e6f8fe;"></div>
<div style="left:11px;top:512.5500000000001px;width:874.5px;height:0.6px;background:#d6e4ea;"></div>
<div style="left:62.7px;top:500.25000000000006px;width:1px;height:12.849999999999966px;background:#d2e2e8;"></div>
<div style="left:100.7px;top:500.25000000000006px;width:1px;height:12.849999999999966px;background:#d2e2e8;"></div>
<div style="left:526px;top:500.25000000000006px;width:1px;height:12.849999999999966px;background:#d2e2e8;"></div>
<div style="left:569.2px;top:500.25000000000006px;width:1px;height:12.849999999999966px;background:#d2e2e8;"></div>
<div style="left:624.4px;top:500.25000000000006px;width:1px;height:12.849999999999966px;background:#d2e2e8;"></div>
<div style="left:711px;top:500.25000000000006px;width:1px;height:12.849999999999966px;background:#d2e2e8;"></div>
<div style="left:797.8px;top:500.25000000000006px;width:1px;height:12.849999999999966px;background:#d2e2e8;"></div>
<svg style="left:12.7px;top:502.8500000000001px" width="10" height="7" viewBox="0 0 10 7"><rect width="10" height="7" fill="#2a3a9a"/><rect x="0.5" y="0.5" width="4" height="3" fill="#cc3355"/><path d="M0.5 2H4.5M2.5 0.5V3.5" stroke="#fff" stroke-width="0.7"/><circle cx="7.5" cy="2" r="0.7" fill="#fff"/><circle cx="6.5" cy="4.5" r="0.7" fill="#fff"/><circle cx="8.3" cy="5" r="0.6" fill="#fff"/><circle cx="3" cy="5.5" r="0.6" fill="#fff"/></svg>
<div class="t" style="left:25.00px;top:502.67px;font-size:8.6px;color:#333;font-weight:normal;transform:scaleX(0.8039);">02:30</div>
<div class="t" style="left:65.00px;top:502.67px;font-size:8.6px;color:#333;font-weight:normal;transform:scaleX(0.8261);">AUD</div>
<div class="t" style="left:103.30px;top:502.67px;font-size:8.6px;color:#1a1a1a;font-weight:normal;transform:scaleX(0.9029);">ANZ Job Advertisements m/m</div>
<div class="t" style="left:609.39px;top:502.67px;font-size:8.6px;color:#333;font-weight:normal;transform:scaleX(0.8300);">Jan</div>
<div class="t" style="left:691.73px;top:502.67px;font-size:8.6px;color:#333;font-weight:normal;transform:scaleX(0.8300);">3.8%</div>
<div class="t" style="left:779.33px;top:502.67px;font-size:8.6px;color:#333;font-weight:normal;transform:scaleX(0.8300);">3.7%</div>
<div class="t" style="left:864.35px;top:502.67px;font-size:8.6px;color:#333;font-weight:normal;transform:scaleX(0.8300);">-5.7%</div>
<div style="left:862.854205625px;top:511.05000000000007px;width:20.645794374999998px;height:0.8px;background:#7f8daa"></div>
<svg style="left:545.8px;top:505.55000000000007px" width="4" height="3" viewBox="0 0 4 3"><circle cx="2" cy="1.5" r="1.1" fill="#1f6fd8"/></svg>
<div style="left:11px;top:513.1px;width:874.5px;height:12.85px;background:#ffe6ea;"></div>
<div style="left:11px;top:525.4px;width:874.5px;height:0.6px;background:#ecc8cf;"></div>
<div style="left:62.7px;top:513.1px;width:1px;height:12.850000000000023px;background:#e8c8cc;"></div>
<div style="left:100.7px;top:513.1px;width:1px;height:12.850000000000023px;background:#e8c8cc;"></div>
<div style="left:526px;top:513.1px;width:1px;height:12.850000000000023px;background:#e8c8cc;"></div>
<div style="left:569.2px;top:513.1px;width:1px;height:12.850000000000023px;background:#e8c8cc;"></div>
<div style="left:624.4px;top:513.1px;width:1px;height:12.850000000000023px;background:#e8c8cc;"></div>
<div style="left:711px;top:513.1px;width:1px;height:12.850000000000023px;background:#e8c8cc;"></div>
<div style="left:797.8px;top:513.1px;width:1px;height:12.850000000000023px;background:#e8c8cc;"></div>
<svg style="left:12.7px;top:515.7px" width="10" height="7" viewBox="0 0 10 7"><circle cx="5" cy="3.5" r="1.9" fill="#e02020"/></svg>
<div class="t" style="left:25.00px;top:515.52px;font-size:8.6px;color:#333;font-weight:normal;transform:scaleX(0.8039);">02:30</div>
<div class="t" style="left:65.00px;top:515.52px;font-size:8.6px;color:#333;font-weight:normal;transform:scaleX(0.8876);">JPY</div>
<div class="t" style="left:103.30px;top:515.52px;font-size:8.6px;color:#1a1a1a;font-weight:normal;transform:scaleX(0.9258);">Markit Manufacturing PMI</div>
<div class="t" style="left:609.39px;top:515.52px;font-size:8.6px;color:#333;font-weight:normal;transform:scaleX(0.8300);">Jan</div>
<div class="t" style="left:694.11px;top:515.52px;font-size:8.6px;color:#333;font-weight:normal;transform:scaleX(0.8300);">48.8</div>
<div class="t" style="left:781.71px;top:515.52px;font-size:8.6px;color:#333;font-weight:normal;transform:scaleX(0.8300);">49.3</div>
<div class="t" style="left:869.11px;top:515.52px;font-size:8.6px;color:#333;font-weight:normal;transform:scaleX(0.8300);">49.3</div>
<svg style="left:543.8px;top:516.1px" width="8" height="7" viewBox="0 0 8 7"><path d="M0.5 2.8Q4 -0.3 7.5 2.8M2 4.3Q4 2.6 6 4.3" stroke="#1f6fd8" stroke-width="1.2" fill="none"/><circle cx="4" cy="6" r="1" fill="#1f6fd8"/></svg>
<div style="left:885.6px;top:433.3px;width:10.4px;height:92px;background:#f0f0f0;"></div>
<div style="left:886.8px;top:445.6px;width:8.6px;height:11px;background:#cdcdcd;"></div>
<svg style="left:887.5px;top:436.5px" width="7" height="5" viewBox="0 0 7 5"><path d="M0.8 4.2L3.5 1.2L6.2 4.2" stroke="#555" stroke-width="1.1" fill="none"/></svg>
<svg style="left:887.5px;top:517px" width="7" height="5" viewBox="0 0 7 5"><path d="M0.8 0.8L3.5 3.8L6.2 0.8" stroke="#555" stroke-width="1.1" fill="none"/></svg>
<div style="left:11px;top:525px;width:886px;height:1.2px;background:#5a5a5a;"></div>
<div style="left:11px;top:526px;width:886px;height:14.5px;background:#f0f0f0;"></div>
<div style="left:202.7px;top:525.5px;width:42.6px;height:14px;background:#ffffff;border:1px solid #5a5a5a;border-top:none;border-bottom-width:1.5px"></div>
<div class="t" style="left:19.60px;top:527.82px;font-size:8.6px;color:#707070;font-weight:normal;transform:scaleX(0.7857);">Trade</div>
<div class="t" style="left:50.70px;top:527.82px;font-size:8.6px;color:#707070;font-weight:normal;transform:scaleX(0.8450);">Exposure</div>
<div class="t" style="left:94.20px;top:527.82px;font-size:8.6px;color:#707070;font-weight:normal;transform:scaleX(0.9194);">History</div>
<div class="t" style="left:131.60px;top:527.82px;font-size:8.6px;color:#707070;font-weight:normal;transform:scaleX(0.8650);">News</div>
<div class="t" style="left:163.60px;top:527.82px;font-size:8.6px;color:#707070;font-weight:normal;transform:scaleX(0.8977);">Mailbox</div>
<div style="left:44.4px;top:529px;width:1px;height:9px;background:#8a8a8a;"></div>
<div style="left:88.4px;top:529px;width:1px;height:9px;background:#8a8a8a;"></div>
<div style="left:125.3px;top:529px;width:1px;height:9px;background:#8a8a8a;"></div>
<div style="left:157.3px;top:529px;width:1px;height:9px;background:#8a8a8a;"></div>
<div class="t" style="left:192.00px;top:531.80px;font-size:6.5px;color:#e02020;font-weight:bold;transform:scaleX(0.8300);">7</div>
<div class="t" style="left:209.00px;top:527.82px;font-size:8.6px;color:#1a1a1a;font-weight:normal;transform:scaleX(0.8597);">Calendar</div>
<div class="t" style="left:251.70px;top:527.82px;font-size:8.6px;color:#707070;font-weight:normal;transform:scaleX(0.8885);">Company</div>
<div class="t" style="left:298.50px;top:527.82px;font-size:8.6px;color:#707070;font-weight:normal;transform:scaleX(0.9132);">Market</div>
<div class="t" style="left:342.50px;top:527.82px;font-size:8.6px;color:#707070;font-weight:normal;transform:scaleX(0.8643);">Alerts</div>
<div class="t" style="left:375.00px;top:527.82px;font-size:8.6px;color:#707070;font-weight:normal;transform:scaleX(0.8509);">Signals</div>
<div class="t" style="left:411.50px;top:527.82px;font-size:8.6px;color:#707070;font-weight:normal;transform:scaleX(0.8335);">Articles</div>
<div class="t" style="left:461.00px;top:527.82px;font-size:8.6px;color:#707070;font-weight:normal;transform:scaleX(0.7991);">Code Base</div>
<div class="t" style="left:523.50px;top:527.82px;font-size:8.6px;color:#707070;font-weight:normal;transform:scaleX(0.6101);">VPS</div>
<div class="t" style="left:548.50px;top:527.82px;font-size:8.6px;color:#707070;font-weight:normal;transform:scaleX(0.8232);">Experts</div>
<div class="t" style="left:586.00px;top:527.82px;font-size:8.6px;color:#707070;font-weight:normal;transform:scaleX(0.8864);">Journal</div>
<div style="left:291.6px;top:529px;width:1px;height:9px;background:#8a8a8a;"></div>
<div style="left:337.5px;top:529px;width:1px;height:9px;background:#8a8a8a;"></div>
<div style="left:370px;top:529px;width:1px;height:9px;background:#8a8a8a;"></div>
<div style="left:405px;top:529px;width:1px;height:9px;background:#8a8a8a;"></div>
<div style="left:455px;top:529px;width:1px;height:9px;background:#8a8a8a;"></div>
<div style="left:517.5px;top:529px;width:1px;height:9px;background:#8a8a8a;"></div>
<div style="left:543.5px;top:529px;width:1px;height:9px;background:#8a8a8a;"></div>
<div style="left:580px;top:529px;width:1px;height:9px;background:#8a8a8a;"></div>
<div class="t" style="left:323.50px;top:531.80px;font-size:6.5px;color:#e02020;font-weight:bold;transform:scaleX(0.8300);">33</div>
<div class="t" style="left:437.50px;top:531.80px;font-size:6.5px;color:#e02020;font-weight:bold;transform:scaleX(0.8300);">661</div>
<div class="t" style="left:497.50px;top:531.80px;font-size:6.5px;color:#e02020;font-weight:bold;transform:scaleX(0.8300);">6657</div>
<div class="t" style="left:837.50px;top:527.82px;font-size:8.6px;color:#1a1a1a;font-weight:normal;transform:scaleX(0.8496);">Strategy Tester</div>
<div style="left:0px;top:541px;width:900px;height:1px;background:#d9d9d9;"></div>
<div style="left:1px;top:542px;width:899px;height:15px;background:#f3f3f3;"></div>
<div class="t" style="left:2.10px;top:546.31px;font-size:9.2px;color:#1a1a1a;font-weight:normal;transform:scaleX(0.7772);">For Help, press F1</div>
<div style="left:452.4px;top:543px;width:1px;height:13px;background:#cfcfcf;"></div>
<div style="left:534.7px;top:543px;width:1px;height:13px;background:#cfcfcf;"></div>
<div style="left:598.7px;top:543px;width:1px;height:13px;background:#cfcfcf;"></div>
<div style="left:644.4px;top:543px;width:1px;height:13px;background:#cfcfcf;"></div>
<div style="left:690.2px;top:543px;width:1px;height:13px;background:#cfcfcf;"></div>
<div style="left:733.3px;top:543px;width:1px;height:13px;background:#cfcfcf;"></div>
<div style="left:778.3px;top:543px;width:1px;height:13px;background:#cfcfcf;"></div>
<div style="left:821.7px;top:543px;width:1px;height:13px;background:#cfcfcf;"></div>
<div class="t" style="left:456.40px;top:546.31px;font-size:9.2px;color:#1a1a1a;font-weight:normal;transform:scaleX(0.8097);">Default</div>
<svg style="left:825px;top:545px" width="11" height="9" viewBox="0 0 11 9"><path d="M0 9L11 0V9Z" fill="#2ea82e"/></svg>
<div class="t" style="left:838.00px;top:546.31px;font-size:9.2px;color:#1a1a1a;font-weight:normal;transform:scaleX(0.7664);">48.70 ms</div>
<svg style="left:891px;top:551px" width="6" height="6" viewBox="0 0 6 6"><g fill="#b0b0b0"><rect x="4" y="0" width="1.2" height="1.2"/><rect x="2" y="2" width="1.2" height="1.2"/><rect x="4" y="2" width="1.2" height="1.2"/><rect x="0" y="4" width="1.2" height="1.2"/><rect x="2" y="4" width="1.2" height="1.2"/><rect x="4" y="4" width="1.2" height="1.2"/></g></svg>
<div style="left:0px;top:557px;width:900px;height:1px;background:#5a5a5a;"></div>
<div style="left:899px;top:0px;width:1px;height:558px;background:#7a7a7a;"></div>
</body></html>
